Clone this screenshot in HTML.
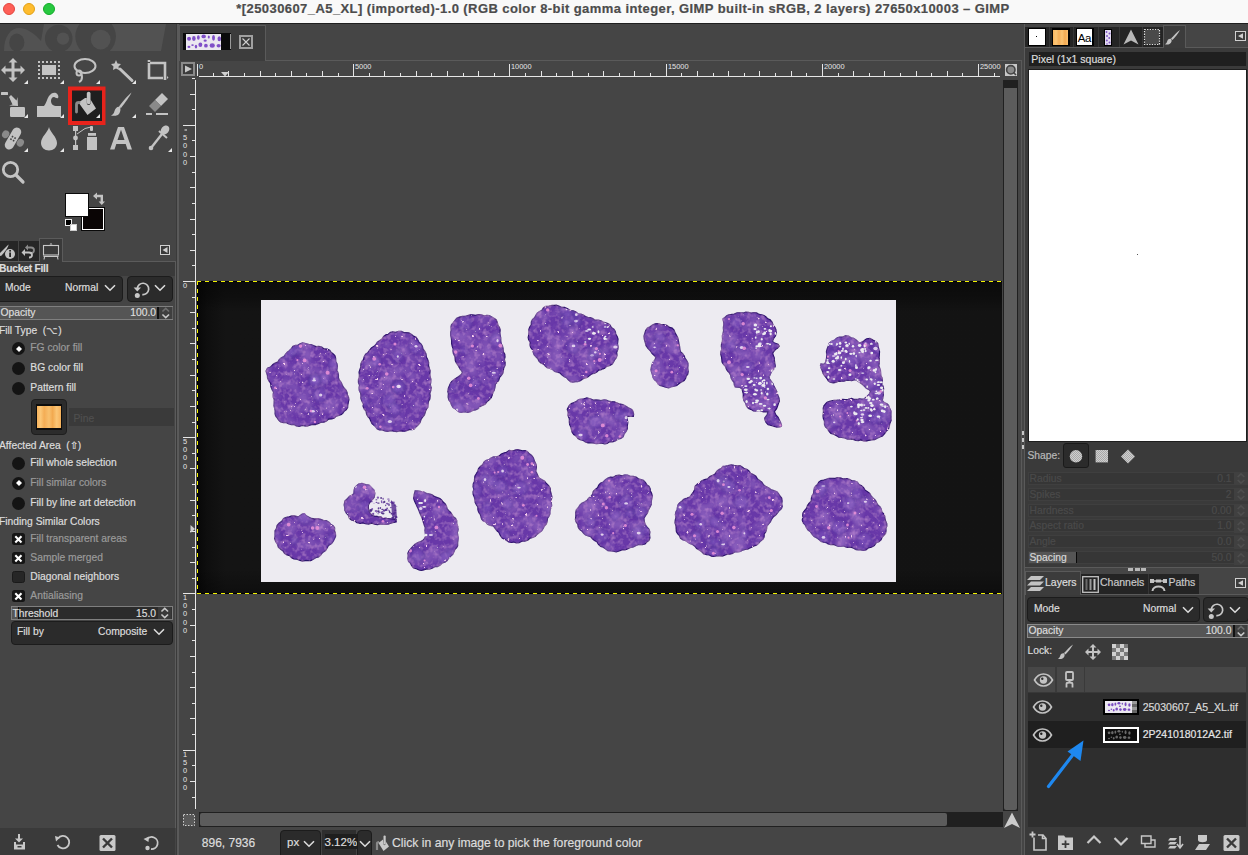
<!DOCTYPE html>
<html><head><meta charset="utf-8">
<style>
*{box-sizing:border-box;margin:0;padding:0}
html,body{width:1248px;height:855px;overflow:hidden;background:#454545;font-family:"Liberation Sans",sans-serif;color:#dcdcdc}
.a{position:absolute}
.tx{white-space:nowrap;line-height:1;-webkit-text-stroke:0.2px currentColor}
svg{overflow:visible}
</style></head><body>

<div class="a" style="left:0px;top:0px;width:1248px;height:23px;background:#f9f9f9;"></div>
<div class="a" style="left:3px;top:3px;width:12px;height:12px;border-radius:50%;background:#fe5f57;border:1px solid #e2463f"></div>
<div class="a" style="left:23px;top:3px;width:12px;height:12px;border-radius:50%;background:#febc2e;border:1px solid #e1a116"></div>
<div class="a" style="left:43px;top:3px;width:12px;height:12px;border-radius:50%;background:#28c840;border:1px solid #12ac28"></div>
<div class="a tx" style="left:-1px;top:0.5px;width:1248px;text-align:center;font-weight:bold;font-size:13px;line-height:normal;color:#4c4c4c;letter-spacing:0.42px">*[25030607_A5_XL] (imported)-1.0 (RGB color 8-bit gamma integer, GIMP built-in sRGB, 2 layers) 27650x10003 – GIMP</div>
<div class="a" style="left:0px;top:23px;width:1248px;height:1px;background:#1f1f1f;"></div>
<svg class="a" style="left:0;top:0" width="178" height="240" viewBox="0 0 178 240"><defs><clipPath id="cw"><rect x="0" y="24" width="178" height="27"/></clipPath></defs>
<!-- wilber -->
<g clip-path="url(#cw)">
<g fill="#525252">
<path d="M4 51 C4 36 11 28 19 28 C27 28 35 34 41 41 L44 24 L166 24 L161 51 Z"/>
</g>
<ellipse cx="16.8" cy="42.5" rx="7.6" ry="9" fill="#454545"/>
<circle cx="58.7" cy="38.5" r="13.8" fill="#454545"/>
<circle cx="63" cy="38.6" r="6.2" fill="#525252"/>
<circle cx="95.6" cy="36.5" r="20.3" fill="#454545"/>
<circle cx="100.7" cy="39.6" r="9.9" fill="#525252"/>
</g>
<rect x="0" y="51" width="178" height="4" fill="#454545"/>
<g fill="#c3c3c3" stroke="none">
<!-- move -->
<path d="M13 58 L17.5 62.5 L14.5 62.5 L14.5 68.5 L20.5 68.5 L20.5 65.5 L25 70 L20.5 74.5 L20.5 71.5 L14.5 71.5 L14.5 77.5 L17.5 77.5 L13 82 L8.5 77.5 L11.5 77.5 L11.5 71.5 L5.5 71.5 L5.5 74.5 L1 70 L5.5 65.5 L5.5 68.5 L11.5 68.5 L11.5 62.5 L8.5 62.5 Z"/>
<!-- rect select -->
<rect x="42" y="65" width="14" height="10"/>
<g>
<rect x="38" y="61" width="2" height="2"/><rect x="42" y="61" width="2" height="2"/><rect x="46" y="61" width="2" height="2"/><rect x="50" y="61" width="2" height="2"/><rect x="54" y="61" width="2" height="2"/><rect x="58" y="61" width="2" height="2"/>
<rect x="38" y="77" width="2" height="2"/><rect x="42" y="77" width="2" height="2"/><rect x="46" y="77" width="2" height="2"/><rect x="50" y="77" width="2" height="2"/><rect x="54" y="77" width="2" height="2"/><rect x="58" y="77" width="2" height="2"/>
<rect x="38" y="65" width="2" height="2"/><rect x="38" y="69" width="2" height="2"/><rect x="38" y="73" width="2" height="2"/>
<rect x="58" y="65" width="2" height="2"/><rect x="58" y="69" width="2" height="2"/><rect x="58" y="73" width="2" height="2"/>
</g>
<!-- corner triangles -->
<path d="M28 80 L28 84 L24 84 Z M64 80 L64 84 L60 84 Z M100 80 L100 84 L96 84 Z M136 80 L136 84 L132 84 Z M28 114 L28 118 L24 118 Z M64 114 L64 118 L60 118 Z M136 114 L136 118 L132 118 Z M28 148 L28 152 L24 152 Z M64 148 L64 152 L60 152 Z M172 148 L172 152 L168 152 Z" fill="#e8e8e8"/>
<path d="M100 114 L100 118 L96 118 Z" fill="#e8e8e8"/>
</g>
<g fill="none" stroke="#c3c3c3" stroke-width="2">
<!-- lasso -->
<ellipse cx="85" cy="66" rx="10.5" ry="7"/>
<circle cx="79" cy="73" r="2.5"/>
<path d="M79 71 C83 74 83 80 79 82"/>
</g>
<!-- wand -->
<path d="M116 60 L117.5 63.5 L121 64 L118.5 66.5 L119 70 L116 68.5 L113 70 L113.5 66.5 L111 64 L114.5 63.5 Z" fill="#c3c3c3"/>
<path d="M120 69 L132 80.5" stroke="#c3c3c3" stroke-width="3" stroke-linecap="round"/>
<!-- crop -->
<path d="M149 63 L149 78 L163 78 M149 62 L149 60 M150 63 L165 63 L165 80" fill="none" stroke="#c3c3c3" stroke-width="2.6"/>
<path d="M167 76 L168.5 77.5 L167 79 Z" fill="#c3c3c3"/>
<!-- row2: align -->
<g fill="#c3c3c3">
<rect x="1" y="92" width="7" height="3" rx="0.5"/>
<path d="M9 97 L11 95 L16.5 100.5 L17.5 97 L18 106 L9 105.5 L12.5 104.5 Z"/>
<rect x="10" y="107" width="15" height="10" rx="1.2"/>
<!-- warp -->
<path d="M37 117 L37 106 L44 106 C46 104 47 99 49 96 C51 93 54 92 56 93 C58 94 59 97 58 98 C57 99 55 97 54 97 C52 97 51 99 51 101 C51 104 53 106 57 106 L61 106 L61 117 Z"/>
</g>
<!-- selected bucket -->
<rect x="68" y="86.5" width="37.5" height="38.5" fill="#e8231b"/>
<rect x="72" y="90.5" width="30" height="30.5" fill="#1f1f1f"/>
<g fill="#c3c3c3">
<path d="M78.5 102.5 L85 98 L86.8 98 L86.8 103 C86.8 105.5 90.5 105.5 90.5 103 L90.5 99.5 L96 108.5 L87.5 115 Z"/>
<rect x="86.8" y="91.8" width="3.7" height="12.5" rx="1.8"/>
<path d="M100 114 L100 118 L96 118 Z" fill="#e8e8e8"/>
</g>
<path d="M76.5 112 L76.5 104.5 C76.5 103 77.5 102.5 79 102.5" stroke="#8a8a8a" stroke-width="2.8" fill="none" stroke-linecap="round"/>
<!-- paintbrush -->
<path d="M131.5 92.5 C130 96 125 103 121 108 L119 106.5 C123 101 128 95.5 131.5 92.5 Z M120 107 C121 109 120.5 113 118 115 C116 116 112 116 111 115.5 C113 115 114 113 114.5 111 C115.5 108 117.5 106 120 107 Z" fill="#c3c3c3"/>
<!-- eraser -->
<path d="M155 100 L162 93 L168 99 L161 106 Z" fill="#c3c3c3"/>
<path d="M149 106 L155 100 L161 106 L155 112 Z" fill="#8a8a8a"/>
<rect x="146" y="113" width="6" height="2" fill="#c3c3c3"/><rect x="156" y="113" width="12" height="2" fill="#c3c3c3"/>
<!-- row3 heal -->
<g transform="translate(13 138.5) rotate(30)">
<ellipse cx="-8.5" cy="0" rx="3.5" ry="4" fill="#8a8a8a"/>
<ellipse cx="8.5" cy="0" rx="3.5" ry="4" fill="#8a8a8a"/>
<rect x="-4.5" y="-12" width="9" height="24" rx="4.5" fill="#c3c3c3"/>
<g fill="#454545"><rect x="-2.2" y="-2.2" width="1.6" height="1.6"/><rect x="0.8" y="-2.2" width="1.6" height="1.6"/><rect x="-2.2" y="0.8" width="1.6" height="1.6"/><rect x="0.8" y="0.8" width="1.6" height="1.6"/></g>
</g>
<!-- blur drop -->
<path d="M49 127 C50 132 57 137 57 143 C57 147.5 53.5 150.5 49 150.5 C44.5 150.5 41 147.5 41 143 C41 137 48 132 49 127 Z" fill="#c3c3c3"/>
<!-- paths + clone bottle -->
<g fill="#c3c3c3">
<rect x="73" y="126" width="5" height="5"/><rect x="73" y="145" width="5" height="5"/>
<circle cx="75.5" cy="138" r="2.4"/><rect x="75" y="130" width="1.2" height="16"/>
<rect x="90" y="126" width="3" height="5" rx="1"/>
<rect x="88" y="133" width="8" height="2.8"/>
<path d="M87 137 L97 137 L97 150 L87 150 Z"/>
</g>
<path d="M77 134 L85 128.5 L91 127" stroke="#c3c3c3" stroke-width="1" fill="none"/>
<!-- text A -->
<path d="M110 149.5 L118 127 L124 127 L132 149.5 L127.5 149.5 L125.7 144 L116.3 144 L114.5 149.5 Z M117.5 140 L124.5 140 L121 129.8 Z" fill="#c3c3c3" fill-rule="evenodd"/>
<!-- color picker -->
<path d="M151 148 L162 134" stroke="#c3c3c3" stroke-width="2.4"/>
<circle cx="151" cy="148" r="2.3" fill="#c3c3c3"/>
<path d="M159 131 L167 138" stroke="#c3c3c3" stroke-width="2"/>
<ellipse cx="165" cy="130" rx="3.8" ry="5" transform="rotate(40 165 130)" fill="#c3c3c3"/>
<!-- zoom -->
<circle cx="10.5" cy="169.5" r="7.2" fill="none" stroke="#c3c3c3" stroke-width="2.8"/>
<path d="M16 175 L23 182" stroke="#c3c3c3" stroke-width="3.2" stroke-linecap="round"/>
<!-- fg/bg -->
<rect x="81" y="207" width="24" height="24" fill="#0a0a0a"/>
<rect x="82" y="208" width="22" height="22" fill="#fff"/>
<rect x="83" y="209" width="20" height="20" fill="#0a0505"/>
<rect x="65" y="193" width="24" height="24" fill="#0a0a0a"/>
<rect x="66" y="194" width="22" height="22" fill="#fff"/>
<rect x="65" y="219" width="7" height="7" fill="#eee"/><rect x="66" y="220" width="5" height="5" fill="#000"/>
<rect x="70" y="224" width="7" height="7" fill="#ccc"/><rect x="71" y="225" width="5" height="5" fill="#fff"/>
<path d="M93 196 L97 192.5 L97 194.8 L103 194.8 L103 201.5 L105 201.5 L101.8 205 L98.6 201.5 L100.6 201.5 L100.6 197.2 L97 197.2 L97 199.5 Z" fill="#c3c3c3"/>
</svg>
<div class="a" style="left:0px;top:241px;width:18px;height:20px;background:#262626;"></div>
<div class="a" style="left:19px;top:241px;width:20px;height:20px;background:#262626;"></div>
<div class="a" style="left:39px;top:238px;width:24px;height:24px;background:#3a3a3a;border:1px solid #5b5b5b;border-bottom:none"></div>
<div class="a" style="left:63px;top:261px;width:113px;height:1px;background:#5b5b5b;"></div>
<div class="a" style="left:0px;top:261px;width:39px;height:1px;background:#5b5b5b;"></div>
<div class="a" style="left:40px;top:261px;width:22px;height:1px;background:#3a3a3a;"></div>
<div class="a" style="left:175px;top:261px;width:1px;height:567px;background:#5b5b5b;"></div>
<svg class="a" style="left:0px;top:243px;" width="16" height="16" viewBox="0 0 16 16"><path d="M-2 12 L8.5 1.5 C9 3 5 9 1 13 Z" fill="#c3c3c3"/><circle cx="10" cy="11" r="5" fill="#c3c3c3"/><rect x="9.2" y="9.5" width="1.8" height="4.5" fill="#262626"/><rect x="9.2" y="7" width="1.8" height="1.6" fill="#262626"/></svg>
<svg class="a" style="left:20px;top:243px;" width="18" height="16" viewBox="0 0 18 16"><path d="M7 4.5 L11 4.5 C15 4.5 15 10 11 10" fill="none" stroke="#8a8a8a" stroke-width="1.8"/><path d="M5 4.5 L8 1.5 L8 7.5 Z" fill="#8a8a8a"/><path d="M5 9.5 L9 9.5 C13 9.5 13 14.5 9 14.5" fill="none" stroke="#c3c3c3" stroke-width="1.8"/><path d="M1.5 9.5 L5 6 L5 13 Z" fill="#c3c3c3"/></svg>
<svg class="a" style="left:42px;top:242px;" width="18" height="18" viewBox="0 0 18 18"><rect x="1.5" y="3.5" width="15" height="9.5" fill="none" stroke="#c8c8c8" stroke-width="1.1"/><rect x="1.5" y="14" width="15" height="1" fill="#c8c8c8"/><path d="M7.5 2.5 L9 1 L10.5 2.5 Z" fill="#c8c8c8"/><path d="M2.5 15 L2 17.5 M15.5 15 L16 17.5" stroke="#c8c8c8" stroke-width="1.1"/></svg>
<svg class="a" style="left:160px;top:245px;" width="10" height="10" viewBox="0 0 10 10"><rect x="0.5" y="0.5" width="9" height="9" fill="#3a3a3a" stroke="#d0d0d0" stroke-width="1"/><path d="M2.5 5 L7.5 2 L7.5 8 Z" fill="#d0d0d0"/></svg>
<div class="a" style="left:0px;top:262px;width:175px;height:14px;background:#3a3a3a;"></div>
<div class="a tx" style="left:-1px;top:264px;font-size:10.3px;color:#dcdcdc;font-weight:bold;letter-spacing:-0.25px">Bucket Fill</div>
<div class="a" style="left:-6px;top:276px;width:129px;height:26px;background:#2b2b2b;border:1px solid #1c1c1c;border-radius:4px"></div>
<div class="a tx" style="left:5px;top:283px;font-size:10.3px;color:#dcdcdc;">Mode</div>
<div class="a tx" style="left:65px;top:283px;font-size:10.3px;color:#dcdcdc;">Normal</div>
<svg class="a" style="left:104px;top:284px;" width="12" height="8" viewBox="0 0 12 8"><path d="M1 1.2 L6 6.2 L11 1.2" fill="none" stroke="#dcdcdc" stroke-width="1.6"/></svg>
<div class="a" style="left:127px;top:276px;width:46px;height:26px;background:#2b2b2b;border:1px solid #1c1c1c;border-radius:4px"></div>
<svg class="a" style="left:132.7px;top:281px;" width="16" height="16" viewBox="0 0 16 16"><path d="M4.3 7.6 A5.7 5.7 0 1 1 9.3 13.6" fill="none" stroke="#c8c8c8" stroke-width="1.7"/><path d="M0.6 6.4 L8 6.4 L4.3 10.6 Z" fill="#c8c8c8"/><circle cx="4.3" cy="14.4" r="2.5" fill="#c8c8c8"/></svg>
<svg class="a" style="left:154px;top:284px;" width="12" height="8" viewBox="0 0 12 8"><path d="M1 1.2 L6 6.2 L11 1.2" fill="none" stroke="#dcdcdc" stroke-width="1.6"/></svg>
<div class="a" style="left:0px;top:306px;width:173px;height:14px;background:#555555;border:1px solid #7f7f7f;border-left:none"></div>
<div class="a" style="left:157px;top:307px;width:1.5px;height:12px;background:#111;"></div>
<svg class="a" style="left:158.5px;top:307px;" width="13.5" height="12" viewBox="0 0 13.5 12"><rect width="13.5" height="12" fill="#3f3f3f"/><path d="M3.45 4.5 L6.75 1.4000000000000004 L10.05 4.5" fill="none" stroke="#6e6e6e" stroke-width="1.6"/><path d="M3.45 7.5 L6.75 10.6 L10.05 7.5" fill="none" stroke="#c8c8c8" stroke-width="1.6"/></svg>
<div class="a tx" style="left:0.5px;top:308px;font-size:10.3px;color:#dcdcdc;">Opacity</div>
<div class="a tx" style="right:1092px;top:308px;font-size:10.3px;color:#dcdcdc;">100.0</div>
<div class="a tx" style="left:-1px;top:326px;font-size:10.3px;color:#dcdcdc;">Fill Type&nbsp;&nbsp;(⌥)</div>
<div class="a" style="left:12.0px;top:342.0px;width:13px;height:13px;border-radius:50%;background:#141414"></div>
<svg class="a" style="left:15.5px;top:345.5px;" width="6" height="6" viewBox="0 0 6 6"><path d="M3 0 L6 3 L3 6 L0 3 Z" fill="#fff"/></svg>
<div class="a tx" style="left:30.3px;top:343px;font-size:10.3px;color:#9a9a9a;">FG color fill</div>
<div class="a" style="left:12.0px;top:361.8px;width:13px;height:13px;border-radius:50%;background:#141414"></div>
<div class="a tx" style="left:30.3px;top:363px;font-size:10.3px;color:#dcdcdc;">BG color fill</div>
<div class="a" style="left:12.0px;top:381.9px;width:13px;height:13px;border-radius:50%;background:#141414"></div>
<div class="a tx" style="left:30.3px;top:383px;font-size:10.3px;color:#dcdcdc;">Pattern fill</div>
<div class="a" style="left:31px;top:399px;width:36px;height:36px;background:#2c2c2c;border:1px solid #1e1e1e;border-radius:4px"></div>
<div class="a" style="left:36px;top:404px;width:26px;height:26px;background:#0d0d0d;"></div>
<div class="a" style="left:37px;top:405.5px;width:24px;height:22px;background:linear-gradient(90deg,#f7b25c 0%,#fbc777 15%,#f4ad55 30%,#f8c06e 50%,#f2a94f 65%,#fbc676 82%,#f5b05a 100%)"></div>
<div class="a" style="left:69px;top:408px;width:105px;height:18px;background:#3a3a3a;"></div>
<div class="a tx" style="left:73.5px;top:414px;font-size:10.3px;color:#4f4f4f;">Pine</div>
<div class="a tx" style="left:-1px;top:441px;font-size:10.3px;color:#dcdcdc;">Affected Area&nbsp;&nbsp;(⇧)</div>
<div class="a" style="left:12.0px;top:456.5px;width:13px;height:13px;border-radius:50%;background:#141414"></div>
<div class="a tx" style="left:30.3px;top:458px;font-size:10.3px;color:#dcdcdc;">Fill whole selection</div>
<div class="a" style="left:12.0px;top:476.5px;width:13px;height:13px;border-radius:50%;background:#141414"></div>
<svg class="a" style="left:15.5px;top:480px;" width="6" height="6" viewBox="0 0 6 6"><path d="M3 0 L6 3 L3 6 L0 3 Z" fill="#fff"/></svg>
<div class="a tx" style="left:30.3px;top:478px;font-size:10.3px;color:#9a9a9a;">Fill similar colors</div>
<div class="a" style="left:12.0px;top:496.5px;width:13px;height:13px;border-radius:50%;background:#141414"></div>
<div class="a tx" style="left:30.3px;top:498px;font-size:10.3px;color:#dcdcdc;">Fill by line art detection</div>
<div class="a tx" style="left:-1px;top:517px;font-size:10.3px;color:#dcdcdc;">Finding Similar Colors</div>
<div class="a" style="left:12px;top:532.5px;width:12.5px;height:12.5px;background:#151515;border-radius:2.5px;"></div>
<svg class="a" style="left:12px;top:532.5px;" width="13" height="13" viewBox="0 0 13 13"><path d="M3.3 3.3 L9.5 9.5 M9.5 3.3 L3.3 9.5" stroke="#fff" stroke-width="2.1"/></svg>
<div class="a tx" style="left:30.3px;top:534px;font-size:10.3px;color:#9a9a9a;">Fill transparent areas</div>
<div class="a" style="left:12px;top:551.5px;width:12.5px;height:12.5px;background:#151515;border-radius:2.5px;"></div>
<svg class="a" style="left:12px;top:551.5px;" width="13" height="13" viewBox="0 0 13 13"><path d="M3.3 3.3 L9.5 9.5 M9.5 3.3 L3.3 9.5" stroke="#fff" stroke-width="2.1"/></svg>
<div class="a tx" style="left:30.3px;top:553px;font-size:10.3px;color:#9a9a9a;">Sample merged</div>
<div class="a" style="left:12px;top:570.5px;width:12.5px;height:12.5px;background:#262626;border-radius:2.5px;border:1px solid #1a1a1a"></div>
<div class="a tx" style="left:30.3px;top:572px;font-size:10.3px;color:#dcdcdc;">Diagonal neighbors</div>
<div class="a" style="left:12px;top:589.5px;width:12.5px;height:12.5px;background:#151515;border-radius:2.5px;"></div>
<svg class="a" style="left:12px;top:589.5px;" width="13" height="13" viewBox="0 0 13 13"><path d="M3.3 3.3 L9.5 9.5 M9.5 3.3 L3.3 9.5" stroke="#fff" stroke-width="2.1"/></svg>
<div class="a tx" style="left:30.3px;top:591px;font-size:10.3px;color:#9a9a9a;">Antialiasing</div>
<div class="a" style="left:10.5px;top:606px;width:162px;height:14px;background:#2b2b2b;border:1px solid #7f7f7f"></div>
<div class="a" style="left:11.5px;top:607px;width:6px;height:12px;background:#555555;"></div>
<div class="a" style="left:17.5px;top:607px;width:1px;height:12px;background:#0a0a0a;"></div>
<svg class="a" style="left:158px;top:607px;" width="13.5" height="12" viewBox="0 0 13.5 12"><rect width="13.5" height="12" fill="#3a3a3a"/><path d="M3.45 4.5 L6.75 1.4000000000000004 L10.05 4.5" fill="none" stroke="#c8c8c8" stroke-width="1.6"/><path d="M3.45 7.5 L6.75 10.6 L10.05 7.5" fill="none" stroke="#c8c8c8" stroke-width="1.6"/></svg>
<div class="a tx" style="left:12.5px;top:608.5px;font-size:10.3px;color:#dcdcdc;">Threshold</div>
<div class="a tx" style="right:1092px;top:608.5px;font-size:10.3px;color:#dcdcdc;">15.0</div>
<div class="a" style="left:10.5px;top:620.5px;width:162px;height:24px;background:#2b2b2b;border:1px solid #1c1c1c;border-radius:4px"></div>
<div class="a tx" style="left:17px;top:627px;font-size:10.3px;color:#dcdcdc;">Fill by</div>
<div class="a tx" style="left:98px;top:627px;font-size:10.3px;color:#dcdcdc;">Composite</div>
<svg class="a" style="left:153px;top:628px;" width="12" height="8" viewBox="0 0 12 8"><path d="M1 1.2 L6 6.2 L11 1.2" fill="none" stroke="#dcdcdc" stroke-width="1.6"/></svg>
<div class="a" style="left:0px;top:828px;width:175px;height:27px;background:#3a3a3a;"></div>
<svg class="a" style="left:0px;top:828px;" width="178" height="27" viewBox="0 0 178 27">
<g fill="#c8c8c8">
<rect x="18" y="6" width="2" height="6"/><path d="M15 10.5 L23 10.5 L19 14.5 Z"/>
<path d="M14 14 L14 21.5 L25 21.5 L25 14 L23 14 L23 16.5 L16 16.5 L16 14 Z M17.5 18 L21.5 18 L21.5 19.5 L17.5 19.5 Z" fill-rule="evenodd"/>
</g>
<path d="M58 10.5 A6.2 6.2 0 1 1 57.5 17" fill="none" stroke="#c8c8c8" stroke-width="1.8"/><path d="M55 8 L60 9.5 L56 13.5 Z" fill="#c8c8c8"/>
<rect x="99.5" y="7" width="16" height="16" rx="1.5" fill="#c8c8c8"/><path d="M103 10.5 L112 19.5 M112 10.5 L103 19.5" stroke="#3a3a3a" stroke-width="2.4"/>
<path d="M146.5 12 A6 6 0 1 1 151 21" fill="none" stroke="#c8c8c8" stroke-width="1.8"/><path d="M143.5 11 L149 8.5 L148.5 14 Z" fill="#c8c8c8"/><circle cx="147.5" cy="20" r="2.2" fill="#c8c8c8"/>
</svg>
<div class="a" style="left:176px;top:431px;width:2px;height:4px;background:#c8c8c8;"></div>
<div class="a" style="left:176px;top:438px;width:2px;height:4px;background:#c8c8c8;"></div>
<div class="a" style="left:176px;top:445px;width:2px;height:4px;background:#c8c8c8;"></div>
<div class="a" style="left:176px;top:24px;width:1px;height:831px;background:#3a3a3a;"></div>
<div class="a" style="left:177px;top:24px;width:1.5px;height:831px;background:#5a5a5a;"></div>
<div class="a" style="left:179px;top:24px;width:842px;height:36px;background:#454545;"></div>
<div class="a" style="left:178.5px;top:24.5px;width:87px;height:36px;background:#3c3c3c;border:1px solid #5a5a5a;border-bottom:none"></div>
<div class="a" style="left:265.5px;top:59.5px;width:756px;height:1px;background:#5a5a5a;"></div>
<div class="a" style="left:1020.5px;top:59.5px;width:1px;height:796px;background:#5a5a5a;"></div>
<div class="a" style="left:183px;top:33px;width:47.5px;height:17px;background:#0a0a0a;"></div>
<div class="a" style="left:186px;top:34px;width:35px;height:15.5px;background:#ebe8f0;"></div>
<div class="a" style="left:230px;top:34px;width:1px;height:15px;background:#9a9a9a;"></div>
<svg class="a" style="left:183px;top:33px;" width="48" height="17" viewBox="0 0 48 17"><ellipse cx="6.07" cy="5.67" rx="2.00" ry="2.01" fill="#8050c8" opacity="1"/><ellipse cx="10.88" cy="5.49" rx="1.80" ry="2.39" fill="#8050c8" opacity="1"/><ellipse cx="15.37" cy="4.50" rx="1.39" ry="2.36" fill="#8050c8" opacity="1"/><ellipse cx="20.68" cy="3.39" rx="2.22" ry="1.87" fill="#8050c8" opacity="1"/><ellipse cx="22.17" cy="7.63" rx="1.62" ry="1.10" fill="#8050c8" opacity="1"/><ellipse cx="25.79" cy="4.06" rx="1.05" ry="1.56" fill="#8050c8" opacity="1"/><ellipse cx="30.51" cy="4.82" rx="1.47" ry="2.82" fill="#8050c8" opacity="1"/><ellipse cx="36.25" cy="5.84" rx="1.73" ry="2.53" fill="#8050c8" opacity="1"/><ellipse cx="5.95" cy="13.92" rx="1.48" ry="1.16" fill="#8050c8" opacity="1"/><ellipse cx="9.53" cy="12.12" rx="1.27" ry="0.99" fill="#8050c8" opacity="1"/><ellipse cx="12.98" cy="13.59" rx="1.22" ry="1.94" fill="#8050c8" opacity="1"/><ellipse cx="17.35" cy="11.74" rx="1.94" ry="2.26" fill="#8050c8" opacity="1"/><ellipse cx="22.92" cy="12.63" rx="1.86" ry="1.86" fill="#8050c8" opacity="1"/><ellipse cx="29.23" cy="12.48" rx="2.62" ry="2.19" fill="#8050c8" opacity="1"/><ellipse cx="35.61" cy="12.71" rx="2.08" ry="1.76" fill="#8050c8" opacity="1"/></svg>
<svg class="a" style="left:239px;top:35px;" width="14" height="14" viewBox="0 0 14 14"><rect x="1" y="1" width="12" height="12" fill="#3c3c3c" stroke="#a0a0a0" stroke-width="2"/><path d="M3.5 3.5 L10.5 10.5 M10.5 3.5 L3.5 10.5" stroke="#d0d0d0" stroke-width="1.1"/></svg>
<svg class="a" style="left:181px;top:62px;" width="14" height="14" viewBox="0 0 14 14"><rect x="1" y="1" width="12" height="12" fill="#3c3c3c" stroke="#8a8a8a" stroke-width="2"/><path d="M4 3.5 L11 7 L4 10.5 Z" fill="#c8c8c8"/></svg>
<svg class="a" style="left:197px;top:61px;" width="804" height="17" viewBox="0 0 804 17"><rect x="2" y="15" width="801" height="1" fill="#e6e6e6"/><rect x="0" y="3" width="1" height="12" fill="#e6e6e6"/><text x="2" y="8.3" font-size="7.4" fill="#e6e6e6" font-family="Liberation Sans">0</text><rect x="16" y="12" width="1" height="3" fill="#e6e6e6"/><rect x="31" y="10" width="1" height="5" fill="#e6e6e6"/><rect x="47" y="12" width="1" height="3" fill="#e6e6e6"/><rect x="63" y="10" width="1" height="5" fill="#e6e6e6"/><rect x="78" y="12" width="1" height="3" fill="#e6e6e6"/><rect x="94" y="10" width="1" height="5" fill="#e6e6e6"/><rect x="109" y="12" width="1" height="3" fill="#e6e6e6"/><rect x="125" y="10" width="1" height="5" fill="#e6e6e6"/><rect x="141" y="12" width="1" height="3" fill="#e6e6e6"/><rect x="156" y="3" width="1" height="12" fill="#e6e6e6"/><text x="158" y="8.3" font-size="7.4" fill="#e6e6e6" font-family="Liberation Sans">5000</text><rect x="172" y="12" width="1" height="3" fill="#e6e6e6"/><rect x="187" y="10" width="1" height="5" fill="#e6e6e6"/><rect x="203" y="12" width="1" height="3" fill="#e6e6e6"/><rect x="219" y="10" width="1" height="5" fill="#e6e6e6"/><rect x="234" y="12" width="1" height="3" fill="#e6e6e6"/><rect x="250" y="10" width="1" height="5" fill="#e6e6e6"/><rect x="266" y="12" width="1" height="3" fill="#e6e6e6"/><rect x="281" y="10" width="1" height="5" fill="#e6e6e6"/><rect x="297" y="12" width="1" height="3" fill="#e6e6e6"/><rect x="312" y="3" width="1" height="12" fill="#e6e6e6"/><text x="314" y="8.3" font-size="7.4" fill="#e6e6e6" font-family="Liberation Sans">10000</text><rect x="328" y="12" width="1" height="3" fill="#e6e6e6"/><rect x="344" y="10" width="1" height="5" fill="#e6e6e6"/><rect x="359" y="12" width="1" height="3" fill="#e6e6e6"/><rect x="375" y="10" width="1" height="5" fill="#e6e6e6"/><rect x="391" y="12" width="1" height="3" fill="#e6e6e6"/><rect x="406" y="10" width="1" height="5" fill="#e6e6e6"/><rect x="422" y="12" width="1" height="3" fill="#e6e6e6"/><rect x="437" y="10" width="1" height="5" fill="#e6e6e6"/><rect x="453" y="12" width="1" height="3" fill="#e6e6e6"/><rect x="469" y="3" width="1" height="12" fill="#e6e6e6"/><text x="471" y="8.3" font-size="7.4" fill="#e6e6e6" font-family="Liberation Sans">15000</text><rect x="484" y="12" width="1" height="3" fill="#e6e6e6"/><rect x="500" y="10" width="1" height="5" fill="#e6e6e6"/><rect x="516" y="12" width="1" height="3" fill="#e6e6e6"/><rect x="531" y="10" width="1" height="5" fill="#e6e6e6"/><rect x="547" y="12" width="1" height="3" fill="#e6e6e6"/><rect x="562" y="10" width="1" height="5" fill="#e6e6e6"/><rect x="578" y="12" width="1" height="3" fill="#e6e6e6"/><rect x="594" y="10" width="1" height="5" fill="#e6e6e6"/><rect x="609" y="12" width="1" height="3" fill="#e6e6e6"/><rect x="625" y="3" width="1" height="12" fill="#e6e6e6"/><text x="627" y="8.3" font-size="7.4" fill="#e6e6e6" font-family="Liberation Sans">20000</text><rect x="641" y="12" width="1" height="3" fill="#e6e6e6"/><rect x="656" y="10" width="1" height="5" fill="#e6e6e6"/><rect x="672" y="12" width="1" height="3" fill="#e6e6e6"/><rect x="687" y="10" width="1" height="5" fill="#e6e6e6"/><rect x="703" y="12" width="1" height="3" fill="#e6e6e6"/><rect x="719" y="10" width="1" height="5" fill="#e6e6e6"/><rect x="734" y="12" width="1" height="3" fill="#e6e6e6"/><rect x="750" y="10" width="1" height="5" fill="#e6e6e6"/><rect x="765" y="12" width="1" height="3" fill="#e6e6e6"/><rect x="781" y="3" width="1" height="12" fill="#e6e6e6"/><text x="783" y="8.3" font-size="7.4" fill="#e6e6e6" font-family="Liberation Sans">25000</text><rect x="797" y="12" width="1" height="3" fill="#e6e6e6"/><path d="M24 11 L32 11 L28 15.5 Z" fill="#cfcfcf"/></svg>
<svg class="a" style="left:180px;top:80px;" width="17" height="729" viewBox="0 0 17 729"><rect x="15" y="0" width="1" height="729" fill="#e6e6e6"/><rect x="12" y="-2" width="3" height="1" fill="#e6e6e6"/><rect x="10" y="14" width="5" height="1" fill="#e6e6e6"/><rect x="12" y="29" width="3" height="1" fill="#e6e6e6"/><rect x="3" y="45" width="12" height="1" fill="#e6e6e6"/><rect x="4.5" y="49.50" width="2.5" height="1" fill="#e6e6e6"/><text x="3" y="60.10" font-size="7.4" fill="#e6e6e6" font-family="Liberation Sans">5</text><text x="3" y="68.30" font-size="7.4" fill="#e6e6e6" font-family="Liberation Sans">0</text><text x="3" y="76.50" font-size="7.4" fill="#e6e6e6" font-family="Liberation Sans">0</text><text x="3" y="84.70" font-size="7.4" fill="#e6e6e6" font-family="Liberation Sans">0</text><rect x="12" y="60" width="3" height="1" fill="#e6e6e6"/><rect x="10" y="76" width="5" height="1" fill="#e6e6e6"/><rect x="12" y="92" width="3" height="1" fill="#e6e6e6"/><rect x="10" y="107" width="5" height="1" fill="#e6e6e6"/><rect x="12" y="123" width="3" height="1" fill="#e6e6e6"/><rect x="10" y="139" width="5" height="1" fill="#e6e6e6"/><rect x="12" y="154" width="3" height="1" fill="#e6e6e6"/><rect x="10" y="170" width="5" height="1" fill="#e6e6e6"/><rect x="12" y="185" width="3" height="1" fill="#e6e6e6"/><rect x="3" y="201" width="12" height="1" fill="#e6e6e6"/><text x="3" y="207.90" font-size="7.4" fill="#e6e6e6" font-family="Liberation Sans">0</text><rect x="12" y="217" width="3" height="1" fill="#e6e6e6"/><rect x="10" y="232" width="5" height="1" fill="#e6e6e6"/><rect x="12" y="248" width="3" height="1" fill="#e6e6e6"/><rect x="10" y="263" width="5" height="1" fill="#e6e6e6"/><rect x="12" y="279" width="3" height="1" fill="#e6e6e6"/><rect x="10" y="295" width="5" height="1" fill="#e6e6e6"/><rect x="12" y="310" width="3" height="1" fill="#e6e6e6"/><rect x="10" y="326" width="5" height="1" fill="#e6e6e6"/><rect x="12" y="342" width="3" height="1" fill="#e6e6e6"/><rect x="3" y="357" width="12" height="1" fill="#e6e6e6"/><text x="3" y="363.90" font-size="7.4" fill="#e6e6e6" font-family="Liberation Sans">5</text><text x="3" y="372.10" font-size="7.4" fill="#e6e6e6" font-family="Liberation Sans">0</text><text x="3" y="380.30" font-size="7.4" fill="#e6e6e6" font-family="Liberation Sans">0</text><text x="3" y="388.50" font-size="7.4" fill="#e6e6e6" font-family="Liberation Sans">0</text><rect x="12" y="373" width="3" height="1" fill="#e6e6e6"/><rect x="10" y="388" width="5" height="1" fill="#e6e6e6"/><rect x="12" y="404" width="3" height="1" fill="#e6e6e6"/><rect x="10" y="420" width="5" height="1" fill="#e6e6e6"/><rect x="12" y="435" width="3" height="1" fill="#e6e6e6"/><rect x="10" y="451" width="5" height="1" fill="#e6e6e6"/><rect x="12" y="467" width="3" height="1" fill="#e6e6e6"/><rect x="10" y="482" width="5" height="1" fill="#e6e6e6"/><rect x="12" y="498" width="3" height="1" fill="#e6e6e6"/><rect x="3" y="513" width="12" height="1" fill="#e6e6e6"/><text x="3" y="519.90" font-size="7.4" fill="#e6e6e6" font-family="Liberation Sans">1</text><text x="3" y="528.10" font-size="7.4" fill="#e6e6e6" font-family="Liberation Sans">0</text><text x="3" y="536.30" font-size="7.4" fill="#e6e6e6" font-family="Liberation Sans">0</text><text x="3" y="544.50" font-size="7.4" fill="#e6e6e6" font-family="Liberation Sans">0</text><text x="3" y="552.70" font-size="7.4" fill="#e6e6e6" font-family="Liberation Sans">0</text><rect x="12" y="529" width="3" height="1" fill="#e6e6e6"/><rect x="10" y="545" width="5" height="1" fill="#e6e6e6"/><rect x="12" y="560" width="3" height="1" fill="#e6e6e6"/><rect x="10" y="576" width="5" height="1" fill="#e6e6e6"/><rect x="12" y="592" width="3" height="1" fill="#e6e6e6"/><rect x="10" y="607" width="5" height="1" fill="#e6e6e6"/><rect x="12" y="623" width="3" height="1" fill="#e6e6e6"/><rect x="10" y="638" width="5" height="1" fill="#e6e6e6"/><rect x="12" y="654" width="3" height="1" fill="#e6e6e6"/><rect x="3" y="670" width="12" height="1" fill="#e6e6e6"/><text x="3" y="676.90" font-size="7.4" fill="#e6e6e6" font-family="Liberation Sans">1</text><text x="3" y="685.10" font-size="7.4" fill="#e6e6e6" font-family="Liberation Sans">5</text><text x="3" y="693.30" font-size="7.4" fill="#e6e6e6" font-family="Liberation Sans">0</text><text x="3" y="701.50" font-size="7.4" fill="#e6e6e6" font-family="Liberation Sans">0</text><text x="3" y="709.70" font-size="7.4" fill="#e6e6e6" font-family="Liberation Sans">0</text><rect x="12" y="685" width="3" height="1" fill="#e6e6e6"/><rect x="10" y="701" width="5" height="1" fill="#e6e6e6"/><rect x="12" y="717" width="3" height="1" fill="#e6e6e6"/><path d="M10.5 445 L15 449 L10.5 453 Z" fill="#cfcfcf"/></svg>
<svg class="a" style="left:1005px;top:64px;" width="12" height="12" viewBox="0 0 12 12"><rect width="12" height="12" fill="#c8c8c8"/><circle cx="5.8" cy="5.8" r="4.2" fill="#8a8a8a" stroke="#454545" stroke-width="1.6"/><path d="M8.5 8.5 L11 11" stroke="#454545" stroke-width="1.6"/></svg>
<div class="a" style="left:1003px;top:80px;width:15px;height:731px;background:#202020;"></div>
<div class="a" style="left:1004px;top:88px;width:13px;height:722px;background:#5c5c5c;border-radius:0 0 2px 2px"></div>
<div class="a" style="left:199px;top:812px;width:804px;height:15px;background:#202020;"></div>
<div class="a" style="left:200px;top:813px;width:747px;height:13px;background:#5c5c5c;border-radius:2px"></div>
<svg class="a" style="left:1003px;top:812px;" width="18" height="17" viewBox="0 0 18 17"><path d="M9 0.5 L17 16 L9 12 L1 16 Z" fill="#cccccc"/></svg>
<svg class="a" style="left:183px;top:814px;" width="12" height="12" viewBox="0 0 12 12"><rect x="0.5" y="0.5" width="11" height="11" fill="#5a5a5a" stroke="#d0d0d0" stroke-width="1" stroke-dasharray="1.5 1.5"/></svg>
<div class="a tx" style="left:201.8px;top:837px;font-size:12px;color:#dcdcdc;">896, 7936</div>
<div class="a" style="left:279.5px;top:830px;width:41px;height:30px;background:#2b2b2b;border:1px solid #1c1c1c;border-radius:4px"></div>
<div class="a tx" style="left:287px;top:837px;font-size:11.5px;color:#dcdcdc;">px</div>
<svg class="a" style="left:303px;top:840px;" width="12" height="8" viewBox="0 0 12 8"><path d="M1 1.2 L6 6.2 L11 1.2" fill="none" stroke="#dcdcdc" stroke-width="1.6"/></svg>
<div class="a" style="left:322px;top:830px;width:34px;height:30px;background:#2e2e2e;"></div>
<div class="a" style="left:324.5px;top:834px;width:33px;height:15px;background:#1e1e1e;"></div>
<div class="a tx" style="left:324.5px;top:837px;font-size:11.5px;color:#dcdcdc;">3.12%</div>
<div class="a" style="left:357px;top:830px;width:15px;height:30px;background:#2b2b2b;border:1px solid #1c1c1c;border-radius:4px"></div>
<svg class="a" style="left:358.5px;top:840px;" width="12" height="8" viewBox="0 0 12 8"><path d="M1 1.2 L6 6.2 L11 1.2" fill="none" stroke="#dcdcdc" stroke-width="1.6"/></svg>
<svg class="a" style="left:374px;top:834px;" width="16" height="18" viewBox="0 0 16 18"><path d="M3 16 L3 9.5 C3 8.5 4 8 5 8" stroke="#8a8a8a" stroke-width="2.2" fill="none"/><path d="M4.5 9 L9 5.5 L9.5 10 C9.5 11.5 11.5 11.5 11.5 10 L11.5 7 L15 12.5 L9.5 17 Z" fill="#c8c8c8"/><rect x="9.5" y="1.5" width="2.2" height="9" rx="1" fill="#c8c8c8"/></svg>
<div class="a tx" style="left:392px;top:837px;font-size:12.2px;color:#dcdcdc;">Click in any image to pick the foreground color</div>
<svg class="a" style="left:197px;top:281px;overflow:hidden" width="805" height="313" viewBox="0 0 805 313"><defs><linearGradient id="vl" x1="0" x2="1"><stop offset="0" stop-color="#070707"/><stop offset="0.012" stop-color="#0e0e0e"/><stop offset="0.035" stop-color="#141414"/><stop offset="1" stop-color="#131313"/></linearGradient><filter id="tex" x="0" y="0" width="100%" height="100%"><feTurbulence type="fractalNoise" baseFrequency="0.35" numOctaves="2" seed="3"/><feColorMatrix values="0 0 0 0 0.55  0 0 0 0 0.4  0 0 0 0 0.85  0 0 0 1.6 -0.75"/><feComposite in2="SourceGraphic" operator="in"/></filter><filter id="bl1" x="-30%" y="-30%" width="160%" height="160%"><feGaussianBlur stdDeviation="0.9"/></filter></defs><rect x="0" y="0" width="805" height="313" fill="url(#vl)"/><defs><linearGradient id="vt" x1="0" x2="0" y1="0" y2="1"><stop offset="0" stop-color="#000" stop-opacity="0.45"/><stop offset="0.05" stop-color="#000" stop-opacity="0.3"/><stop offset="0.1" stop-color="#000" stop-opacity="0"/><stop offset="0.92" stop-color="#000" stop-opacity="0"/><stop offset="1" stop-color="#000" stop-opacity="0.3"/></linearGradient></defs><rect x="0" y="0" width="805" height="313" fill="url(#vt)"/><rect x="64" y="19" width="635" height="282" fill="#edebf1"/><defs><filter id="tx2" x="-5%" y="-5%" width="110%" height="110%"><feTurbulence type="fractalNoise" baseFrequency="0.22" numOctaves="2" seed="5" result="n1"/><feColorMatrix in="n1" type="matrix" values="0 0 0 0 0.58  0 0 0 0 0.28  0 0 0 0 0.68  0 0 0 1.2 -0.55" result="st"/><feComposite in="st" in2="SourceAlpha" operator="in" result="st2"/><feTurbulence type="fractalNoise" baseFrequency="0.06" numOctaves="2" seed="21" result="n3"/><feColorMatrix in="n3" type="matrix" values="0 0 0 0 0.36  0 0 0 0 0.18  0 0 0 0 0.60  0 0 0 1.4 -0.6" result="dk"/><feComposite in="dk" in2="SourceAlpha" operator="in" result="dk2"/><feTurbulence type="fractalNoise" baseFrequency="0.28" numOctaves="2" seed="9" result="n2"/><feColorMatrix in="n2" type="matrix" values="0 0 0 0 0.93  0 0 0 0 0.62  0 0 0 0 0.86  0 0 0 16 -12.0" result="pk"/><feComposite in="pk" in2="SourceAlpha" operator="in" result="pk2"/><feTurbulence type="fractalNoise" baseFrequency="0.5" numOctaves="2" seed="13" result="n4"/><feColorMatrix in="n4" type="matrix" values="0 0 0 0 0.96  0 0 0 0 0.93  0 0 0 0 0.98  0 0 0 16 -13.0" result="wh"/><feComposite in="wh" in2="SourceAlpha" operator="in" result="wh2"/><feMerge><feMergeNode in="SourceGraphic"/><feMergeNode in="dk2"/><feMergeNode in="st2"/><feMergeNode in="pk2"/><feMergeNode in="wh2"/></feMerge></filter></defs><ellipse cx="179.4" cy="218.7" rx="1.0" ry="0.5" fill="#3c1c78" opacity="0.85"/><ellipse cx="173.5" cy="230.3" rx="1.3" ry="1.0" fill="#6e44a8" opacity="0.85"/><ellipse cx="179.0" cy="230.0" rx="1.3" ry="1.1" fill="#6e44a8" opacity="0.85"/><ellipse cx="180.1" cy="240.5" rx="1.3" ry="1.0" fill="#4a2488" opacity="0.85"/><ellipse cx="194.6" cy="221.0" rx="0.8" ry="1.1" fill="#6e44a8" opacity="0.85"/><ellipse cx="198.9" cy="238.1" rx="0.6" ry="0.9" fill="#6e44a8" opacity="0.85"/><ellipse cx="191.1" cy="229.2" rx="0.7" ry="0.6" fill="#5e3298" opacity="0.85"/><ellipse cx="198.5" cy="237.3" rx="0.5" ry="0.6" fill="#6e44a8" opacity="0.85"/><ellipse cx="192.0" cy="224.1" rx="0.9" ry="0.9" fill="#5e3298" opacity="0.85"/><ellipse cx="184.6" cy="220.2" rx="0.8" ry="1.0" fill="#6e44a8" opacity="0.85"/><ellipse cx="175.2" cy="228.0" rx="1.0" ry="0.9" fill="#6e44a8" opacity="0.85"/><ellipse cx="191.9" cy="219.8" rx="0.6" ry="1.1" fill="#5e3298" opacity="0.85"/><ellipse cx="190.1" cy="227.5" rx="0.9" ry="1.0" fill="#5e3298" opacity="0.85"/><ellipse cx="181.7" cy="230.5" rx="0.6" ry="0.4" fill="#6e44a8" opacity="0.85"/><ellipse cx="179.2" cy="235.9" rx="0.6" ry="1.1" fill="#5e3298" opacity="0.85"/><ellipse cx="180.9" cy="216.7" rx="1.2" ry="1.1" fill="#6e44a8" opacity="0.85"/><ellipse cx="198.8" cy="235.1" rx="0.5" ry="0.6" fill="#6e44a8" opacity="0.85"/><ellipse cx="199.1" cy="236.2" rx="1.4" ry="1.1" fill="#3c1c78" opacity="0.85"/><ellipse cx="191.4" cy="218.0" rx="1.4" ry="0.6" fill="#5e3298" opacity="0.85"/><ellipse cx="179.8" cy="231.6" rx="0.8" ry="0.4" fill="#5e3298" opacity="0.85"/><ellipse cx="174.2" cy="220.4" rx="1.5" ry="0.9" fill="#6e44a8" opacity="0.85"/><ellipse cx="184.9" cy="221.4" rx="0.6" ry="0.4" fill="#5e3298" opacity="0.85"/><ellipse cx="192.9" cy="231.5" rx="1.1" ry="0.8" fill="#5e3298" opacity="0.85"/><ellipse cx="188.7" cy="224.4" rx="0.6" ry="0.8" fill="#4a2488" opacity="0.85"/><ellipse cx="193.9" cy="226.6" rx="1.0" ry="0.6" fill="#5e3298" opacity="0.85"/><ellipse cx="184.1" cy="217.0" rx="0.9" ry="0.9" fill="#3c1c78" opacity="0.85"/><ellipse cx="184.6" cy="221.6" rx="0.5" ry="0.6" fill="#5e3298" opacity="0.85"/><ellipse cx="179.5" cy="221.4" rx="0.9" ry="0.6" fill="#5e3298" opacity="0.85"/><ellipse cx="181.8" cy="239.2" rx="1.1" ry="1.2" fill="#6e44a8" opacity="0.85"/><ellipse cx="183.9" cy="239.4" rx="1.0" ry="0.5" fill="#4a2488" opacity="0.85"/><ellipse cx="178.7" cy="238.7" rx="0.8" ry="0.9" fill="#5e3298" opacity="0.85"/><ellipse cx="194.6" cy="232.7" rx="1.0" ry="0.9" fill="#3c1c78" opacity="0.85"/><ellipse cx="191.5" cy="223.0" rx="1.5" ry="0.5" fill="#3c1c78" opacity="0.85"/><ellipse cx="199.2" cy="241.0" rx="0.5" ry="1.1" fill="#5e3298" opacity="0.85"/><ellipse cx="176.4" cy="241.2" rx="1.4" ry="1.0" fill="#4a2488" opacity="0.85"/><ellipse cx="185.5" cy="228.3" rx="1.4" ry="0.6" fill="#3c1c78" opacity="0.85"/><ellipse cx="173.1" cy="240.0" rx="1.1" ry="0.6" fill="#4a2488" opacity="0.85"/><ellipse cx="183.7" cy="236.0" rx="1.4" ry="0.8" fill="#3c1c78" opacity="0.85"/><ellipse cx="196.7" cy="221.2" rx="1.3" ry="0.8" fill="#6e44a8" opacity="0.85"/><ellipse cx="194.2" cy="239.8" rx="0.5" ry="0.4" fill="#3c1c78" opacity="0.85"/><ellipse cx="189.1" cy="228.7" rx="1.1" ry="0.5" fill="#6e44a8" opacity="0.85"/><ellipse cx="182.8" cy="236.0" rx="0.8" ry="0.7" fill="#4a2488" opacity="0.85"/><ellipse cx="175.0" cy="241.0" rx="0.9" ry="1.0" fill="#3c1c78" opacity="0.85"/><ellipse cx="181.4" cy="222.1" rx="1.4" ry="0.7" fill="#3c1c78" opacity="0.85"/><ellipse cx="175.1" cy="239.8" rx="1.0" ry="0.7" fill="#6e44a8" opacity="0.85"/><ellipse cx="196.2" cy="236.2" rx="1.1" ry="1.2" fill="#4a2488" opacity="0.85"/><ellipse cx="190.2" cy="240.2" rx="0.9" ry="1.0" fill="#3c1c78" opacity="0.85"/><ellipse cx="177.5" cy="238.7" rx="1.2" ry="0.7" fill="#5e3298" opacity="0.85"/><ellipse cx="196.2" cy="222.7" rx="1.2" ry="0.4" fill="#4a2488" opacity="0.85"/><ellipse cx="181.4" cy="230.2" rx="1.3" ry="0.9" fill="#3c1c78" opacity="0.85"/><ellipse cx="187.2" cy="229.5" rx="1.3" ry="0.7" fill="#3c1c78" opacity="0.85"/><ellipse cx="193.7" cy="241.6" rx="1.2" ry="0.9" fill="#4a2488" opacity="0.85"/><ellipse cx="181.5" cy="239.7" rx="1.3" ry="0.9" fill="#3c1c78" opacity="0.85"/><ellipse cx="198.3" cy="229.2" rx="1.1" ry="0.8" fill="#3c1c78" opacity="0.85"/><ellipse cx="176.8" cy="236.0" rx="1.5" ry="0.7" fill="#6e44a8" opacity="0.85"/><ellipse cx="184.7" cy="231.7" rx="0.8" ry="1.2" fill="#5e3298" opacity="0.85"/><ellipse cx="178.3" cy="236.6" rx="0.6" ry="0.9" fill="#4a2488" opacity="0.85"/><ellipse cx="197.4" cy="224.6" rx="0.8" ry="0.6" fill="#6e44a8" opacity="0.85"/><ellipse cx="173.6" cy="216.5" rx="1.3" ry="1.0" fill="#4a2488" opacity="0.85"/><ellipse cx="188.8" cy="228.9" rx="1.3" ry="1.2" fill="#4a2488" opacity="0.85"/><ellipse cx="176.2" cy="232.9" rx="1.1" ry="1.1" fill="#5e3298" opacity="0.85"/><ellipse cx="181.2" cy="240.1" rx="1.4" ry="0.6" fill="#3c1c78" opacity="0.85"/><ellipse cx="186.2" cy="221.7" rx="0.7" ry="0.7" fill="#6e44a8" opacity="0.85"/><ellipse cx="189.9" cy="241.9" rx="1.0" ry="1.2" fill="#3c1c78" opacity="0.85"/><ellipse cx="181.5" cy="227.4" rx="0.8" ry="1.1" fill="#4a2488" opacity="0.85"/><ellipse cx="185.4" cy="230.6" rx="0.9" ry="0.7" fill="#6e44a8" opacity="0.85"/><ellipse cx="173.8" cy="229.3" rx="1.5" ry="1.2" fill="#3c1c78" opacity="0.85"/><ellipse cx="197.8" cy="231.7" rx="1.4" ry="1.0" fill="#6e44a8" opacity="0.85"/><ellipse cx="186.1" cy="232.6" rx="1.4" ry="1.0" fill="#3c1c78" opacity="0.85"/><ellipse cx="177.0" cy="222.2" rx="0.6" ry="0.4" fill="#6e44a8" opacity="0.85"/><ellipse cx="183.7" cy="231.1" rx="0.5" ry="0.6" fill="#6e44a8" opacity="0.85"/><ellipse cx="193.3" cy="221.3" rx="0.6" ry="0.6" fill="#6e44a8" opacity="0.85"/><ellipse cx="196.7" cy="232.7" rx="1.2" ry="0.9" fill="#5e3298" opacity="0.85"/><ellipse cx="198.7" cy="238.8" rx="1.1" ry="1.0" fill="#4a2488" opacity="0.85"/><ellipse cx="192.5" cy="230.4" rx="0.7" ry="1.1" fill="#3c1c78" opacity="0.85"/><ellipse cx="186.1" cy="217.8" rx="0.7" ry="1.1" fill="#5e3298" opacity="0.85"/><ellipse cx="186.9" cy="230.0" rx="1.4" ry="0.7" fill="#6e44a8" opacity="0.85"/><ellipse cx="183.4" cy="227.0" rx="0.8" ry="0.9" fill="#4a2488" opacity="0.85"/><ellipse cx="181.2" cy="236.5" rx="0.7" ry="1.1" fill="#4a2488" opacity="0.85"/><ellipse cx="195.2" cy="222.0" rx="1.0" ry="1.0" fill="#4a2488" opacity="0.85"/><ellipse cx="178.0" cy="237.5" rx="0.8" ry="0.5" fill="#3c1c78" opacity="0.85"/><ellipse cx="187.3" cy="220.9" rx="1.1" ry="1.1" fill="#3c1c78" opacity="0.85"/><ellipse cx="181.2" cy="232.8" rx="1.1" ry="0.4" fill="#3c1c78" opacity="0.85"/><ellipse cx="190.1" cy="222.6" rx="1.3" ry="0.8" fill="#6e44a8" opacity="0.85"/><ellipse cx="195.5" cy="237.0" rx="1.4" ry="1.1" fill="#4a2488" opacity="0.85"/><ellipse cx="196.8" cy="233.1" rx="1.1" ry="0.8" fill="#4a2488" opacity="0.85"/><ellipse cx="199.7" cy="225.2" rx="0.7" ry="0.4" fill="#4a2488" opacity="0.85"/><ellipse cx="187.0" cy="237.5" rx="0.5" ry="0.9" fill="#5e3298" opacity="0.85"/><ellipse cx="182.1" cy="231.6" rx="1.2" ry="0.5" fill="#5e3298" opacity="0.85"/><path d="M173 239 L199 237 L200 241 L175 243 Z" fill="#52288e" opacity="0.9"/><path d="M194 219 L199 224 L200 237 L195 235 Z" fill="#52288e" opacity="0.8"/><g filter="url(#tx2)"><g fill="#6838a8" stroke="#2c126c" stroke-width="1.1"><path d="M112.2 63.5 L114.2 63.6 L116.5 64.5 L119.0 65.6 L121.9 65.3 L124.7 66.1 L127.1 67.9 L130.2 68.1 L132.7 69.3 L134.4 71.5 L136.3 73.0 L137.9 74.6 L138.7 77.2 L138.8 80.4 L140.0 82.7 L140.4 85.5 L139.9 88.9 L140.9 91.3 L141.5 93.9 L141.5 96.6 L142.2 98.8 L144.3 101.5 L145.4 104.2 L146.8 106.7 L149.0 109.1 L150.1 111.3 L150.3 113.4 L151.5 115.8 L152.0 118.7 L151.4 121.2 L150.9 123.8 L150.7 126.6 L149.2 128.8 L147.0 130.4 L146.0 132.2 L144.4 133.6 L141.9 134.5 L139.3 135.2 L137.4 136.9 L134.8 137.9 L131.6 138.1 L129.5 140.0 L127.1 141.1 L124.1 141.2 L121.5 142.5 L118.6 143.6 L115.6 143.4 L112.8 144.2 L110.2 145.1 L107.7 144.9 L105.6 144.5 L102.1 145.5 L99.3 144.9 L97.1 143.6 L94.4 143.7 L91.8 143.1 L89.4 141.8 L86.5 141.6 L83.6 141.1 L81.6 139.1 L79.7 136.3 L78.6 134.9 L78.0 132.7 L78.1 129.9 L77.6 127.3 L76.9 124.8 L77.1 121.7 L77.2 118.7 L76.2 116.2 L76.1 113.5 L76.5 111.0 L75.2 108.9 L73.9 105.7 L73.7 102.7 L71.6 99.6 L70.5 96.8 L70.4 94.5 L69.6 92.1 L69.0 90.0 L70.4 87.1 L73.5 85.9 L76.2 83.2 L78.1 82.0 L80.7 81.0 L82.2 78.6 L84.3 76.7 L87.0 75.5 L88.6 73.0 L90.2 71.1 L91.9 69.9 L94.5 67.4 L96.0 65.2 L98.5 64.2 L100.8 64.2 L103.0 62.7 L105.6 61.8 L108.7 62.5Z"/><path d="M193.5 51.2 L196.0 50.8 L198.7 51.2 L201.5 50.2 L204.3 50.3 L206.9 51.6 L209.5 51.6 L211.9 51.9 L213.9 53.0 L216.4 55.0 L218.9 56.0 L220.6 58.3 L221.9 61.3 L224.2 63.1 L225.4 65.2 L226.1 68.2 L227.7 70.1 L229.0 72.6 L229.4 75.9 L230.7 78.5 L231.7 81.3 L231.6 84.4 L232.3 87.1 L233.2 89.8 L232.9 92.9 L233.2 95.7 L234.0 98.4 L233.8 101.2 L233.4 103.8 L234.3 106.7 L233.9 109.6 L232.9 112.2 L233.3 115.2 L232.9 118.0 L231.6 120.2 L231.3 122.8 L230.9 126.2 L229.3 128.5 L228.3 131.1 L227.5 133.9 L225.8 135.9 L224.2 138.2 L223.2 141.4 L221.5 143.6 L219.5 145.5 L217.3 148.0 L215.3 148.7 L212.8 148.6 L210.5 149.6 L207.8 150.3 L204.9 149.9 L202.2 150.1 L199.5 150.6 L197.0 150.3 L193.9 149.7 L190.7 150.4 L187.8 150.0 L185.2 149.0 L182.4 149.0 L180.0 147.8 L178.5 145.7 L176.7 144.2 L175.0 142.6 L173.7 140.1 L172.6 137.4 L170.8 135.6 L169.5 133.0 L169.0 130.1 L167.2 128.2 L166.1 125.6 L166.0 122.4 L164.7 119.9 L163.8 117.3 L163.8 114.5 L163.6 112.2 L162.2 109.3 L162.0 106.7 L162.5 104.2 L161.4 101.7 L161.4 98.7 L162.2 96.5 L162.3 94.0 L162.0 91.1 L162.9 88.4 L163.8 85.8 L163.9 82.7 L164.9 80.2 L166.5 78.4 L167.3 75.3 L168.8 72.9 L171.0 71.4 L172.6 69.1 L174.4 66.8 L176.9 65.3 L178.7 63.7 L180.3 61.2 L182.4 59.6 L184.7 58.2 L186.6 55.5 L188.9 53.8 L191.3 53.2Z"/><path d="M268.6 35.3 L270.6 34.6 L273.0 33.8 L275.7 33.9 L278.5 34.4 L281.5 33.5 L284.4 33.7 L287.1 34.8 L289.9 34.3 L292.3 34.6 L294.1 35.6 L296.9 37.3 L299.2 38.7 L300.4 41.3 L301.0 44.4 L302.4 46.2 L303.2 48.6 L303.0 51.7 L303.2 54.2 L303.8 56.7 L303.8 60.1 L304.2 62.5 L305.5 64.7 L306.1 67.6 L306.3 70.6 L307.8 73.2 L308.1 75.9 L307.5 78.5 L308.2 81.6 L308.1 84.4 L306.8 86.9 L306.4 89.4 L306.0 92.1 L304.4 94.3 L302.6 96.4 L301.8 99.2 L300.2 101.4 L298.4 103.2 L298.0 106.5 L297.3 109.3 L296.1 111.3 L295.3 113.9 L294.3 116.7 L292.3 118.8 L290.1 120.6 L288.1 123.2 L285.4 124.5 L283.2 125.5 L281.0 127.8 L278.5 128.9 L276.1 129.2 L273.5 130.8 L270.8 131.4 L268.1 130.8 L265.1 131.3 L262.3 131.1 L260.0 129.4 L258.1 127.9 L256.0 126.6 L254.5 123.9 L253.3 120.9 L251.8 118.9 L251.1 116.3 L251.3 112.7 L250.8 110.4 L251.2 107.5 L252.6 104.2 L253.5 102.0 L254.8 100.3 L257.4 98.2 L259.9 96.6 L261.7 95.5 L263.9 93.8 L265.4 91.7 L264.6 89.9 L262.8 87.8 L261.4 85.0 L259.3 81.9 L258.3 79.8 L258.0 77.6 L257.8 75.4 L256.4 72.7 L255.8 70.1 L256.1 68.0 L255.1 65.1 L254.6 62.4 L254.6 60.2 L254.3 57.5 L253.6 54.1 L253.6 51.4 L254.1 49.3 L253.9 46.1 L254.4 43.7 L256.1 41.8 L257.8 39.5 L259.7 37.2 L262.4 36.1 L265.3 35.3Z"/><path d="M355.1 24.4 L357.0 24.4 L359.2 24.1 L361.9 24.9 L365.0 26.4 L367.7 26.4 L370.7 27.7 L373.6 29.5 L376.3 29.8 L378.7 30.8 L381.3 32.9 L384.0 33.1 L386.4 33.9 L388.5 35.4 L390.7 36.3 L393.4 36.6 L395.8 37.6 L397.8 39.0 L401.2 39.1 L404.1 39.7 L406.1 41.0 L408.8 41.8 L411.5 42.7 L413.2 44.2 L414.4 46.4 L416.9 48.1 L418.4 50.4 L418.8 52.9 L420.2 55.4 L421.1 58.1 L420.8 60.4 L420.5 62.9 L421.2 65.7 L420.9 68.5 L419.7 71.2 L420.1 74.1 L419.4 76.7 L417.9 78.6 L416.6 81.0 L415.3 83.0 L412.9 84.4 L409.8 85.4 L407.7 87.3 L404.2 88.6 L401.7 89.1 L400.1 90.8 L397.8 92.2 L394.9 92.9 L392.6 94.6 L390.2 96.4 L387.5 97.1 L385.1 98.5 L382.9 100.1 L380.7 100.7 L378.7 100.6 L375.8 101.1 L373.4 100.7 L371.3 98.9 L369.4 96.7 L367.3 95.7 L365.0 94.1 L363.0 92.0 L360.4 91.3 L357.7 90.4 L355.6 88.6 L353.0 87.5 L350.2 86.7 L348.3 85.1 L346.5 83.2 L343.8 82.0 L341.9 80.1 L340.9 77.9 L338.9 75.9 L337.0 73.7 L336.2 71.4 L335.5 68.9 L333.6 66.5 L332.9 63.9 L333.1 61.3 L331.6 58.8 L331.1 56.4 L331.7 53.8 L331.9 51.2 L331.8 48.4 L332.7 45.9 L334.2 43.7 L334.3 41.0 L335.4 38.5 L337.5 36.7 L338.8 34.2 L340.4 31.9 L342.6 30.5 L344.8 29.3 L346.5 26.7 L348.8 25.2 L351.9 25.1Z"/><path d="M371.7 125.3 L372.5 124.0 L374.3 122.6 L377.1 121.6 L379.5 120.2 L381.6 118.6 L384.5 118.0 L387.0 117.7 L389.9 116.8 L393.3 117.8 L396.4 119.0 L398.9 118.9 L401.7 119.0 L403.9 119.5 L407.1 118.7 L409.2 119.0 L411.5 120.0 L414.1 120.6 L417.3 120.7 L419.8 121.7 L422.0 122.8 L425.8 123.5 L428.6 125.1 L431.3 126.7 L434.3 128.1 L435.8 129.6 L436.7 133.0 L436.4 135.3 L433.3 135.1 L429.4 135.5 L430.2 137.9 L430.9 141.4 L430.3 144.9 L430.4 147.8 L429.1 150.5 L427.2 153.0 L426.1 155.9 L423.8 157.4 L420.7 158.3 L418.4 160.1 L415.5 161.0 L412.6 160.9 L410.1 162.5 L407.7 163.0 L404.7 162.3 L402.3 162.4 L399.4 162.8 L396.6 162.1 L393.8 161.7 L391.0 161.9 L388.3 160.9 L386.0 159.4 L383.1 158.8 L380.9 157.5 L379.2 155.2 L376.7 153.5 L374.9 151.1 L374.4 148.7 L373.8 146.1 L372.6 143.7 L372.3 141.1 L372.3 137.8 L370.9 134.4 L371.1 131.5 L370.2 128.2Z"/><path d="M461.3 42.6 L464.0 43.6 L466.8 43.5 L469.8 44.2 L472.6 46.4 L475.2 47.1 L477.1 49.0 L478.4 52.4 L479.8 54.7 L481.0 57.2 L481.5 60.0 L482.1 63.1 L482.6 65.2 L483.0 68.5 L483.4 70.6 L485.5 72.4 L487.2 74.7 L488.0 77.0 L489.7 79.5 L491.0 82.1 L491.1 84.6 L490.8 87.1 L491.4 90.3 L490.9 92.9 L489.5 94.8 L488.7 97.3 L487.2 99.6 L484.7 100.9 L482.2 102.5 L479.8 104.5 L477.2 105.2 L474.8 105.6 L471.8 107.0 L468.7 106.3 L465.8 105.2 L462.9 104.6 L461.0 102.9 L459.4 100.3 L457.5 98.9 L456.0 96.6 L455.4 93.8 L454.5 91.3 L453.9 88.8 L454.4 85.8 L455.2 83.1 L455.9 81.2 L457.6 79.3 L458.8 76.7 L457.5 74.8 L455.0 72.4 L453.3 70.0 L450.9 67.3 L448.9 64.6 L448.3 61.8 L447.3 58.3 L446.9 55.0 L447.6 52.8 L448.6 49.6 L450.4 46.9 L453.1 45.8 L455.4 44.0 L458.0 42.9Z"/><path d="M528.4 36.0 L529.7 34.7 L531.7 33.7 L534.4 33.4 L537.2 33.0 L540.0 31.8 L543.1 31.8 L546.2 31.9 L548.9 31.0 L551.6 31.2 L554.0 32.1 L556.9 31.5 L559.6 31.9 L562.2 33.4 L564.7 33.8 L567.0 34.4 L569.1 36.0 L570.9 37.8 L573.2 38.8 L575.1 41.1 L576.3 44.5 L578.0 46.2 L579.0 48.6 L579.3 51.3 L578.6 54.7 L576.8 57.3 L575.5 60.4 L577.6 62.1 L581.1 63.2 L582.3 65.2 L580.7 67.1 L578.4 68.6 L575.8 71.8 L576.1 73.8 L577.2 76.3 L577.5 79.6 L577.9 82.5 L578.5 85.1 L576.9 88.0 L574.6 90.4 L573.5 93.0 L572.4 95.4 L572.2 97.2 L574.3 100.2 L576.1 102.7 L576.9 104.9 L578.7 108.2 L580.1 111.2 L580.6 113.5 L582.0 117.0 L582.5 120.0 L581.6 122.0 L580.7 124.8 L579.6 127.7 L578.3 129.4 L577.4 130.6 L578.9 133.9 L581.0 136.1 L581.8 137.7 L583.7 141.7 L584.6 144.4 L584.1 145.6 L582.4 146.0 L579.8 146.3 L576.4 145.2 L573.3 144.3 L571.1 143.8 L568.9 141.3 L567.8 138.6 L567.7 137.0 L570.2 133.6 L570.8 130.7 L569.2 130.9 L566.4 130.9 L563.0 129.8 L559.6 130.3 L556.4 130.0 L554.0 128.4 L551.4 127.5 L549.5 125.2 L548.3 121.6 L546.9 119.8 L546.2 116.8 L546.2 112.9 L545.6 110.5 L545.0 107.9 L542.5 106.4 L538.2 106.0 L537.3 104.1 L537.0 101.5 L535.4 99.4 L534.1 97.0 L533.6 94.2 L532.3 91.9 L530.4 89.8 L529.2 87.8 L528.6 85.7 L526.5 83.5 L525.0 81.0 L524.8 78.4 L524.5 76.2 L523.7 73.4 L523.8 70.7 L524.8 68.4 L524.3 65.3 L524.5 62.6 L525.3 60.6 L525.5 58.5 L525.3 54.8 L526.0 52.3 L526.5 49.8 L526.3 46.8 L526.6 44.4 L526.7 41.7 L525.8 38.0Z"/><path d="M630.9 65.7 L632.1 62.2 L634.4 60.2 L637.2 59.4 L639.5 57.1 L642.2 56.0 L645.5 56.0 L648.4 54.7 L651.5 55.0 L654.1 56.7 L656.7 57.2 L659.4 59.1 L661.7 61.5 L663.8 61.5 L666.3 60.3 L667.8 58.9 L669.7 57.8 L672.9 57.4 L676.1 59.1 L678.8 60.7 L680.7 62.4 L681.3 65.9 L682.2 69.0 L682.6 70.9 L682.4 73.7 L682.1 76.6 L682.5 78.8 L682.4 81.6 L681.8 84.8 L682.7 87.0 L683.5 89.3 L683.7 92.1 L683.9 94.6 L685.1 96.8 L685.4 99.6 L684.8 102.6 L686.2 105.2 L686.7 107.9 L686.2 110.4 L686.4 114.0 L685.9 117.2 L685.2 119.5 L687.1 121.4 L690.0 122.8 L691.6 124.3 L692.5 126.7 L694.1 130.1 L694.0 133.1 L694.0 135.9 L694.2 139.3 L693.1 142.0 L692.4 145.1 L691.5 148.1 L689.4 150.1 L687.6 152.7 L685.5 155.1 L682.9 156.0 L680.3 157.3 L677.7 158.8 L674.4 158.9 L671.5 159.4 L669.1 160.1 L666.5 159.9 L663.9 158.9 L661.4 159.6 L658.8 159.5 L656.2 158.4 L653.5 158.1 L650.5 158.2 L647.6 157.0 L644.7 156.5 L641.7 156.2 L639.4 154.8 L636.7 153.3 L633.9 152.4 L631.9 150.2 L630.3 147.7 L628.4 146.0 L627.4 143.5 L627.4 140.1 L626.4 137.8 L625.9 135.1 L626.3 132.0 L626.4 129.8 L626.1 127.4 L626.9 124.8 L628.9 122.4 L630.1 121.2 L631.7 120.6 L634.4 119.8 L637.1 119.3 L639.2 119.3 L642.4 118.9 L645.8 118.3 L648.1 118.6 L651.0 118.3 L654.4 117.4 L657.0 118.3 L659.9 118.4 L662.1 117.7 L664.5 118.0 L666.8 118.0 L669.7 115.7 L672.2 113.0 L673.4 110.5 L672.1 108.7 L669.3 107.4 L667.7 105.6 L665.3 103.4 L662.5 101.3 L659.3 99.0 L657.0 99.0 L654.7 99.8 L651.7 99.2 L649.0 99.4 L647.0 100.2 L644.4 100.1 L641.0 100.4 L638.8 101.4 L636.2 101.9 L633.1 101.2 L631.2 99.8 L630.1 97.9 L627.7 95.0 L626.0 92.4 L625.5 90.5 L624.1 87.4 L623.4 84.6 L623.9 82.8 L626.7 83.2 L628.7 81.5 L628.9 79.4 L629.5 77.1 L629.6 74.0 L629.4 70.3 L630.1 67.8Z"/><path d="M79.5 247.2 L80.0 244.6 L82.0 242.2 L84.8 240.1 L86.6 237.5 L89.3 236.2 L92.3 235.8 L94.6 234.9 L97.4 234.9 L100.2 235.6 L102.2 235.2 L105.2 233.1 L107.4 232.7 L109.3 234.8 L112.6 236.4 L114.6 237.4 L117.3 237.9 L120.8 237.6 L123.7 238.4 L126.3 239.2 L129.3 239.5 L132.0 241.2 L133.8 243.2 L136.4 244.8 L137.7 247.0 L137.6 249.7 L138.5 252.4 L138.7 255.2 L137.5 257.7 L136.3 260.2 L134.6 262.5 L131.5 264.6 L130.2 267.0 L128.6 269.7 L125.7 271.5 L123.7 274.2 L121.6 275.9 L118.7 276.7 L116.3 278.3 L113.7 279.7 L110.9 279.6 L108.2 279.6 L105.3 280.1 L102.5 279.2 L99.8 278.2 L96.8 278.0 L94.6 276.8 L92.8 274.8 L89.9 273.9 L87.5 272.3 L86.1 270.1 L84.0 268.5 L81.3 266.1 L80.4 263.1 L78.6 260.5 L77.6 257.8 L78.0 255.1 L78.0 252.4 L78.0 249.7Z"/><path d="M159.1 205.2 L161.6 203.0 L165.0 202.3 L168.6 203.5 L172.0 204.0 L174.8 206.9 L177.0 209.1 L177.9 212.3 L177.3 216.3 L175.8 218.1 L173.1 221.2 L171.6 223.6 L171.3 226.0 L171.9 229.7 L172.9 231.9 L175.4 234.5 L177.5 235.1 L180.0 235.4 L183.9 236.4 L186.5 236.7 L190.0 237.4 L194.3 238.0 L196.7 238.2 L199.0 239.0 L198.5 241.1 L192.9 242.4 L191.5 243.1 L189.4 243.5 L186.2 243.3 L183.0 243.1 L180.4 243.6 L177.4 243.2 L174.8 242.2 L171.5 243.1 L168.4 242.7 L165.9 241.9 L163.1 242.4 L159.9 241.7 L157.9 240.0 L154.7 239.2 L152.4 237.3 L151.4 234.5 L149.3 232.1 L147.8 229.4 L147.7 226.6 L147.1 223.9 L147.8 220.0 L150.6 217.3 L152.5 215.3 L155.1 214.1 L156.9 212.4 L157.1 209.2 L157.7 206.8Z"/><path d="M218.2 209.7 L220.5 209.9 L223.2 210.2 L227.0 211.0 L229.3 212.4 L231.9 212.9 L234.7 213.5 L237.6 215.4 L240.4 216.5 L242.9 217.4 L244.8 219.2 L246.7 221.5 L248.4 223.0 L249.5 225.2 L250.2 228.0 L251.8 229.7 L253.7 231.3 L255.1 233.5 L256.4 235.7 L258.6 237.4 L259.8 239.7 L259.8 242.7 L260.8 245.5 L261.2 248.6 L260.4 251.5 L260.8 254.2 L261.4 257.1 L261.0 259.5 L260.7 261.8 L260.7 264.8 L259.7 266.7 L258.0 268.4 L257.0 270.9 L255.8 273.4 L253.8 275.2 L251.8 277.0 L250.2 279.5 L248.0 281.2 L245.3 282.0 L243.0 284.3 L240.4 285.6 L237.8 285.7 L235.2 287.2 L232.3 288.2 L229.6 288.0 L226.8 288.9 L224.2 289.5 L222.0 289.0 L219.3 287.8 L216.5 287.0 L214.6 284.7 L213.3 282.1 L211.5 280.5 L210.8 277.8 L211.1 274.3 L210.8 272.3 L211.8 270.0 L214.2 267.1 L216.1 265.1 L218.0 263.3 L220.9 261.4 L223.6 260.4 L225.6 259.6 L227.4 257.5 L228.7 254.9 L228.3 252.7 L227.8 249.6 L228.2 246.8 L226.9 243.3 L226.1 240.6 L225.6 238.6 L224.7 236.2 L223.3 233.2 L222.4 231.1 L222.0 229.7 L220.5 226.4 L219.2 223.8 L218.5 222.2 L217.3 219.5 L216.6 217.1 L217.1 213.7Z"/><path d="M312.4 169.4 L314.6 169.7 L317.2 169.3 L320.0 168.6 L322.8 169.1 L325.4 169.8 L328.1 169.6 L330.3 170.4 L332.4 172.8 L334.7 174.5 L336.4 176.7 L337.4 179.9 L338.6 182.2 L339.5 184.3 L339.4 187.0 L338.8 190.2 L339.7 192.0 L340.7 194.2 L341.9 196.7 L344.6 198.4 L347.7 200.1 L349.4 202.5 L351.7 204.6 L353.3 207.2 L353.5 210.2 L354.3 213.1 L355.0 216.0 L354.4 218.9 L354.4 221.7 L354.7 224.6 L353.8 227.2 L353.0 229.9 L353.0 233.0 L352.0 235.3 L350.5 237.5 L350.3 240.5 L349.3 243.1 L347.4 245.0 L346.2 247.5 L344.7 249.9 L342.4 251.5 L340.2 253.2 L338.3 255.4 L335.8 256.5 L333.2 257.1 L330.8 259.2 L327.8 260.1 L324.8 260.3 L322.1 261.8 L319.4 262.0 L316.7 261.1 L314.2 261.5 L311.6 261.0 L309.3 259.2 L307.0 258.0 L304.9 256.9 L303.3 254.4 L301.9 251.4 L299.9 249.8 L298.1 247.5 L296.3 245.0 L293.2 244.5 L290.6 243.2 L288.8 241.1 L286.1 239.9 L284.6 238.2 L283.9 235.9 L283.2 233.4 L281.7 231.4 L280.9 228.8 L280.8 225.9 L279.3 223.8 L278.1 221.4 L277.8 218.7 L277.2 216.0 L276.1 213.4 L276.0 210.8 L276.8 208.5 L276.0 205.6 L276.2 202.8 L277.4 200.4 L277.5 197.6 L277.9 194.9 L279.2 192.7 L280.6 190.5 L281.5 187.6 L283.3 185.5 L285.6 183.8 L286.9 181.2 L288.8 179.4 L291.7 178.6 L294.0 177.1 L296.5 175.9 L299.4 175.7 L301.9 175.1 L304.3 173.1 L306.8 172.1 L309.4 171.2Z"/><path d="M410.9 197.0 L413.4 196.1 L416.3 196.2 L419.1 194.5 L422.1 194.0 L425.0 194.8 L427.9 193.9 L430.6 194.0 L433.2 195.3 L436.3 195.4 L439.1 196.1 L441.4 197.7 L444.0 198.5 L446.4 199.3 L448.4 201.3 L449.8 203.6 L451.9 205.2 L453.1 207.4 L453.5 210.0 L454.7 212.5 L455.4 215.1 L454.8 218.0 L454.3 220.7 L454.3 223.6 L452.8 226.5 L451.2 229.6 L450.5 232.0 L448.5 234.7 L447.0 237.3 L447.3 240.1 L448.0 242.8 L449.4 245.3 L452.1 248.4 L453.0 251.0 L452.6 253.5 L453.0 257.0 L451.9 259.6 L449.8 261.1 L448.1 262.9 L445.3 263.8 L441.7 263.6 L439.2 264.6 L436.4 266.0 L433.5 266.5 L430.4 268.1 L428.0 269.0 L425.1 269.0 L422.2 270.1 L419.2 271.0 L416.4 270.3 L413.7 270.0 L410.9 269.6 L408.4 267.9 L406.2 266.2 L403.7 265.4 L401.4 263.4 L399.9 260.7 L397.4 259.5 L395.2 257.7 L393.8 255.8 L391.2 254.9 L388.5 253.9 L386.6 252.3 L385.1 250.4 L382.7 248.7 L381.2 246.3 L380.8 243.5 L379.1 241.0 L378.3 238.4 L378.9 235.1 L378.6 231.9 L379.3 228.8 L381.7 226.1 L382.8 224.0 L384.8 222.2 L388.0 220.8 L390.1 219.1 L391.7 217.2 L393.9 215.3 L395.4 213.2 L396.3 210.4 L398.5 208.1 L400.5 206.8 L401.7 204.0 L403.7 201.9 L406.2 200.9 L408.4 198.6Z"/><path d="M528.3 185.1 L531.1 184.5 L534.1 183.7 L537.1 184.3 L540.0 184.6 L543.0 184.6 L545.2 185.9 L547.3 187.6 L549.8 188.2 L552.0 189.8 L553.7 192.3 L556.3 193.4 L558.7 195.0 L560.3 197.6 L562.6 199.4 L564.9 201.2 L566.4 203.6 L568.5 205.3 L571.6 206.7 L573.8 208.4 L576.9 209.4 L579.9 210.6 L581.5 212.5 L582.8 214.7 L584.7 217.1 L585.2 219.9 L584.8 222.8 L585.4 225.2 L584.5 227.6 L581.9 230.0 L580.4 232.2 L578.5 234.4 L575.9 236.4 L574.4 238.7 L573.4 240.9 L571.7 243.0 L569.8 245.3 L569.7 248.0 L568.9 250.7 L567.3 253.0 L567.1 256.3 L565.6 258.9 L563.2 260.3 L561.6 262.3 L559.5 264.3 L556.4 265.2 L553.6 266.8 L550.7 268.3 L548.2 268.5 L545.8 269.1 L543.5 270.5 L540.8 271.0 L538.1 270.9 L535.6 272.5 L533.1 273.3 L530.6 273.3 L528.3 273.9 L525.4 275.1 L522.6 275.0 L520.0 274.8 L517.1 275.5 L514.5 275.2 L512.3 274.0 L509.7 273.7 L506.8 272.9 L504.7 270.8 L502.2 269.1 L499.6 267.6 L497.8 265.2 L495.5 263.6 L492.7 262.6 L490.6 261.1 L488.5 259.6 L485.5 258.7 L483.4 257.1 L482.4 254.7 L480.7 252.8 L479.3 250.5 L479.1 247.5 L478.8 244.6 L477.9 241.8 L478.2 239.0 L478.9 236.4 L478.3 233.7 L478.8 231.0 L480.2 228.4 L480.4 226.0 L481.0 223.7 L482.5 221.8 L485.0 220.0 L486.7 218.3 L489.9 217.1 L492.8 215.9 L494.3 213.9 L496.2 211.4 L497.5 208.7 L498.0 205.3 L500.4 203.0 L502.7 201.7 L504.7 199.7 L507.6 198.6 L510.7 197.7 L512.9 195.5 L515.5 194.3 L517.9 193.1 L519.7 190.4 L521.8 188.5 L524.0 187.6 L526.0 185.3Z"/><path d="M635.0 197.2 L637.6 197.4 L640.3 196.5 L643.4 196.9 L646.5 197.9 L649.5 197.5 L652.4 198.3 L654.8 199.8 L657.3 199.7 L660.2 201.0 L662.2 203.5 L664.6 204.7 L666.6 206.5 L668.2 209.1 L670.5 210.7 L672.8 212.4 L674.3 215.0 L676.2 217.2 L678.5 219.3 L679.6 221.6 L680.9 223.9 L683.1 225.9 L684.4 228.2 L684.8 230.5 L686.6 232.7 L687.8 235.1 L688.0 237.5 L688.7 240.0 L689.8 242.7 L689.9 245.1 L689.0 247.3 L689.1 249.9 L688.6 252.4 L686.9 254.5 L685.1 256.5 L684.0 259.0 L681.9 260.9 L679.0 262.1 L677.3 264.6 L674.5 266.3 L671.2 267.0 L669.0 268.9 L666.4 269.5 L663.6 268.9 L661.4 268.9 L659.1 268.6 L656.5 267.3 L654.1 266.2 L651.9 266.4 L649.2 266.1 L646.6 265.0 L644.0 265.4 L641.4 265.5 L638.8 264.5 L636.5 263.6 L633.7 263.7 L631.1 263.1 L629.1 261.6 L626.5 261.2 L624.0 260.5 L622.0 258.6 L619.8 256.9 L617.0 255.5 L615.2 253.3 L613.4 250.9 L611.0 249.2 L609.4 246.8 L608.3 244.2 L606.0 241.8 L605.2 239.1 L605.8 236.4 L605.5 234.1 L606.0 231.7 L607.7 229.4 L609.6 227.1 L610.4 224.6 L612.1 222.2 L614.1 220.2 L614.3 217.4 L615.0 214.7 L616.4 212.5 L616.8 209.6 L617.4 206.8 L618.8 204.8 L620.5 203.3 L621.9 200.9 L624.0 199.5 L626.7 199.1 L629.3 198.2 L631.9 197.3Z"/></g></g><clipPath id="fc0"><path d="M112.2 63.2 C118.4 64.6 130.9 67.4 136.0 73.3 C141.1 79.2 140.2 91.6 142.7 98.7 C145.2 105.8 150.0 110.3 150.9 115.7 C151.7 121.1 151.4 127.0 147.8 131.0 C144.2 134.9 136.2 137.0 129.2 139.4 C122.1 141.8 111.7 144.8 105.5 145.4 C99.3 146.0 96.1 144.4 91.9 142.8 C87.6 141.2 82.8 141.7 80.0 136.0 C77.2 130.3 76.7 116.5 75.0 108.9 C73.3 101.3 69.6 94.5 69.9 90.3 C70.2 86.1 72.9 86.9 76.6 83.5 C80.3 80.1 88.2 73.0 91.9 69.9 C95.6 66.8 95.3 65.9 98.7 64.8 C102.1 63.7 106.0 61.8 112.2 63.2 Z"/></clipPath><g clip-path="url(#fc0)"><circle cx="117.9" cy="98.0" r="5.6" fill="#8e6ccc" opacity="0.3" filter="url(#bl1)"/><circle cx="117.9" cy="98.0" r="5.6" fill="none" stroke="#3c2088" stroke-width="1.6" opacity="0.35" filter="url(#bl1)"/><ellipse cx="117.2" cy="97.9" rx="1.3" ry="1.3" fill="#f0e4f4" opacity="0.85"/><circle cx="127.4" cy="97.8" r="5.6" fill="#8e6ccc" opacity="0.3" filter="url(#bl1)"/><circle cx="127.4" cy="97.8" r="5.6" fill="none" stroke="#3c2088" stroke-width="1.6" opacity="0.35" filter="url(#bl1)"/><circle cx="99.0" cy="67.9" r="6.6" fill="#8e6ccc" opacity="0.3" filter="url(#bl1)"/><circle cx="99.0" cy="67.9" r="6.6" fill="none" stroke="#3c2088" stroke-width="1.6" opacity="0.35" filter="url(#bl1)"/><circle cx="123.2" cy="114.2" r="7.4" fill="#8e6ccc" opacity="0.3" filter="url(#bl1)"/><circle cx="123.2" cy="114.2" r="7.4" fill="none" stroke="#3c2088" stroke-width="1.6" opacity="0.35" filter="url(#bl1)"/><ellipse cx="123.7" cy="114.0" rx="1.7" ry="1.5" fill="#f0e4f4" opacity="0.85"/><circle cx="95.4" cy="70.2" r="5.4" fill="#8e6ccc" opacity="0.3" filter="url(#bl1)"/><circle cx="95.4" cy="70.2" r="5.4" fill="none" stroke="#3c2088" stroke-width="1.6" opacity="0.35" filter="url(#bl1)"/><circle cx="117.7" cy="100.0" r="6.1" fill="#8e6ccc" opacity="0.3" filter="url(#bl1)"/><circle cx="117.7" cy="100.0" r="6.1" fill="none" stroke="#3c2088" stroke-width="1.6" opacity="0.35" filter="url(#bl1)"/><ellipse cx="117.1" cy="99.6" rx="2.0" ry="1.0" fill="#f0e4f4" opacity="0.85"/><circle cx="116.3" cy="130.7" r="4.8" fill="#8e6ccc" opacity="0.3" filter="url(#bl1)"/><circle cx="116.3" cy="130.7" r="4.8" fill="none" stroke="#3c2088" stroke-width="1.6" opacity="0.35" filter="url(#bl1)"/><ellipse cx="115.9" cy="130.3" rx="1.9" ry="1.3" fill="#f0e4f4" opacity="0.85"/><circle cx="90.8" cy="72.0" r="6.6" fill="#8e6ccc" opacity="0.3" filter="url(#bl1)"/><circle cx="90.8" cy="72.0" r="6.6" fill="none" stroke="#3c2088" stroke-width="1.6" opacity="0.35" filter="url(#bl1)"/><circle cx="137.0" cy="82.8" r="5.7" fill="#8e6ccc" opacity="0.3" filter="url(#bl1)"/><circle cx="137.0" cy="82.8" r="5.7" fill="none" stroke="#3c2088" stroke-width="1.6" opacity="0.35" filter="url(#bl1)"/><circle cx="117.9" cy="140.9" r="1.2" fill="#e58fd6" opacity="0.9"/><circle cx="103.6" cy="65.1" r="1.8" fill="#e58fd6" opacity="0.9"/><circle cx="130.6" cy="91.7" r="2.0" fill="#e58fd6" opacity="0.9"/><circle cx="100.4" cy="79.1" r="1.1" fill="#e58fd6" opacity="0.9"/><circle cx="107.6" cy="79.4" r="1.9" fill="#e58fd6" opacity="0.9"/><circle cx="78.3" cy="106.7" r="1.2" fill="#e58fd6" opacity="0.9"/><circle cx="113.9" cy="130.0" r="1.3" fill="#e58fd6" opacity="0.9"/></g><clipPath id="fc1"><path d="M193.6 52.1 C199.8 50.1 208.8 51.2 213.9 53.0 C219.0 54.8 221.3 58.4 224.1 63.2 C226.9 68.0 229.2 75.0 230.9 81.8 C232.6 88.6 234.3 97.0 234.3 103.8 C234.3 110.6 232.3 117.1 230.9 122.5 C229.5 127.9 228.1 131.8 225.8 136.0 C223.5 140.2 222.1 145.6 217.3 147.9 C212.5 150.2 203.2 149.6 197.0 149.6 C190.8 149.6 184.5 150.7 180.0 147.9 C175.5 145.1 172.7 138.5 169.9 132.6 C167.1 126.7 164.5 118.0 163.1 112.3 C161.7 106.7 160.8 104.3 161.4 98.7 C162.0 93.0 164.0 84.0 166.5 78.4 C169.0 72.7 172.1 69.2 176.6 64.8 C181.1 60.4 187.4 54.1 193.6 52.1 Z"/></clipPath><g clip-path="url(#fc1)"><circle cx="192.1" cy="139.9" r="5.3" fill="#8e6ccc" opacity="0.3" filter="url(#bl1)"/><circle cx="192.1" cy="139.9" r="5.3" fill="none" stroke="#3c2088" stroke-width="1.6" opacity="0.35" filter="url(#bl1)"/><ellipse cx="192.9" cy="140.6" rx="2.1" ry="1.5" fill="#f0e4f4" opacity="0.85"/><circle cx="191.5" cy="119.7" r="6.8" fill="#8e6ccc" opacity="0.3" filter="url(#bl1)"/><circle cx="191.5" cy="119.7" r="6.8" fill="none" stroke="#3c2088" stroke-width="1.6" opacity="0.35" filter="url(#bl1)"/><circle cx="178.8" cy="80.9" r="5.1" fill="#8e6ccc" opacity="0.3" filter="url(#bl1)"/><circle cx="178.8" cy="80.9" r="5.1" fill="none" stroke="#3c2088" stroke-width="1.6" opacity="0.35" filter="url(#bl1)"/><circle cx="202.0" cy="105.7" r="6.8" fill="#8e6ccc" opacity="0.3" filter="url(#bl1)"/><circle cx="202.0" cy="105.7" r="6.8" fill="none" stroke="#3c2088" stroke-width="1.6" opacity="0.35" filter="url(#bl1)"/><ellipse cx="202.3" cy="105.4" rx="1.7" ry="1.6" fill="#f0e4f4" opacity="0.85"/><circle cx="179.5" cy="144.9" r="3.8" fill="#8e6ccc" opacity="0.3" filter="url(#bl1)"/><circle cx="179.5" cy="144.9" r="3.8" fill="none" stroke="#3c2088" stroke-width="1.6" opacity="0.35" filter="url(#bl1)"/><circle cx="200.9" cy="75.0" r="5.7" fill="#8e6ccc" opacity="0.3" filter="url(#bl1)"/><circle cx="200.9" cy="75.0" r="5.7" fill="none" stroke="#3c2088" stroke-width="1.6" opacity="0.35" filter="url(#bl1)"/><ellipse cx="200.8" cy="75.5" rx="1.0" ry="1.2" fill="#f0e4f4" opacity="0.85"/><circle cx="218.7" cy="65.9" r="7.0" fill="#8e6ccc" opacity="0.3" filter="url(#bl1)"/><circle cx="218.7" cy="65.9" r="7.0" fill="none" stroke="#3c2088" stroke-width="1.6" opacity="0.35" filter="url(#bl1)"/><ellipse cx="219.0" cy="65.3" rx="1.5" ry="1.2" fill="#f0e4f4" opacity="0.85"/><circle cx="167.4" cy="120.3" r="5.4" fill="#8e6ccc" opacity="0.3" filter="url(#bl1)"/><circle cx="167.4" cy="120.3" r="5.4" fill="none" stroke="#3c2088" stroke-width="1.6" opacity="0.35" filter="url(#bl1)"/><circle cx="200.7" cy="106.3" r="5.6" fill="#8e6ccc" opacity="0.3" filter="url(#bl1)"/><circle cx="200.7" cy="106.3" r="5.6" fill="none" stroke="#3c2088" stroke-width="1.6" opacity="0.35" filter="url(#bl1)"/><ellipse cx="201.5" cy="105.5" rx="2.1" ry="1.7" fill="#f0e4f4" opacity="0.85"/><circle cx="197.7" cy="127.9" r="6.2" fill="#8e6ccc" opacity="0.3" filter="url(#bl1)"/><circle cx="197.7" cy="127.9" r="6.2" fill="none" stroke="#3c2088" stroke-width="1.6" opacity="0.35" filter="url(#bl1)"/><circle cx="182.7" cy="83.3" r="1.3" fill="#e58fd6" opacity="0.9"/><circle cx="183.4" cy="145.7" r="1.3" fill="#e58fd6" opacity="0.9"/><circle cx="189.7" cy="93.0" r="1.8" fill="#e58fd6" opacity="0.9"/><circle cx="196.2" cy="106.1" r="1.3" fill="#e58fd6" opacity="0.9"/><circle cx="177.2" cy="77.8" r="1.9" fill="#e58fd6" opacity="0.9"/><circle cx="198.0" cy="62.9" r="1.5" fill="#e58fd6" opacity="0.9"/><circle cx="170.2" cy="107.3" r="1.4" fill="#e58fd6" opacity="0.9"/></g><clipPath id="fc2"><path d="M268.4 34.4 C274.9 33.0 288.2 34.1 293.9 36.1 C299.6 38.1 300.7 42.2 302.4 46.2 C304.1 50.1 303.2 54.4 304.1 59.8 C305.0 65.2 307.2 73.1 307.5 78.5 C307.8 83.9 307.2 87.8 305.8 92.0 C304.4 96.2 301.0 99.9 299.0 103.9 C297.0 107.9 296.2 112.4 293.9 115.8 C291.6 119.2 288.8 121.8 285.4 124.3 C282.0 126.8 277.7 130.2 273.5 131.0 C269.3 131.8 263.7 131.9 260.0 129.4 C256.3 126.9 252.6 120.3 251.5 115.8 C250.4 111.3 250.9 106.2 253.2 102.2 C255.5 98.2 264.0 95.4 265.1 92.0 C266.2 88.6 261.7 86.4 260.0 81.9 C258.3 77.4 255.7 71.1 254.9 64.9 C254.0 58.7 252.6 49.6 254.9 44.5 C257.1 39.4 261.9 35.8 268.4 34.4 Z"/></clipPath><g clip-path="url(#fc2)"><circle cx="299.6" cy="59.4" r="6.9" fill="#8e6ccc" opacity="0.3" filter="url(#bl1)"/><circle cx="299.6" cy="59.4" r="6.9" fill="none" stroke="#3c2088" stroke-width="1.6" opacity="0.35" filter="url(#bl1)"/><ellipse cx="300.5" cy="59.7" rx="1.1" ry="1.6" fill="#f0e4f4" opacity="0.85"/><circle cx="266.9" cy="69.4" r="4.1" fill="#8e6ccc" opacity="0.3" filter="url(#bl1)"/><circle cx="266.9" cy="69.4" r="4.1" fill="none" stroke="#3c2088" stroke-width="1.6" opacity="0.35" filter="url(#bl1)"/><circle cx="256.6" cy="105.7" r="5.1" fill="#8e6ccc" opacity="0.3" filter="url(#bl1)"/><circle cx="256.6" cy="105.7" r="5.1" fill="none" stroke="#3c2088" stroke-width="1.6" opacity="0.35" filter="url(#bl1)"/><circle cx="267.9" cy="42.0" r="7.2" fill="#8e6ccc" opacity="0.3" filter="url(#bl1)"/><circle cx="267.9" cy="42.0" r="7.2" fill="none" stroke="#3c2088" stroke-width="1.6" opacity="0.35" filter="url(#bl1)"/><circle cx="261.0" cy="128.7" r="7.1" fill="#8e6ccc" opacity="0.3" filter="url(#bl1)"/><circle cx="261.0" cy="128.7" r="7.1" fill="none" stroke="#3c2088" stroke-width="1.6" opacity="0.35" filter="url(#bl1)"/><ellipse cx="260.0" cy="128.9" rx="1.2" ry="1.5" fill="#f0e4f4" opacity="0.85"/><circle cx="277.8" cy="102.9" r="5.8" fill="#8e6ccc" opacity="0.3" filter="url(#bl1)"/><circle cx="277.8" cy="102.9" r="5.8" fill="none" stroke="#3c2088" stroke-width="1.6" opacity="0.35" filter="url(#bl1)"/><circle cx="297.5" cy="92.6" r="5.9" fill="#8e6ccc" opacity="0.3" filter="url(#bl1)"/><circle cx="297.5" cy="92.6" r="5.9" fill="none" stroke="#3c2088" stroke-width="1.6" opacity="0.35" filter="url(#bl1)"/><ellipse cx="296.8" cy="91.8" rx="2.0" ry="1.0" fill="#f0e4f4" opacity="0.85"/><circle cx="275.4" cy="65.0" r="1.6" fill="#e58fd6" opacity="0.9"/><circle cx="281.4" cy="117.4" r="1.4" fill="#e58fd6" opacity="0.9"/><circle cx="271.8" cy="97.3" r="1.7" fill="#e58fd6" opacity="0.9"/><circle cx="303.3" cy="64.5" r="1.9" fill="#e58fd6" opacity="0.9"/><circle cx="258.7" cy="71.1" r="1.8" fill="#e58fd6" opacity="0.9"/><circle cx="273.6" cy="104.4" r="1.8" fill="#e58fd6" opacity="0.9"/></g><clipPath id="fc3"><path d="M355.0 24.2 C360.7 24.5 371.9 28.8 378.7 31.0 C385.5 33.2 390.1 35.4 395.7 37.7 C401.4 39.9 408.4 41.1 412.6 44.5 C416.8 47.9 420.2 52.4 421.1 58.1 C422.0 63.8 420.5 73.4 417.7 78.5 C414.9 83.6 410.7 84.9 404.2 88.6 C397.7 92.3 385.2 99.7 378.7 100.5 C372.2 101.3 370.2 96.2 365.1 93.7 C360.0 91.1 352.7 88.6 348.2 85.2 C343.7 81.8 340.8 78.2 338.0 73.4 C335.2 68.6 331.8 61.8 331.2 56.4 C330.6 51.0 332.3 45.6 334.6 41.1 C336.9 36.6 341.4 32.1 344.8 29.3 C348.2 26.5 349.3 23.9 355.0 24.2 Z"/></clipPath><g clip-path="url(#fc3)"><circle cx="379.3" cy="40.3" r="5.1" fill="#8e6ccc" opacity="0.3" filter="url(#bl1)"/><circle cx="379.3" cy="40.3" r="5.1" fill="none" stroke="#3c2088" stroke-width="1.6" opacity="0.35" filter="url(#bl1)"/><ellipse cx="378.9" cy="40.1" rx="2.0" ry="1.4" fill="#f0e4f4" opacity="0.85"/><circle cx="368.5" cy="43.0" r="4.8" fill="#8e6ccc" opacity="0.3" filter="url(#bl1)"/><circle cx="368.5" cy="43.0" r="4.8" fill="none" stroke="#3c2088" stroke-width="1.6" opacity="0.35" filter="url(#bl1)"/><circle cx="371.2" cy="37.4" r="6.8" fill="#8e6ccc" opacity="0.3" filter="url(#bl1)"/><circle cx="371.2" cy="37.4" r="6.8" fill="none" stroke="#3c2088" stroke-width="1.6" opacity="0.35" filter="url(#bl1)"/><circle cx="418.2" cy="65.1" r="6.0" fill="#8e6ccc" opacity="0.3" filter="url(#bl1)"/><circle cx="418.2" cy="65.1" r="6.0" fill="none" stroke="#3c2088" stroke-width="1.6" opacity="0.35" filter="url(#bl1)"/><ellipse cx="418.4" cy="66.0" rx="2.2" ry="1.5" fill="#f0e4f4" opacity="0.85"/><circle cx="369.9" cy="29.0" r="6.9" fill="#8e6ccc" opacity="0.3" filter="url(#bl1)"/><circle cx="369.9" cy="29.0" r="6.9" fill="none" stroke="#3c2088" stroke-width="1.6" opacity="0.35" filter="url(#bl1)"/><ellipse cx="369.6" cy="28.1" rx="1.0" ry="1.2" fill="#f0e4f4" opacity="0.85"/><circle cx="394.9" cy="75.2" r="4.6" fill="#8e6ccc" opacity="0.3" filter="url(#bl1)"/><circle cx="394.9" cy="75.2" r="4.6" fill="none" stroke="#3c2088" stroke-width="1.6" opacity="0.35" filter="url(#bl1)"/><ellipse cx="395.1" cy="74.3" rx="1.7" ry="1.3" fill="#f0e4f4" opacity="0.85"/><circle cx="380.0" cy="33.5" r="3.8" fill="#8e6ccc" opacity="0.3" filter="url(#bl1)"/><circle cx="380.0" cy="33.5" r="3.8" fill="none" stroke="#3c2088" stroke-width="1.6" opacity="0.35" filter="url(#bl1)"/><ellipse cx="379.3" cy="33.7" rx="1.4" ry="1.4" fill="#f0e4f4" opacity="0.85"/><circle cx="398.6" cy="70.5" r="5.6" fill="#8e6ccc" opacity="0.3" filter="url(#bl1)"/><circle cx="398.6" cy="70.5" r="5.6" fill="none" stroke="#3c2088" stroke-width="1.6" opacity="0.35" filter="url(#bl1)"/><ellipse cx="398.3" cy="71.4" rx="1.3" ry="1.1" fill="#f0e4f4" opacity="0.85"/><circle cx="375.5" cy="65.9" r="6.7" fill="#8e6ccc" opacity="0.3" filter="url(#bl1)"/><circle cx="375.5" cy="65.9" r="6.7" fill="none" stroke="#3c2088" stroke-width="1.6" opacity="0.35" filter="url(#bl1)"/><ellipse cx="376.5" cy="64.9" rx="1.9" ry="1.4" fill="#f0e4f4" opacity="0.85"/><circle cx="402.7" cy="79.1" r="2.0" fill="#e58fd6" opacity="0.9"/><circle cx="388.0" cy="63.2" r="1.3" fill="#e58fd6" opacity="0.9"/><circle cx="389.3" cy="91.0" r="1.2" fill="#e58fd6" opacity="0.9"/><circle cx="397.3" cy="80.0" r="1.1" fill="#e58fd6" opacity="0.9"/><circle cx="350.7" cy="28.9" r="1.7" fill="#e58fd6" opacity="0.9"/><circle cx="399.4" cy="67.6" r="1.6" fill="#e58fd6" opacity="0.9"/><circle cx="402.9" cy="72.8" r="1.1" fill="#e58fd6" opacity="0.9"/></g><clipPath id="fc4"><path d="M371.0 125.0 C373.7 122.7 382.3 118.7 387.0 117.8 C391.7 116.9 395.6 119.3 399.0 119.4 C402.4 119.5 403.2 118.1 407.1 118.6 C411.0 119.1 417.6 120.7 422.3 122.6 C427.0 124.5 432.8 127.7 435.1 129.8 C437.4 131.9 436.7 134.5 435.9 135.4 C435.1 136.3 431.1 133.8 430.3 135.4 C429.5 137.0 431.9 141.8 431.1 145.1 C430.3 148.5 428.6 152.8 425.5 155.5 C422.4 158.2 416.2 159.9 412.7 161.1 C409.2 162.3 408.3 162.6 404.7 162.7 C401.1 162.8 394.9 162.8 391.0 161.9 C387.1 161.0 383.9 159.0 381.4 157.1 C378.9 155.2 377.3 153.4 375.8 150.7 C374.3 148.0 373.5 144.3 372.6 141.1 C371.7 137.9 370.9 134.1 370.6 131.4 C370.3 128.7 368.3 127.3 371.0 125.0 Z"/></clipPath><g clip-path="url(#fc4)"><circle cx="422.6" cy="133.7" r="5.8" fill="#8e6ccc" opacity="0.3" filter="url(#bl1)"/><circle cx="422.6" cy="133.7" r="5.8" fill="none" stroke="#3c2088" stroke-width="1.6" opacity="0.35" filter="url(#bl1)"/><circle cx="429.6" cy="136.4" r="6.9" fill="#8e6ccc" opacity="0.3" filter="url(#bl1)"/><circle cx="429.6" cy="136.4" r="6.9" fill="none" stroke="#3c2088" stroke-width="1.6" opacity="0.35" filter="url(#bl1)"/><ellipse cx="429.3" cy="136.7" rx="1.7" ry="1.6" fill="#f0e4f4" opacity="0.85"/><circle cx="384.2" cy="153.9" r="6.7" fill="#8e6ccc" opacity="0.3" filter="url(#bl1)"/><circle cx="384.2" cy="153.9" r="6.7" fill="none" stroke="#3c2088" stroke-width="1.6" opacity="0.35" filter="url(#bl1)"/><ellipse cx="383.5" cy="154.1" rx="2.2" ry="1.4" fill="#f0e4f4" opacity="0.85"/><circle cx="398.5" cy="140.6" r="6.7" fill="#8e6ccc" opacity="0.3" filter="url(#bl1)"/><circle cx="398.5" cy="140.6" r="6.7" fill="none" stroke="#3c2088" stroke-width="1.6" opacity="0.35" filter="url(#bl1)"/><circle cx="405.7" cy="144.4" r="1.9" fill="#e58fd6" opacity="0.9"/><circle cx="422.9" cy="155.5" r="1.3" fill="#e58fd6" opacity="0.9"/><circle cx="409.8" cy="154.8" r="1.7" fill="#e58fd6" opacity="0.9"/></g><clipPath id="fc5"><path d="M461.4 42.8 C465.1 43.2 471.6 45.1 475.0 47.9 C478.4 50.7 480.3 56.4 481.7 59.8 C483.1 63.2 482.0 64.6 483.4 68.3 C484.8 72.0 489.4 77.1 490.2 81.9 C491.1 86.7 491.0 93.0 488.5 97.1 C486.0 101.2 479.2 105.4 475.0 106.5 C470.8 107.6 466.4 106.0 463.1 103.9 C459.9 101.8 456.9 97.1 455.5 93.7 C454.1 90.3 454.2 86.3 454.6 83.5 C455.0 80.7 458.9 79.9 458.0 76.8 C457.1 73.7 451.2 68.9 449.5 64.9 C447.8 60.9 447.2 56.2 447.8 53.0 C448.4 49.8 450.6 47.1 452.9 45.4 C455.2 43.7 457.7 42.4 461.4 42.8 Z"/></clipPath><g clip-path="url(#fc5)"><circle cx="463.0" cy="55.9" r="5.5" fill="#8e6ccc" opacity="0.3" filter="url(#bl1)"/><circle cx="463.0" cy="55.9" r="5.5" fill="none" stroke="#3c2088" stroke-width="1.6" opacity="0.35" filter="url(#bl1)"/><circle cx="458.3" cy="66.3" r="7.0" fill="#8e6ccc" opacity="0.3" filter="url(#bl1)"/><circle cx="458.3" cy="66.3" r="7.0" fill="none" stroke="#3c2088" stroke-width="1.6" opacity="0.35" filter="url(#bl1)"/><ellipse cx="457.6" cy="66.4" rx="1.3" ry="0.8" fill="#f0e4f4" opacity="0.85"/><circle cx="472.9" cy="105.9" r="6.6" fill="#8e6ccc" opacity="0.3" filter="url(#bl1)"/><circle cx="472.9" cy="105.9" r="6.6" fill="none" stroke="#3c2088" stroke-width="1.6" opacity="0.35" filter="url(#bl1)"/><circle cx="474.8" cy="91.2" r="1.4" fill="#e58fd6" opacity="0.9"/><circle cx="459.1" cy="89.8" r="1.5" fill="#e58fd6" opacity="0.9"/><circle cx="480.8" cy="64.3" r="1.1" fill="#e58fd6" opacity="0.9"/></g><clipPath id="fc6"><path d="M528.4 36.0 C532.9 33.8 546.8 30.7 553.9 31.0 C561.0 31.3 566.7 34.3 570.9 37.7 C575.1 41.1 578.5 47.6 579.3 51.3 C580.1 55.0 575.3 57.5 575.9 59.8 C576.5 62.1 582.7 62.9 582.7 64.9 C582.7 66.9 576.8 68.3 575.9 71.7 C575.0 75.1 578.2 81.2 577.6 85.2 C577.0 89.1 572.5 92.0 572.5 95.4 C572.5 98.8 576.0 101.6 577.6 105.6 C579.2 109.6 581.9 115.0 581.9 119.2 C581.9 123.4 577.8 128.2 577.6 131.0 C577.5 133.8 579.9 133.6 581.0 136.1 C582.1 138.7 586.1 145.2 584.4 146.3 C582.7 147.4 573.7 144.6 570.9 142.9 C568.1 141.2 567.5 138.1 567.5 136.1 C567.5 134.1 573.2 132.1 570.9 131.0 C568.6 129.9 557.9 131.4 553.9 129.4 C549.9 127.4 548.5 122.9 547.1 119.2 C545.7 115.5 546.8 109.6 545.4 107.3 C544.0 105.0 540.9 108.2 538.6 105.6 C536.3 103.1 534.0 96.5 531.8 92.0 C529.5 87.5 526.2 84.1 525.1 78.5 C524.0 72.9 524.8 63.8 525.1 58.1 C525.4 52.4 526.2 48.2 526.7 44.5 C527.2 40.8 523.9 38.2 528.4 36.0 Z"/></clipPath><g clip-path="url(#fc6)"><circle cx="550.5" cy="86.3" r="6.7" fill="#8e6ccc" opacity="0.3" filter="url(#bl1)"/><circle cx="550.5" cy="86.3" r="6.7" fill="none" stroke="#3c2088" stroke-width="1.6" opacity="0.35" filter="url(#bl1)"/><ellipse cx="550.8" cy="86.1" rx="1.9" ry="1.0" fill="#f0e4f4" opacity="0.85"/><circle cx="577.3" cy="139.9" r="3.6" fill="#8e6ccc" opacity="0.3" filter="url(#bl1)"/><circle cx="577.3" cy="139.9" r="3.6" fill="none" stroke="#3c2088" stroke-width="1.6" opacity="0.35" filter="url(#bl1)"/><circle cx="571.2" cy="110.9" r="3.9" fill="#8e6ccc" opacity="0.3" filter="url(#bl1)"/><circle cx="571.2" cy="110.9" r="3.9" fill="none" stroke="#3c2088" stroke-width="1.6" opacity="0.35" filter="url(#bl1)"/><circle cx="570.9" cy="103.2" r="7.4" fill="#8e6ccc" opacity="0.3" filter="url(#bl1)"/><circle cx="570.9" cy="103.2" r="7.4" fill="none" stroke="#3c2088" stroke-width="1.6" opacity="0.35" filter="url(#bl1)"/><circle cx="533.6" cy="65.4" r="5.6" fill="#8e6ccc" opacity="0.3" filter="url(#bl1)"/><circle cx="533.6" cy="65.4" r="5.6" fill="none" stroke="#3c2088" stroke-width="1.6" opacity="0.35" filter="url(#bl1)"/><circle cx="561.9" cy="102.6" r="7.3" fill="#8e6ccc" opacity="0.3" filter="url(#bl1)"/><circle cx="561.9" cy="102.6" r="7.3" fill="none" stroke="#3c2088" stroke-width="1.6" opacity="0.35" filter="url(#bl1)"/><ellipse cx="562.4" cy="102.8" rx="1.5" ry="1.1" fill="#f0e4f4" opacity="0.85"/><circle cx="545.0" cy="65.6" r="3.8" fill="#8e6ccc" opacity="0.3" filter="url(#bl1)"/><circle cx="545.0" cy="65.6" r="3.8" fill="none" stroke="#3c2088" stroke-width="1.6" opacity="0.35" filter="url(#bl1)"/><ellipse cx="544.7" cy="66.5" rx="1.9" ry="1.5" fill="#f0e4f4" opacity="0.85"/><circle cx="575.3" cy="62.7" r="4.0" fill="#8e6ccc" opacity="0.3" filter="url(#bl1)"/><circle cx="575.3" cy="62.7" r="4.0" fill="none" stroke="#3c2088" stroke-width="1.6" opacity="0.35" filter="url(#bl1)"/><circle cx="539.7" cy="41.8" r="6.0" fill="#8e6ccc" opacity="0.3" filter="url(#bl1)"/><circle cx="539.7" cy="41.8" r="6.0" fill="none" stroke="#3c2088" stroke-width="1.6" opacity="0.35" filter="url(#bl1)"/><circle cx="583.3" cy="144.4" r="1.1" fill="#e58fd6" opacity="0.9"/><circle cx="568.4" cy="117.0" r="1.7" fill="#e58fd6" opacity="0.9"/><circle cx="545.2" cy="93.6" r="1.6" fill="#e58fd6" opacity="0.9"/><circle cx="547.3" cy="67.3" r="1.8" fill="#e58fd6" opacity="0.9"/><circle cx="532.0" cy="38.1" r="1.1" fill="#e58fd6" opacity="0.9"/><circle cx="532.0" cy="81.2" r="1.9" fill="#e58fd6" opacity="0.9"/><circle cx="546.2" cy="42.7" r="1.7" fill="#e58fd6" opacity="0.9"/></g><clipPath id="fc7"><path d="M630.4 64.8 C632.2 60.7 636.0 58.7 639.5 57.2 C643.0 55.7 647.6 54.9 651.6 55.7 C655.6 56.5 660.8 61.6 663.8 61.8 C666.8 62.1 667.4 57.4 669.9 57.2 C672.4 56.9 677.0 58.3 679.0 60.3 C681.0 62.3 681.5 65.3 682.0 69.4 C682.5 73.4 681.5 80.0 682.0 84.6 C682.5 89.2 684.3 92.5 685.1 96.8 C685.9 101.1 686.6 106.6 686.6 110.4 C686.6 114.2 684.4 117.2 685.1 119.5 C685.9 121.8 689.6 121.8 691.1 124.1 C692.6 126.4 693.9 129.7 694.2 133.2 C694.5 136.7 694.2 141.8 692.7 145.4 C691.2 148.9 688.7 152.2 685.1 154.5 C681.5 156.8 676.2 158.3 671.4 159.1 C666.6 159.9 661.5 159.9 656.2 159.1 C650.9 158.3 644.1 156.8 639.5 154.5 C634.9 152.2 631.1 149.4 628.8 145.4 C626.5 141.3 625.5 134.2 625.8 130.2 C626.1 126.1 626.6 123.1 630.4 121.1 C634.2 119.1 642.5 118.5 648.6 118.0 C654.7 117.5 662.8 119.3 666.8 118.0 C670.8 116.7 672.9 112.4 672.9 110.4 C672.9 108.4 669.1 107.7 666.8 105.9 C664.5 104.1 663.0 100.8 659.2 99.8 C655.4 98.8 648.3 99.6 644.0 99.8 C639.7 100.1 636.4 102.8 633.4 101.3 C630.4 99.8 627.3 93.7 625.8 90.7 C624.3 87.7 623.8 84.6 624.3 83.1 C624.8 81.6 627.8 84.7 628.8 81.6 C629.8 78.6 628.6 68.9 630.4 64.8 Z"/></clipPath><g clip-path="url(#fc7)"><circle cx="676.6" cy="102.8" r="6.4" fill="#8e6ccc" opacity="0.3" filter="url(#bl1)"/><circle cx="676.6" cy="102.8" r="6.4" fill="none" stroke="#3c2088" stroke-width="1.6" opacity="0.35" filter="url(#bl1)"/><circle cx="683.8" cy="134.5" r="7.1" fill="#8e6ccc" opacity="0.3" filter="url(#bl1)"/><circle cx="683.8" cy="134.5" r="7.1" fill="none" stroke="#3c2088" stroke-width="1.6" opacity="0.35" filter="url(#bl1)"/><circle cx="678.3" cy="136.8" r="6.4" fill="#8e6ccc" opacity="0.3" filter="url(#bl1)"/><circle cx="678.3" cy="136.8" r="6.4" fill="none" stroke="#3c2088" stroke-width="1.6" opacity="0.35" filter="url(#bl1)"/><circle cx="681.9" cy="111.6" r="6.1" fill="#8e6ccc" opacity="0.3" filter="url(#bl1)"/><circle cx="681.9" cy="111.6" r="6.1" fill="none" stroke="#3c2088" stroke-width="1.6" opacity="0.35" filter="url(#bl1)"/><ellipse cx="681.9" cy="112.1" rx="2.1" ry="1.6" fill="#f0e4f4" opacity="0.85"/><circle cx="655.0" cy="79.4" r="7.0" fill="#8e6ccc" opacity="0.3" filter="url(#bl1)"/><circle cx="655.0" cy="79.4" r="7.0" fill="none" stroke="#3c2088" stroke-width="1.6" opacity="0.35" filter="url(#bl1)"/><circle cx="637.7" cy="59.6" r="7.0" fill="#8e6ccc" opacity="0.3" filter="url(#bl1)"/><circle cx="637.7" cy="59.6" r="7.0" fill="none" stroke="#3c2088" stroke-width="1.6" opacity="0.35" filter="url(#bl1)"/><circle cx="665.3" cy="134.1" r="6.7" fill="#8e6ccc" opacity="0.3" filter="url(#bl1)"/><circle cx="665.3" cy="134.1" r="6.7" fill="none" stroke="#3c2088" stroke-width="1.6" opacity="0.35" filter="url(#bl1)"/><ellipse cx="665.4" cy="133.5" rx="1.7" ry="1.2" fill="#f0e4f4" opacity="0.85"/><circle cx="679.5" cy="67.7" r="4.3" fill="#8e6ccc" opacity="0.3" filter="url(#bl1)"/><circle cx="679.5" cy="67.7" r="4.3" fill="none" stroke="#3c2088" stroke-width="1.6" opacity="0.35" filter="url(#bl1)"/><ellipse cx="678.5" cy="67.5" rx="2.2" ry="1.7" fill="#f0e4f4" opacity="0.85"/><circle cx="636.9" cy="141.7" r="4.4" fill="#8e6ccc" opacity="0.3" filter="url(#bl1)"/><circle cx="636.9" cy="141.7" r="4.4" fill="none" stroke="#3c2088" stroke-width="1.6" opacity="0.35" filter="url(#bl1)"/><ellipse cx="637.2" cy="141.3" rx="1.2" ry="0.9" fill="#f0e4f4" opacity="0.85"/><circle cx="636.7" cy="75.6" r="7.1" fill="#8e6ccc" opacity="0.3" filter="url(#bl1)"/><circle cx="636.7" cy="75.6" r="7.1" fill="none" stroke="#3c2088" stroke-width="1.6" opacity="0.35" filter="url(#bl1)"/><ellipse cx="636.7" cy="75.0" rx="1.9" ry="0.8" fill="#f0e4f4" opacity="0.85"/><circle cx="650.3" cy="132.0" r="1.0" fill="#e58fd6" opacity="0.9"/><circle cx="653.1" cy="89.4" r="1.5" fill="#e58fd6" opacity="0.9"/><circle cx="668.2" cy="64.0" r="1.9" fill="#e58fd6" opacity="0.9"/><circle cx="643.2" cy="135.5" r="1.1" fill="#e58fd6" opacity="0.9"/><circle cx="630.9" cy="75.7" r="1.1" fill="#e58fd6" opacity="0.9"/><circle cx="641.6" cy="70.1" r="1.1" fill="#e58fd6" opacity="0.9"/><circle cx="683.8" cy="110.3" r="1.5" fill="#e58fd6" opacity="0.9"/><circle cx="659.8" cy="139.5" r="1.0" fill="#e58fd6" opacity="0.9"/></g><clipPath id="fc8"><path d="M79.2 247.1 C81.1 243.6 85.9 238.7 89.7 236.6 C93.5 234.6 99.2 235.5 102.1 234.8 C105.1 234.1 105.6 231.9 107.4 232.2 C109.1 232.5 109.1 235.3 112.6 236.6 C116.1 237.9 124.4 238.4 128.5 240.1 C132.6 241.9 135.7 244.2 137.3 247.1 C138.9 250.0 139.1 254.8 138.2 257.7 C137.3 260.7 134.5 262.1 132.0 264.8 C129.5 267.4 126.7 271.1 123.2 273.6 C119.7 276.1 115.3 279.0 110.9 279.7 C106.5 280.4 101.2 279.9 96.8 278.0 C92.4 276.1 87.5 271.7 84.4 268.3 C81.3 264.9 79.2 261.2 78.3 257.7 C77.4 254.2 77.3 250.6 79.2 247.1 Z"/></clipPath><g clip-path="url(#fc8)"><circle cx="78.7" cy="256.2" r="6.0" fill="#8e6ccc" opacity="0.3" filter="url(#bl1)"/><circle cx="78.7" cy="256.2" r="6.0" fill="none" stroke="#3c2088" stroke-width="1.6" opacity="0.35" filter="url(#bl1)"/><circle cx="97.0" cy="259.8" r="3.6" fill="#8e6ccc" opacity="0.3" filter="url(#bl1)"/><circle cx="97.0" cy="259.8" r="3.6" fill="none" stroke="#3c2088" stroke-width="1.6" opacity="0.35" filter="url(#bl1)"/><circle cx="135.6" cy="258.3" r="6.2" fill="#8e6ccc" opacity="0.3" filter="url(#bl1)"/><circle cx="135.6" cy="258.3" r="6.2" fill="none" stroke="#3c2088" stroke-width="1.6" opacity="0.35" filter="url(#bl1)"/><circle cx="107.5" cy="236.4" r="6.7" fill="#8e6ccc" opacity="0.3" filter="url(#bl1)"/><circle cx="107.5" cy="236.4" r="6.7" fill="none" stroke="#3c2088" stroke-width="1.6" opacity="0.35" filter="url(#bl1)"/><circle cx="120.3" cy="247.1" r="2.0" fill="#e58fd6" opacity="0.9"/><circle cx="115.6" cy="247.0" r="1.8" fill="#e58fd6" opacity="0.9"/><circle cx="91.7" cy="243.6" r="1.9" fill="#e58fd6" opacity="0.9"/></g><clipPath id="fc9"><path d="M159.0 205.0 C160.3 203.9 162.8 202.7 165.0 202.5 C167.2 202.3 170.0 202.9 172.0 204.0 C174.0 205.1 176.1 207.0 177.0 209.0 C177.9 211.0 178.2 213.9 177.5 216.0 C176.8 218.1 174.1 219.7 173.0 221.5 C171.9 223.3 170.7 224.9 171.0 227.0 C171.3 229.1 172.3 232.3 175.0 234.0 C177.7 235.7 183.0 236.2 187.0 237.0 C191.0 237.8 198.0 238.1 199.0 239.0 C200.0 239.9 197.0 241.8 193.0 242.5 C189.0 243.2 180.0 243.0 175.0 243.0 C170.0 243.0 166.3 243.2 163.0 242.5 C159.7 241.8 157.2 240.8 155.0 239.0 C152.8 237.2 151.2 234.5 150.0 232.0 C148.8 229.5 147.5 226.5 147.5 224.0 C147.5 221.5 148.8 218.7 150.0 217.0 C151.2 215.3 153.8 215.3 155.0 214.0 C156.2 212.7 156.3 210.5 157.0 209.0 C157.7 207.5 157.7 206.1 159.0 205.0 Z"/></clipPath><g clip-path="url(#fc9)"><circle cx="167.9" cy="225.7" r="6.3" fill="#8e6ccc" opacity="0.3" filter="url(#bl1)"/><circle cx="167.9" cy="225.7" r="6.3" fill="none" stroke="#3c2088" stroke-width="1.6" opacity="0.35" filter="url(#bl1)"/><circle cx="158.8" cy="206.3" r="5.5" fill="#8e6ccc" opacity="0.3" filter="url(#bl1)"/><circle cx="158.8" cy="206.3" r="5.5" fill="none" stroke="#3c2088" stroke-width="1.6" opacity="0.35" filter="url(#bl1)"/><ellipse cx="158.7" cy="205.5" rx="1.1" ry="1.4" fill="#f0e4f4" opacity="0.85"/><circle cx="167.5" cy="206.3" r="1.8" fill="#e58fd6" opacity="0.9"/><circle cx="185.9" cy="240.3" r="1.3" fill="#e58fd6" opacity="0.9"/></g><clipPath id="fc10"><path d="M218.4 210.1 C220.2 209.2 222.8 210.4 227.2 211.9 C231.6 213.4 240.8 216.0 244.9 218.9 C249.0 221.8 249.5 226.0 251.9 229.5 C254.2 233.0 257.5 236.0 259.0 240.1 C260.5 244.2 260.4 250.1 260.7 254.2 C261.0 258.3 262.2 261.0 260.7 264.8 C259.2 268.6 255.7 273.6 251.9 277.1 C248.1 280.6 242.8 283.8 237.8 285.9 C232.8 287.9 226.0 290.0 221.9 289.4 C217.8 288.8 214.9 285.3 213.1 282.4 C211.4 279.5 210.5 275.0 211.4 271.8 C212.3 268.6 215.8 265.3 218.4 263.0 C221.0 260.7 225.7 260.9 227.2 257.7 C228.7 254.5 228.1 248.3 227.2 243.6 C226.3 238.9 223.7 233.9 221.9 229.5 C220.1 225.1 217.2 220.4 216.6 217.2 C216.0 214.0 216.6 211.0 218.4 210.1 Z"/></clipPath><g clip-path="url(#fc10)"><circle cx="253.8" cy="272.0" r="4.1" fill="#8e6ccc" opacity="0.3" filter="url(#bl1)"/><circle cx="253.8" cy="272.0" r="4.1" fill="none" stroke="#3c2088" stroke-width="1.6" opacity="0.35" filter="url(#bl1)"/><circle cx="222.9" cy="227.4" r="4.9" fill="#8e6ccc" opacity="0.3" filter="url(#bl1)"/><circle cx="222.9" cy="227.4" r="4.9" fill="none" stroke="#3c2088" stroke-width="1.6" opacity="0.35" filter="url(#bl1)"/><ellipse cx="223.7" cy="227.6" rx="1.7" ry="1.5" fill="#f0e4f4" opacity="0.85"/><circle cx="220.7" cy="273.8" r="6.6" fill="#8e6ccc" opacity="0.3" filter="url(#bl1)"/><circle cx="220.7" cy="273.8" r="6.6" fill="none" stroke="#3c2088" stroke-width="1.6" opacity="0.35" filter="url(#bl1)"/><circle cx="233.6" cy="253.1" r="3.8" fill="#8e6ccc" opacity="0.3" filter="url(#bl1)"/><circle cx="233.6" cy="253.1" r="3.8" fill="none" stroke="#3c2088" stroke-width="1.6" opacity="0.35" filter="url(#bl1)"/><ellipse cx="233.9" cy="254.0" rx="2.1" ry="1.1" fill="#f0e4f4" opacity="0.85"/><circle cx="248.7" cy="278.0" r="7.3" fill="#8e6ccc" opacity="0.3" filter="url(#bl1)"/><circle cx="248.7" cy="278.0" r="7.3" fill="none" stroke="#3c2088" stroke-width="1.6" opacity="0.35" filter="url(#bl1)"/><circle cx="227.6" cy="279.4" r="1.0" fill="#e58fd6" opacity="0.9"/><circle cx="239.4" cy="246.4" r="1.9" fill="#e58fd6" opacity="0.9"/><circle cx="242.0" cy="226.0" r="1.2" fill="#e58fd6" opacity="0.9"/><circle cx="213.2" cy="269.8" r="1.8" fill="#e58fd6" opacity="0.9"/></g><clipPath id="fc11"><path d="M312.4 169.6 C317.1 169.0 325.6 169.3 330.0 171.3 C334.4 173.3 337.0 178.1 338.8 181.9 C340.6 185.7 338.6 190.5 340.6 194.3 C342.7 198.1 348.8 200.7 351.1 204.8 C353.5 208.9 354.4 214.2 354.7 218.9 C355.0 223.6 354.4 228.3 352.9 233.0 C351.4 237.7 349.0 243.0 345.8 247.1 C342.6 251.2 337.9 255.2 333.5 257.7 C329.1 260.2 323.8 262.1 319.4 262.1 C315.0 262.1 310.6 260.2 307.1 257.7 C303.6 255.2 301.8 250.0 298.3 247.1 C294.8 244.2 288.8 243.6 285.9 240.1 C282.9 236.6 282.2 231.3 280.6 226.0 C279.0 220.7 276.5 214.0 276.2 208.4 C275.9 202.8 276.7 197.2 278.9 192.5 C281.1 187.8 285.6 183.1 289.4 180.2 C293.2 177.3 298.0 176.7 301.8 174.9 C305.6 173.1 307.7 170.2 312.4 169.6 Z"/></clipPath><g clip-path="url(#fc11)"><circle cx="305.5" cy="190.3" r="5.7" fill="#8e6ccc" opacity="0.3" filter="url(#bl1)"/><circle cx="305.5" cy="190.3" r="5.7" fill="none" stroke="#3c2088" stroke-width="1.6" opacity="0.35" filter="url(#bl1)"/><ellipse cx="305.6" cy="190.0" rx="1.4" ry="1.5" fill="#f0e4f4" opacity="0.85"/><circle cx="295.7" cy="200.3" r="5.8" fill="#8e6ccc" opacity="0.3" filter="url(#bl1)"/><circle cx="295.7" cy="200.3" r="5.8" fill="none" stroke="#3c2088" stroke-width="1.6" opacity="0.35" filter="url(#bl1)"/><circle cx="288.0" cy="198.0" r="4.6" fill="#8e6ccc" opacity="0.3" filter="url(#bl1)"/><circle cx="288.0" cy="198.0" r="4.6" fill="none" stroke="#3c2088" stroke-width="1.6" opacity="0.35" filter="url(#bl1)"/><ellipse cx="288.0" cy="198.6" rx="1.2" ry="1.5" fill="#f0e4f4" opacity="0.85"/><circle cx="310.1" cy="222.5" r="5.5" fill="#8e6ccc" opacity="0.3" filter="url(#bl1)"/><circle cx="310.1" cy="222.5" r="5.5" fill="none" stroke="#3c2088" stroke-width="1.6" opacity="0.35" filter="url(#bl1)"/><circle cx="290.3" cy="226.6" r="5.1" fill="#8e6ccc" opacity="0.3" filter="url(#bl1)"/><circle cx="290.3" cy="226.6" r="5.1" fill="none" stroke="#3c2088" stroke-width="1.6" opacity="0.35" filter="url(#bl1)"/><circle cx="323.0" cy="207.3" r="7.4" fill="#8e6ccc" opacity="0.3" filter="url(#bl1)"/><circle cx="323.0" cy="207.3" r="7.4" fill="none" stroke="#3c2088" stroke-width="1.6" opacity="0.35" filter="url(#bl1)"/><ellipse cx="322.0" cy="206.6" rx="1.8" ry="0.9" fill="#f0e4f4" opacity="0.85"/><circle cx="333.9" cy="177.8" r="4.7" fill="#8e6ccc" opacity="0.3" filter="url(#bl1)"/><circle cx="333.9" cy="177.8" r="4.7" fill="none" stroke="#3c2088" stroke-width="1.6" opacity="0.35" filter="url(#bl1)"/><circle cx="277.8" cy="209.6" r="7.5" fill="#8e6ccc" opacity="0.3" filter="url(#bl1)"/><circle cx="277.8" cy="209.6" r="7.5" fill="none" stroke="#3c2088" stroke-width="1.6" opacity="0.35" filter="url(#bl1)"/><circle cx="306.8" cy="253.6" r="5.8" fill="#8e6ccc" opacity="0.3" filter="url(#bl1)"/><circle cx="306.8" cy="253.6" r="5.8" fill="none" stroke="#3c2088" stroke-width="1.6" opacity="0.35" filter="url(#bl1)"/><circle cx="303.2" cy="204.9" r="6.3" fill="#8e6ccc" opacity="0.3" filter="url(#bl1)"/><circle cx="303.2" cy="204.9" r="6.3" fill="none" stroke="#3c2088" stroke-width="1.6" opacity="0.35" filter="url(#bl1)"/><circle cx="330.6" cy="183.5" r="1.4" fill="#e58fd6" opacity="0.9"/><circle cx="301.2" cy="191.0" r="1.1" fill="#e58fd6" opacity="0.9"/><circle cx="334.9" cy="182.7" r="1.4" fill="#e58fd6" opacity="0.9"/><circle cx="325.3" cy="176.8" r="2.0" fill="#e58fd6" opacity="0.9"/><circle cx="339.5" cy="234.7" r="1.0" fill="#e58fd6" opacity="0.9"/><circle cx="297.6" cy="191.5" r="1.0" fill="#e58fd6" opacity="0.9"/><circle cx="326.3" cy="224.3" r="1.4" fill="#e58fd6" opacity="0.9"/><circle cx="334.9" cy="191.3" r="1.3" fill="#e58fd6" opacity="0.9"/></g><clipPath id="fc12"><path d="M411.1 197.8 C416.4 195.5 424.6 194.0 430.5 194.3 C436.4 194.6 442.5 196.9 446.3 199.5 C450.1 202.1 452.1 206.6 453.4 210.1 C454.7 213.6 454.6 217.5 454.3 220.7 C454.0 223.9 452.9 226.3 451.7 229.5 C450.5 232.7 447.1 236.6 447.2 240.1 C447.3 243.6 452.1 247.2 452.5 250.7 C452.9 254.2 452.1 258.9 449.9 261.2 C447.7 263.6 442.5 263.6 439.3 264.8 C436.1 266.0 434.3 267.4 430.5 268.3 C426.7 269.2 420.8 270.7 416.4 270.1 C412.0 269.5 407.5 266.9 404.0 264.8 C400.5 262.7 398.4 260.1 395.2 257.7 C392.0 255.4 387.3 253.9 384.6 250.7 C381.9 247.5 379.9 242.4 379.3 238.3 C378.7 234.2 379.0 229.5 381.1 226.0 C383.2 222.5 388.8 220.1 391.7 217.2 C394.6 214.3 395.5 211.6 398.7 208.4 C401.9 205.2 405.8 200.2 411.1 197.8 Z"/></clipPath><g clip-path="url(#fc12)"><circle cx="443.1" cy="231.4" r="6.4" fill="#8e6ccc" opacity="0.3" filter="url(#bl1)"/><circle cx="443.1" cy="231.4" r="6.4" fill="none" stroke="#3c2088" stroke-width="1.6" opacity="0.35" filter="url(#bl1)"/><circle cx="429.3" cy="221.7" r="7.4" fill="#8e6ccc" opacity="0.3" filter="url(#bl1)"/><circle cx="429.3" cy="221.7" r="7.4" fill="none" stroke="#3c2088" stroke-width="1.6" opacity="0.35" filter="url(#bl1)"/><ellipse cx="429.1" cy="222.4" rx="1.8" ry="1.2" fill="#f0e4f4" opacity="0.85"/><circle cx="441.3" cy="251.7" r="6.4" fill="#8e6ccc" opacity="0.3" filter="url(#bl1)"/><circle cx="441.3" cy="251.7" r="6.4" fill="none" stroke="#3c2088" stroke-width="1.6" opacity="0.35" filter="url(#bl1)"/><ellipse cx="441.7" cy="252.1" rx="2.0" ry="1.3" fill="#f0e4f4" opacity="0.85"/><circle cx="449.0" cy="248.9" r="4.3" fill="#8e6ccc" opacity="0.3" filter="url(#bl1)"/><circle cx="449.0" cy="248.9" r="4.3" fill="none" stroke="#3c2088" stroke-width="1.6" opacity="0.35" filter="url(#bl1)"/><circle cx="394.0" cy="241.1" r="4.8" fill="#8e6ccc" opacity="0.3" filter="url(#bl1)"/><circle cx="394.0" cy="241.1" r="4.8" fill="none" stroke="#3c2088" stroke-width="1.6" opacity="0.35" filter="url(#bl1)"/><circle cx="405.0" cy="254.2" r="6.8" fill="#8e6ccc" opacity="0.3" filter="url(#bl1)"/><circle cx="405.0" cy="254.2" r="6.8" fill="none" stroke="#3c2088" stroke-width="1.6" opacity="0.35" filter="url(#bl1)"/><ellipse cx="405.1" cy="253.6" rx="1.5" ry="1.2" fill="#f0e4f4" opacity="0.85"/><circle cx="432.7" cy="232.8" r="4.1" fill="#8e6ccc" opacity="0.3" filter="url(#bl1)"/><circle cx="432.7" cy="232.8" r="4.1" fill="none" stroke="#3c2088" stroke-width="1.6" opacity="0.35" filter="url(#bl1)"/><circle cx="418.0" cy="234.1" r="5.3" fill="#8e6ccc" opacity="0.3" filter="url(#bl1)"/><circle cx="418.0" cy="234.1" r="5.3" fill="none" stroke="#3c2088" stroke-width="1.6" opacity="0.35" filter="url(#bl1)"/><circle cx="428.4" cy="244.5" r="1.5" fill="#e58fd6" opacity="0.9"/><circle cx="409.4" cy="226.7" r="1.7" fill="#e58fd6" opacity="0.9"/><circle cx="412.1" cy="199.6" r="1.2" fill="#e58fd6" opacity="0.9"/><circle cx="406.2" cy="222.9" r="1.5" fill="#e58fd6" opacity="0.9"/><circle cx="412.8" cy="216.3" r="1.3" fill="#e58fd6" opacity="0.9"/><circle cx="416.2" cy="252.2" r="1.1" fill="#e58fd6" opacity="0.9"/></g><clipPath id="fc13"><path d="M528.3 184.8 C532.9 183.3 538.4 183.3 543.0 184.8 C547.6 186.3 551.6 190.6 555.9 194.0 C560.2 197.4 564.5 202.0 568.8 205.1 C573.1 208.2 579.1 209.0 581.7 212.4 C584.3 215.8 585.4 221.3 584.5 225.3 C583.6 229.3 578.5 233.0 576.2 236.4 C573.9 239.8 572.6 241.9 570.7 245.6 C568.9 249.3 568.5 254.8 565.1 258.5 C561.7 262.2 556.5 265.1 550.4 267.7 C544.3 270.3 535.0 273.3 528.3 274.2 C521.5 275.1 515.4 275.0 509.9 273.3 C504.4 271.6 499.7 267.1 495.1 264.0 C490.5 260.9 485.0 259.4 482.2 254.8 C479.4 250.2 478.5 241.9 478.5 236.4 C478.5 230.9 479.4 225.4 482.2 221.7 C485.0 218.0 492.0 217.4 495.1 214.3 C498.2 211.2 497.2 206.6 500.6 203.2 C504.0 199.8 510.8 197.1 515.4 194.0 C520.0 190.9 523.7 186.3 528.3 184.8 Z"/></clipPath><g clip-path="url(#fc13)"><circle cx="517.2" cy="271.8" r="6.2" fill="#8e6ccc" opacity="0.3" filter="url(#bl1)"/><circle cx="517.2" cy="271.8" r="6.2" fill="none" stroke="#3c2088" stroke-width="1.6" opacity="0.35" filter="url(#bl1)"/><circle cx="499.2" cy="255.5" r="5.1" fill="#8e6ccc" opacity="0.3" filter="url(#bl1)"/><circle cx="499.2" cy="255.5" r="5.1" fill="none" stroke="#3c2088" stroke-width="1.6" opacity="0.35" filter="url(#bl1)"/><circle cx="544.3" cy="221.6" r="6.8" fill="#8e6ccc" opacity="0.3" filter="url(#bl1)"/><circle cx="544.3" cy="221.6" r="6.8" fill="none" stroke="#3c2088" stroke-width="1.6" opacity="0.35" filter="url(#bl1)"/><circle cx="527.2" cy="201.3" r="6.6" fill="#8e6ccc" opacity="0.3" filter="url(#bl1)"/><circle cx="527.2" cy="201.3" r="6.6" fill="none" stroke="#3c2088" stroke-width="1.6" opacity="0.35" filter="url(#bl1)"/><ellipse cx="526.8" cy="200.5" rx="1.0" ry="1.1" fill="#f0e4f4" opacity="0.85"/><circle cx="483.2" cy="226.7" r="4.9" fill="#8e6ccc" opacity="0.3" filter="url(#bl1)"/><circle cx="483.2" cy="226.7" r="4.9" fill="none" stroke="#3c2088" stroke-width="1.6" opacity="0.35" filter="url(#bl1)"/><ellipse cx="483.1" cy="226.3" rx="1.3" ry="1.3" fill="#f0e4f4" opacity="0.85"/><circle cx="503.6" cy="243.7" r="5.8" fill="#8e6ccc" opacity="0.3" filter="url(#bl1)"/><circle cx="503.6" cy="243.7" r="5.8" fill="none" stroke="#3c2088" stroke-width="1.6" opacity="0.35" filter="url(#bl1)"/><ellipse cx="503.7" cy="243.3" rx="1.3" ry="1.3" fill="#f0e4f4" opacity="0.85"/><circle cx="513.4" cy="260.9" r="4.8" fill="#8e6ccc" opacity="0.3" filter="url(#bl1)"/><circle cx="513.4" cy="260.9" r="4.8" fill="none" stroke="#3c2088" stroke-width="1.6" opacity="0.35" filter="url(#bl1)"/><circle cx="526.4" cy="262.7" r="4.0" fill="#8e6ccc" opacity="0.3" filter="url(#bl1)"/><circle cx="526.4" cy="262.7" r="4.0" fill="none" stroke="#3c2088" stroke-width="1.6" opacity="0.35" filter="url(#bl1)"/><ellipse cx="526.1" cy="263.3" rx="2.0" ry="0.9" fill="#f0e4f4" opacity="0.85"/><circle cx="522.0" cy="200.2" r="3.8" fill="#8e6ccc" opacity="0.3" filter="url(#bl1)"/><circle cx="522.0" cy="200.2" r="3.8" fill="none" stroke="#3c2088" stroke-width="1.6" opacity="0.35" filter="url(#bl1)"/><ellipse cx="521.1" cy="199.8" rx="1.5" ry="1.7" fill="#f0e4f4" opacity="0.85"/><circle cx="547.6" cy="252.8" r="4.8" fill="#8e6ccc" opacity="0.3" filter="url(#bl1)"/><circle cx="547.6" cy="252.8" r="4.8" fill="none" stroke="#3c2088" stroke-width="1.6" opacity="0.35" filter="url(#bl1)"/><ellipse cx="547.4" cy="252.3" rx="1.0" ry="1.1" fill="#f0e4f4" opacity="0.85"/><circle cx="531.9" cy="205.5" r="6.6" fill="#8e6ccc" opacity="0.3" filter="url(#bl1)"/><circle cx="531.9" cy="205.5" r="6.6" fill="none" stroke="#3c2088" stroke-width="1.6" opacity="0.35" filter="url(#bl1)"/><ellipse cx="531.9" cy="206.0" rx="1.6" ry="0.9" fill="#f0e4f4" opacity="0.85"/><circle cx="517.7" cy="240.8" r="5.4" fill="#8e6ccc" opacity="0.3" filter="url(#bl1)"/><circle cx="517.7" cy="240.8" r="5.4" fill="none" stroke="#3c2088" stroke-width="1.6" opacity="0.35" filter="url(#bl1)"/><circle cx="518.8" cy="261.2" r="4.7" fill="#8e6ccc" opacity="0.3" filter="url(#bl1)"/><circle cx="518.8" cy="261.2" r="4.7" fill="none" stroke="#3c2088" stroke-width="1.6" opacity="0.35" filter="url(#bl1)"/><circle cx="572.3" cy="216.7" r="1.4" fill="#e58fd6" opacity="0.9"/><circle cx="495.0" cy="233.3" r="1.5" fill="#e58fd6" opacity="0.9"/><circle cx="542.6" cy="209.2" r="1.3" fill="#e58fd6" opacity="0.9"/><circle cx="536.9" cy="246.6" r="1.8" fill="#e58fd6" opacity="0.9"/><circle cx="497.5" cy="254.8" r="1.5" fill="#e58fd6" opacity="0.9"/><circle cx="574.3" cy="229.5" r="1.6" fill="#e58fd6" opacity="0.9"/><circle cx="520.5" cy="250.5" r="1.5" fill="#e58fd6" opacity="0.9"/><circle cx="516.4" cy="272.2" r="1.5" fill="#e58fd6" opacity="0.9"/><circle cx="526.5" cy="203.7" r="1.4" fill="#e58fd6" opacity="0.9"/><circle cx="525.1" cy="232.2" r="1.7" fill="#e58fd6" opacity="0.9"/></g><clipPath id="fc14"><path d="M635.2 197.7 C641.4 197.1 651.8 197.7 657.3 199.5 C662.8 201.3 665.0 205.4 668.4 208.8 C671.8 212.2 674.5 215.8 677.6 219.8 C680.7 223.8 684.8 228.1 686.8 232.7 C688.8 237.3 690.5 242.9 689.6 247.5 C688.7 252.1 685.1 256.7 681.3 260.4 C677.4 264.1 671.4 268.7 666.5 269.6 C661.6 270.5 656.4 266.8 651.8 265.9 C647.2 265.0 643.5 264.9 638.9 264.0 C634.3 263.1 628.4 262.5 624.1 260.4 C619.8 258.2 616.2 255.1 613.1 251.1 C610.0 247.1 605.7 241.6 605.7 236.4 C605.7 231.2 610.7 225.3 613.1 219.8 C615.5 214.3 616.7 206.9 620.4 203.2 C624.1 199.5 629.1 198.3 635.2 197.7 Z"/></clipPath><g clip-path="url(#fc14)"><circle cx="625.6" cy="206.1" r="4.8" fill="#8e6ccc" opacity="0.3" filter="url(#bl1)"/><circle cx="625.6" cy="206.1" r="4.8" fill="none" stroke="#3c2088" stroke-width="1.6" opacity="0.35" filter="url(#bl1)"/><ellipse cx="626.3" cy="205.1" rx="2.0" ry="1.0" fill="#f0e4f4" opacity="0.85"/><circle cx="667.8" cy="258.7" r="7.4" fill="#8e6ccc" opacity="0.3" filter="url(#bl1)"/><circle cx="667.8" cy="258.7" r="7.4" fill="none" stroke="#3c2088" stroke-width="1.6" opacity="0.35" filter="url(#bl1)"/><circle cx="642.3" cy="246.2" r="7.4" fill="#8e6ccc" opacity="0.3" filter="url(#bl1)"/><circle cx="642.3" cy="246.2" r="7.4" fill="none" stroke="#3c2088" stroke-width="1.6" opacity="0.35" filter="url(#bl1)"/><circle cx="660.4" cy="212.6" r="5.8" fill="#8e6ccc" opacity="0.3" filter="url(#bl1)"/><circle cx="660.4" cy="212.6" r="5.8" fill="none" stroke="#3c2088" stroke-width="1.6" opacity="0.35" filter="url(#bl1)"/><circle cx="651.4" cy="222.8" r="7.1" fill="#8e6ccc" opacity="0.3" filter="url(#bl1)"/><circle cx="651.4" cy="222.8" r="7.1" fill="none" stroke="#3c2088" stroke-width="1.6" opacity="0.35" filter="url(#bl1)"/><ellipse cx="651.1" cy="222.1" rx="1.3" ry="0.9" fill="#f0e4f4" opacity="0.85"/><circle cx="626.1" cy="255.8" r="6.9" fill="#8e6ccc" opacity="0.3" filter="url(#bl1)"/><circle cx="626.1" cy="255.8" r="6.9" fill="none" stroke="#3c2088" stroke-width="1.6" opacity="0.35" filter="url(#bl1)"/><ellipse cx="626.5" cy="256.4" rx="1.8" ry="1.4" fill="#f0e4f4" opacity="0.85"/><circle cx="668.9" cy="220.7" r="4.8" fill="#8e6ccc" opacity="0.3" filter="url(#bl1)"/><circle cx="668.9" cy="220.7" r="4.8" fill="none" stroke="#3c2088" stroke-width="1.6" opacity="0.35" filter="url(#bl1)"/><ellipse cx="668.4" cy="220.7" rx="1.6" ry="1.0" fill="#f0e4f4" opacity="0.85"/><circle cx="623.6" cy="208.9" r="6.0" fill="#8e6ccc" opacity="0.3" filter="url(#bl1)"/><circle cx="623.6" cy="208.9" r="6.0" fill="none" stroke="#3c2088" stroke-width="1.6" opacity="0.35" filter="url(#bl1)"/><circle cx="650.5" cy="244.0" r="1.4" fill="#e58fd6" opacity="0.9"/><circle cx="631.7" cy="246.8" r="1.7" fill="#e58fd6" opacity="0.9"/><circle cx="619.5" cy="225.5" r="1.4" fill="#e58fd6" opacity="0.9"/><circle cx="651.5" cy="256.7" r="1.1" fill="#e58fd6" opacity="0.9"/><circle cx="620.6" cy="210.4" r="1.8" fill="#e58fd6" opacity="0.9"/><circle cx="658.0" cy="231.9" r="1.5" fill="#e58fd6" opacity="0.9"/></g><clipPath id="hc6"><path d="M528.4 36.0 C532.9 33.8 546.8 30.7 553.9 31.0 C561.0 31.3 566.7 34.3 570.9 37.7 C575.1 41.1 578.5 47.6 579.3 51.3 C580.1 55.0 575.3 57.5 575.9 59.8 C576.5 62.1 582.7 62.9 582.7 64.9 C582.7 66.9 576.8 68.3 575.9 71.7 C575.0 75.1 578.2 81.2 577.6 85.2 C577.0 89.1 572.5 92.0 572.5 95.4 C572.5 98.8 576.0 101.6 577.6 105.6 C579.2 109.6 581.9 115.0 581.9 119.2 C581.9 123.4 577.8 128.2 577.6 131.0 C577.5 133.8 579.9 133.6 581.0 136.1 C582.1 138.7 586.1 145.2 584.4 146.3 C582.7 147.4 573.7 144.6 570.9 142.9 C568.1 141.2 567.5 138.1 567.5 136.1 C567.5 134.1 573.2 132.1 570.9 131.0 C568.6 129.9 557.9 131.4 553.9 129.4 C549.9 127.4 548.5 122.9 547.1 119.2 C545.7 115.5 546.8 109.6 545.4 107.3 C544.0 105.0 540.9 108.2 538.6 105.6 C536.3 103.1 534.0 96.5 531.8 92.0 C529.5 87.5 526.2 84.1 525.1 78.5 C524.0 72.9 524.8 63.8 525.1 58.1 C525.4 52.4 526.2 48.2 526.7 44.5 C527.2 40.8 523.9 38.2 528.4 36.0 Z"/></clipPath><g clip-path="url(#hc6)"><ellipse cx="563.7" cy="122.9" rx="1.9" ry="0.9" fill="#edebf1"/><ellipse cx="571.0" cy="118.6" rx="1.6" ry="0.7" fill="#edebf1"/><ellipse cx="548.8" cy="105.1" rx="1.7" ry="0.9" fill="#edebf1"/><ellipse cx="563.0" cy="102.3" rx="1.8" ry="1.5" fill="#edebf1"/><ellipse cx="560.0" cy="130.9" rx="0.8" ry="1.4" fill="#edebf1"/><ellipse cx="574.3" cy="95.3" rx="1.6" ry="1.2" fill="#edebf1"/><ellipse cx="576.7" cy="97.8" rx="1.4" ry="1.5" fill="#edebf1"/><ellipse cx="567.2" cy="102.0" rx="0.8" ry="1.5" fill="#edebf1"/><ellipse cx="562.2" cy="130.8" rx="0.9" ry="1.4" fill="#edebf1"/><ellipse cx="572.4" cy="127.6" rx="0.7" ry="1.0" fill="#edebf1"/><ellipse cx="549.6" cy="120.6" rx="1.2" ry="1.6" fill="#edebf1"/><ellipse cx="559.2" cy="121.5" rx="1.8" ry="0.8" fill="#edebf1"/><ellipse cx="564.7" cy="129.2" rx="1.4" ry="1.0" fill="#edebf1"/><ellipse cx="556.0" cy="122.0" rx="1.0" ry="1.2" fill="#edebf1"/><ellipse cx="564.7" cy="112.2" rx="0.9" ry="1.3" fill="#edebf1"/><ellipse cx="575.5" cy="102.4" rx="1.1" ry="1.5" fill="#edebf1"/><ellipse cx="565.4" cy="100.4" rx="0.7" ry="1.4" fill="#edebf1"/><ellipse cx="558.4" cy="108.6" rx="1.1" ry="1.2" fill="#edebf1"/><ellipse cx="569.9" cy="102.0" rx="0.8" ry="1.6" fill="#edebf1"/><ellipse cx="575.3" cy="89.9" rx="1.4" ry="1.3" fill="#edebf1"/><ellipse cx="560.1" cy="119.7" rx="1.9" ry="1.2" fill="#edebf1"/><ellipse cx="559.7" cy="97.2" rx="1.0" ry="0.8" fill="#edebf1"/><ellipse cx="551.3" cy="97.9" rx="1.8" ry="1.1" fill="#edebf1"/><ellipse cx="572.1" cy="127.6" rx="1.8" ry="0.6" fill="#edebf1"/><ellipse cx="575.8" cy="92.9" rx="1.7" ry="1.4" fill="#edebf1"/><ellipse cx="567.7" cy="106.0" rx="0.8" ry="0.7" fill="#edebf1"/><ellipse cx="567.1" cy="99.2" rx="1.4" ry="0.9" fill="#edebf1"/><ellipse cx="552.9" cy="101.4" rx="1.6" ry="1.1" fill="#edebf1"/><ellipse cx="559.8" cy="109.4" rx="1.4" ry="1.1" fill="#edebf1"/><ellipse cx="561.4" cy="129.6" rx="1.7" ry="0.8" fill="#edebf1"/><ellipse cx="557.5" cy="96.9" rx="1.2" ry="0.6" fill="#edebf1"/><ellipse cx="570.3" cy="112.9" rx="1.2" ry="1.5" fill="#edebf1"/><ellipse cx="557.9" cy="113.3" rx="1.9" ry="1.2" fill="#edebf1"/><ellipse cx="566.4" cy="104.5" rx="2.0" ry="1.4" fill="#edebf1"/><ellipse cx="557.1" cy="103.9" rx="1.5" ry="1.1" fill="#edebf1"/><ellipse cx="563.7" cy="97.1" rx="1.4" ry="1.3" fill="#edebf1"/><ellipse cx="570.9" cy="107.9" rx="1.3" ry="1.1" fill="#edebf1"/><ellipse cx="564.1" cy="108.9" rx="0.7" ry="0.9" fill="#edebf1"/><ellipse cx="577.6" cy="123.7" rx="1.3" ry="1.4" fill="#edebf1"/><ellipse cx="554.3" cy="100.2" rx="1.4" ry="1.3" fill="#edebf1"/><ellipse cx="548.8" cy="108.8" rx="1.9" ry="1.2" fill="#edebf1"/><ellipse cx="577.8" cy="93.1" rx="1.9" ry="1.4" fill="#edebf1"/><ellipse cx="548.8" cy="111.5" rx="1.7" ry="0.8" fill="#edebf1"/><ellipse cx="567.5" cy="124.7" rx="1.7" ry="1.0" fill="#edebf1"/><ellipse cx="549.8" cy="111.6" rx="0.9" ry="1.1" fill="#edebf1"/><ellipse cx="561.5" cy="50.7" rx="1.4" ry="1.4" fill="#edebf1"/><ellipse cx="578.4" cy="52.4" rx="0.7" ry="1.4" fill="#edebf1"/><ellipse cx="563.1" cy="62.2" rx="1.8" ry="0.6" fill="#edebf1"/><ellipse cx="572.5" cy="49.0" rx="1.1" ry="0.9" fill="#edebf1"/><ellipse cx="567.9" cy="47.8" rx="1.3" ry="0.9" fill="#edebf1"/><ellipse cx="558.0" cy="48.0" rx="1.6" ry="0.9" fill="#edebf1"/><ellipse cx="559.8" cy="51.2" rx="1.0" ry="1.6" fill="#edebf1"/><ellipse cx="573.9" cy="45.2" rx="1.1" ry="1.0" fill="#edebf1"/><ellipse cx="567.7" cy="51.9" rx="1.4" ry="1.4" fill="#edebf1"/><ellipse cx="558.7" cy="56.7" rx="0.9" ry="1.1" fill="#edebf1"/><ellipse cx="562.6" cy="63.5" rx="1.8" ry="1.6" fill="#edebf1"/><ellipse cx="564.8" cy="58.3" rx="0.9" ry="1.3" fill="#edebf1"/><ellipse cx="573.7" cy="53.0" rx="1.1" ry="1.4" fill="#edebf1"/><ellipse cx="573.0" cy="63.4" rx="1.1" ry="0.8" fill="#edebf1"/><ellipse cx="561.0" cy="46.3" rx="0.7" ry="0.7" fill="#edebf1"/><ellipse cx="566.8" cy="53.1" rx="1.9" ry="1.0" fill="#edebf1"/><ellipse cx="559.1" cy="67.1" rx="0.8" ry="0.9" fill="#edebf1"/><ellipse cx="573.3" cy="50.0" rx="2.0" ry="1.3" fill="#edebf1"/><ellipse cx="562.4" cy="65.2" rx="1.9" ry="1.1" fill="#edebf1"/><ellipse cx="558.4" cy="43.9" rx="1.8" ry="1.5" fill="#edebf1"/><ellipse cx="570.7" cy="62.7" rx="1.7" ry="0.8" fill="#edebf1"/><ellipse cx="560.1" cy="65.3" rx="1.8" ry="1.0" fill="#edebf1"/></g><clipPath id="hc7"><path d="M630.4 64.8 C632.2 60.7 636.0 58.7 639.5 57.2 C643.0 55.7 647.6 54.9 651.6 55.7 C655.6 56.5 660.8 61.6 663.8 61.8 C666.8 62.1 667.4 57.4 669.9 57.2 C672.4 56.9 677.0 58.3 679.0 60.3 C681.0 62.3 681.5 65.3 682.0 69.4 C682.5 73.4 681.5 80.0 682.0 84.6 C682.5 89.2 684.3 92.5 685.1 96.8 C685.9 101.1 686.6 106.6 686.6 110.4 C686.6 114.2 684.4 117.2 685.1 119.5 C685.9 121.8 689.6 121.8 691.1 124.1 C692.6 126.4 693.9 129.7 694.2 133.2 C694.5 136.7 694.2 141.8 692.7 145.4 C691.2 148.9 688.7 152.2 685.1 154.5 C681.5 156.8 676.2 158.3 671.4 159.1 C666.6 159.9 661.5 159.9 656.2 159.1 C650.9 158.3 644.1 156.8 639.5 154.5 C634.9 152.2 631.1 149.4 628.8 145.4 C626.5 141.3 625.5 134.2 625.8 130.2 C626.1 126.1 626.6 123.1 630.4 121.1 C634.2 119.1 642.5 118.5 648.6 118.0 C654.7 117.5 662.8 119.3 666.8 118.0 C670.8 116.7 672.9 112.4 672.9 110.4 C672.9 108.4 669.1 107.7 666.8 105.9 C664.5 104.1 663.0 100.8 659.2 99.8 C655.4 98.8 648.3 99.6 644.0 99.8 C639.7 100.1 636.4 102.8 633.4 101.3 C630.4 99.8 627.3 93.7 625.8 90.7 C624.3 87.7 623.8 84.6 624.3 83.1 C624.8 81.6 627.8 84.7 628.8 81.6 C629.8 78.6 628.6 68.9 630.4 64.8 Z"/></clipPath><g clip-path="url(#hc7)"><ellipse cx="643.1" cy="62.3" rx="1.2" ry="1.5" fill="#edebf1"/><ellipse cx="639.6" cy="72.3" rx="0.7" ry="1.2" fill="#edebf1"/><ellipse cx="632.1" cy="87.3" rx="1.3" ry="1.0" fill="#edebf1"/><ellipse cx="642.5" cy="71.7" rx="1.9" ry="1.5" fill="#edebf1"/><ellipse cx="668.1" cy="67.9" rx="1.0" ry="1.0" fill="#edebf1"/><ellipse cx="674.5" cy="98.6" rx="1.0" ry="1.2" fill="#edebf1"/><ellipse cx="648.7" cy="78.1" rx="1.0" ry="1.3" fill="#edebf1"/><ellipse cx="669.7" cy="98.5" rx="1.3" ry="1.0" fill="#edebf1"/><ellipse cx="662.6" cy="64.5" rx="1.8" ry="1.4" fill="#edebf1"/><ellipse cx="640.8" cy="75.9" rx="1.3" ry="1.5" fill="#edebf1"/><ellipse cx="665.0" cy="69.0" rx="1.9" ry="1.5" fill="#edebf1"/><ellipse cx="673.6" cy="79.7" rx="1.3" ry="1.0" fill="#edebf1"/><ellipse cx="679.8" cy="79.2" rx="1.9" ry="0.8" fill="#edebf1"/><ellipse cx="630.6" cy="78.8" rx="1.0" ry="0.9" fill="#edebf1"/><ellipse cx="630.9" cy="64.2" rx="1.3" ry="0.7" fill="#edebf1"/><ellipse cx="644.4" cy="84.7" rx="1.0" ry="0.9" fill="#edebf1"/><ellipse cx="648.7" cy="70.1" rx="1.4" ry="1.4" fill="#edebf1"/><ellipse cx="630.6" cy="81.5" rx="1.4" ry="1.5" fill="#edebf1"/><ellipse cx="665.6" cy="70.5" rx="1.5" ry="1.5" fill="#edebf1"/><ellipse cx="678.5" cy="91.2" rx="0.8" ry="1.0" fill="#edebf1"/><ellipse cx="653.9" cy="72.8" rx="1.7" ry="1.1" fill="#edebf1"/><ellipse cx="679.9" cy="59.3" rx="1.8" ry="0.7" fill="#edebf1"/><ellipse cx="656.0" cy="65.3" rx="1.2" ry="1.2" fill="#edebf1"/><ellipse cx="678.9" cy="60.7" rx="1.2" ry="0.7" fill="#edebf1"/><ellipse cx="667.6" cy="65.0" rx="1.0" ry="1.4" fill="#edebf1"/><ellipse cx="631.4" cy="96.2" rx="1.0" ry="1.6" fill="#edebf1"/><ellipse cx="634.5" cy="63.0" rx="1.3" ry="0.9" fill="#edebf1"/><ellipse cx="662.5" cy="71.7" rx="1.1" ry="0.6" fill="#edebf1"/><ellipse cx="633.6" cy="59.1" rx="1.3" ry="1.5" fill="#edebf1"/><ellipse cx="656.9" cy="72.6" rx="1.3" ry="1.4" fill="#edebf1"/><ellipse cx="674.3" cy="62.9" rx="1.5" ry="0.9" fill="#edebf1"/><ellipse cx="677.3" cy="89.4" rx="1.5" ry="1.3" fill="#edebf1"/><ellipse cx="668.6" cy="62.0" rx="1.1" ry="0.6" fill="#edebf1"/><ellipse cx="637.0" cy="98.0" rx="1.4" ry="0.8" fill="#edebf1"/><ellipse cx="644.3" cy="76.6" rx="0.8" ry="1.4" fill="#edebf1"/><ellipse cx="648.8" cy="61.4" rx="1.4" ry="1.0" fill="#edebf1"/><ellipse cx="668.7" cy="70.1" rx="1.0" ry="1.1" fill="#edebf1"/><ellipse cx="650.0" cy="64.4" rx="1.7" ry="1.5" fill="#edebf1"/><ellipse cx="672.2" cy="86.6" rx="1.3" ry="1.4" fill="#edebf1"/><ellipse cx="640.0" cy="63.2" rx="1.0" ry="1.1" fill="#edebf1"/><ellipse cx="639.8" cy="77.3" rx="1.8" ry="1.2" fill="#edebf1"/><ellipse cx="639.3" cy="64.1" rx="0.7" ry="0.7" fill="#edebf1"/><ellipse cx="642.6" cy="88.9" rx="1.8" ry="1.0" fill="#edebf1"/><ellipse cx="631.4" cy="82.5" rx="1.9" ry="0.6" fill="#edebf1"/><ellipse cx="661.7" cy="100.9" rx="1.1" ry="1.2" fill="#edebf1"/><ellipse cx="671.2" cy="87.0" rx="0.9" ry="1.4" fill="#edebf1"/><ellipse cx="659.5" cy="86.7" rx="1.5" ry="1.4" fill="#edebf1"/><ellipse cx="658.7" cy="97.8" rx="0.8" ry="0.6" fill="#edebf1"/><ellipse cx="636.2" cy="80.3" rx="1.6" ry="1.5" fill="#edebf1"/><ellipse cx="629.4" cy="59.3" rx="1.2" ry="1.3" fill="#edebf1"/><ellipse cx="649.7" cy="70.8" rx="1.0" ry="1.3" fill="#edebf1"/><ellipse cx="660.5" cy="99.0" rx="1.1" ry="1.1" fill="#edebf1"/><ellipse cx="679.0" cy="88.4" rx="1.0" ry="1.3" fill="#edebf1"/><ellipse cx="652.3" cy="62.8" rx="0.8" ry="1.1" fill="#edebf1"/><ellipse cx="645.2" cy="69.9" rx="1.6" ry="0.9" fill="#edebf1"/><ellipse cx="652.5" cy="80.4" rx="0.7" ry="1.4" fill="#edebf1"/><ellipse cx="642.9" cy="65.8" rx="1.4" ry="0.8" fill="#edebf1"/><ellipse cx="630.7" cy="63.8" rx="0.8" ry="1.0" fill="#edebf1"/><ellipse cx="646.0" cy="67.8" rx="0.9" ry="1.4" fill="#edebf1"/><ellipse cx="658.9" cy="84.5" rx="0.7" ry="1.5" fill="#edebf1"/><ellipse cx="630.7" cy="91.1" rx="1.5" ry="1.0" fill="#edebf1"/><ellipse cx="646.4" cy="81.7" rx="1.5" ry="1.4" fill="#edebf1"/><ellipse cx="632.0" cy="62.7" rx="1.5" ry="0.9" fill="#edebf1"/><ellipse cx="659.2" cy="75.1" rx="0.7" ry="1.4" fill="#edebf1"/><ellipse cx="638.7" cy="73.0" rx="1.7" ry="1.5" fill="#edebf1"/><ellipse cx="673.5" cy="98.0" rx="1.1" ry="0.8" fill="#edebf1"/><ellipse cx="652.9" cy="93.8" rx="1.5" ry="1.2" fill="#edebf1"/><ellipse cx="665.7" cy="68.1" rx="1.4" ry="1.0" fill="#edebf1"/><ellipse cx="674.8" cy="72.0" rx="1.4" ry="1.2" fill="#edebf1"/><ellipse cx="665.7" cy="92.1" rx="1.7" ry="0.7" fill="#edebf1"/><ellipse cx="688.2" cy="102.1" rx="1.7" ry="0.9" fill="#edebf1"/><ellipse cx="667.4" cy="111.9" rx="0.8" ry="0.8" fill="#edebf1"/><ellipse cx="688.2" cy="125.4" rx="1.2" ry="1.1" fill="#edebf1"/><ellipse cx="679.4" cy="110.5" rx="0.9" ry="1.0" fill="#edebf1"/><ellipse cx="685.3" cy="129.8" rx="1.5" ry="1.4" fill="#edebf1"/><ellipse cx="675.0" cy="124.6" rx="1.8" ry="1.5" fill="#edebf1"/><ellipse cx="669.6" cy="116.7" rx="0.8" ry="1.2" fill="#edebf1"/><ellipse cx="676.3" cy="118.7" rx="1.4" ry="0.9" fill="#edebf1"/><ellipse cx="668.4" cy="110.6" rx="1.7" ry="0.9" fill="#edebf1"/><ellipse cx="688.2" cy="126.2" rx="1.0" ry="1.1" fill="#edebf1"/><ellipse cx="684.2" cy="101.3" rx="1.7" ry="1.0" fill="#edebf1"/><ellipse cx="681.2" cy="101.3" rx="1.5" ry="0.7" fill="#edebf1"/><ellipse cx="671.8" cy="119.4" rx="1.5" ry="1.0" fill="#edebf1"/><ellipse cx="671.2" cy="111.9" rx="1.1" ry="0.8" fill="#edebf1"/><ellipse cx="670.9" cy="115.9" rx="1.7" ry="1.4" fill="#edebf1"/><ellipse cx="674.5" cy="129.3" rx="1.2" ry="1.4" fill="#edebf1"/><ellipse cx="684.5" cy="123.6" rx="1.9" ry="1.2" fill="#edebf1"/><ellipse cx="686.1" cy="109.2" rx="1.4" ry="1.2" fill="#edebf1"/><ellipse cx="677.8" cy="102.8" rx="1.0" ry="1.2" fill="#edebf1"/><ellipse cx="673.8" cy="122.1" rx="1.7" ry="1.2" fill="#edebf1"/><ellipse cx="668.2" cy="114.4" rx="1.9" ry="0.9" fill="#edebf1"/><ellipse cx="667.2" cy="124.1" rx="1.2" ry="0.8" fill="#edebf1"/><ellipse cx="677.3" cy="128.4" rx="1.4" ry="0.8" fill="#edebf1"/><ellipse cx="665.2" cy="113.7" rx="1.0" ry="1.6" fill="#edebf1"/><ellipse cx="686.2" cy="130.3" rx="1.9" ry="0.9" fill="#edebf1"/><ellipse cx="680.3" cy="117.6" rx="1.4" ry="1.1" fill="#edebf1"/><ellipse cx="670.2" cy="105.7" rx="0.8" ry="1.3" fill="#edebf1"/><ellipse cx="669.0" cy="126.9" rx="1.5" ry="0.9" fill="#edebf1"/><ellipse cx="686.5" cy="103.8" rx="1.0" ry="1.4" fill="#edebf1"/><ellipse cx="673.9" cy="128.2" rx="1.3" ry="0.6" fill="#edebf1"/><ellipse cx="687.3" cy="130.6" rx="1.3" ry="1.3" fill="#edebf1"/><ellipse cx="681.4" cy="104.0" rx="1.7" ry="1.1" fill="#edebf1"/><ellipse cx="681.7" cy="101.1" rx="1.2" ry="0.8" fill="#edebf1"/><ellipse cx="687.2" cy="101.9" rx="0.7" ry="0.9" fill="#edebf1"/><ellipse cx="684.6" cy="106.8" rx="1.6" ry="1.4" fill="#edebf1"/><ellipse cx="679.3" cy="112.6" rx="1.7" ry="0.7" fill="#edebf1"/><ellipse cx="671.4" cy="126.9" rx="1.0" ry="0.9" fill="#edebf1"/><ellipse cx="668.3" cy="117.0" rx="1.9" ry="0.7" fill="#edebf1"/><ellipse cx="677.3" cy="127.8" rx="0.8" ry="1.1" fill="#edebf1"/><ellipse cx="672.2" cy="117.5" rx="1.9" ry="1.5" fill="#edebf1"/><ellipse cx="664.6" cy="124.1" rx="1.4" ry="1.5" fill="#edebf1"/><ellipse cx="661.5" cy="125.8" rx="1.2" ry="1.5" fill="#edebf1"/><ellipse cx="663.4" cy="123.8" rx="1.2" ry="1.1" fill="#edebf1"/><ellipse cx="660.8" cy="138.4" rx="1.0" ry="1.1" fill="#edebf1"/><ellipse cx="665.5" cy="141.1" rx="2.0" ry="1.1" fill="#edebf1"/><ellipse cx="667.0" cy="129.1" rx="1.5" ry="0.8" fill="#edebf1"/><ellipse cx="654.4" cy="125.6" rx="1.4" ry="0.9" fill="#edebf1"/><ellipse cx="658.7" cy="132.8" rx="1.9" ry="1.5" fill="#edebf1"/><ellipse cx="661.6" cy="123.8" rx="1.6" ry="1.5" fill="#edebf1"/><ellipse cx="657.3" cy="131.9" rx="1.1" ry="1.6" fill="#edebf1"/><ellipse cx="686.1" cy="125.1" rx="1.9" ry="0.7" fill="#edebf1"/><ellipse cx="661.8" cy="142.5" rx="1.1" ry="1.6" fill="#edebf1"/><ellipse cx="673.2" cy="134.8" rx="1.9" ry="1.3" fill="#edebf1"/><ellipse cx="664.3" cy="129.5" rx="1.2" ry="0.8" fill="#edebf1"/><ellipse cx="664.3" cy="136.6" rx="1.3" ry="0.7" fill="#edebf1"/><ellipse cx="681.5" cy="135.6" rx="1.9" ry="1.2" fill="#edebf1"/><ellipse cx="665.0" cy="138.9" rx="1.6" ry="1.2" fill="#edebf1"/><ellipse cx="674.1" cy="128.2" rx="1.1" ry="0.6" fill="#edebf1"/></g><clipPath id="hc3"><path d="M355.0 24.2 C360.7 24.5 371.9 28.8 378.7 31.0 C385.5 33.2 390.1 35.4 395.7 37.7 C401.4 39.9 408.4 41.1 412.6 44.5 C416.8 47.9 420.2 52.4 421.1 58.1 C422.0 63.8 420.5 73.4 417.7 78.5 C414.9 83.6 410.7 84.9 404.2 88.6 C397.7 92.3 385.2 99.7 378.7 100.5 C372.2 101.3 370.2 96.2 365.1 93.7 C360.0 91.1 352.7 88.6 348.2 85.2 C343.7 81.8 340.8 78.2 338.0 73.4 C335.2 68.6 331.8 61.8 331.2 56.4 C330.6 51.0 332.3 45.6 334.6 41.1 C336.9 36.6 341.4 32.1 344.8 29.3 C348.2 26.5 349.3 23.9 355.0 24.2 Z"/></clipPath><g clip-path="url(#hc3)"><ellipse cx="401.5" cy="50.8" rx="0.9" ry="1.5" fill="#edebf1"/><ellipse cx="416.3" cy="45.8" rx="0.9" ry="0.7" fill="#edebf1"/><ellipse cx="407.6" cy="57.5" rx="1.3" ry="1.4" fill="#edebf1"/><ellipse cx="395.7" cy="45.9" rx="1.0" ry="0.6" fill="#edebf1"/><ellipse cx="388.2" cy="61.0" rx="0.9" ry="0.7" fill="#edebf1"/><ellipse cx="408.1" cy="45.9" rx="1.4" ry="0.6" fill="#edebf1"/><ellipse cx="389.8" cy="50.0" rx="1.9" ry="0.8" fill="#edebf1"/><ellipse cx="392.5" cy="57.8" rx="1.7" ry="1.1" fill="#edebf1"/><ellipse cx="410.6" cy="46.1" rx="1.0" ry="0.9" fill="#edebf1"/><ellipse cx="396.7" cy="52.4" rx="1.7" ry="1.4" fill="#edebf1"/><ellipse cx="408.5" cy="42.1" rx="1.6" ry="0.8" fill="#edebf1"/><ellipse cx="392.2" cy="48.5" rx="2.0" ry="1.0" fill="#edebf1"/><ellipse cx="409.0" cy="58.0" rx="1.5" ry="0.8" fill="#edebf1"/><ellipse cx="408.3" cy="55.4" rx="1.1" ry="0.7" fill="#edebf1"/></g><clipPath id="hc10"><path d="M218.4 210.1 C220.2 209.2 222.8 210.4 227.2 211.9 C231.6 213.4 240.8 216.0 244.9 218.9 C249.0 221.8 249.5 226.0 251.9 229.5 C254.2 233.0 257.5 236.0 259.0 240.1 C260.5 244.2 260.4 250.1 260.7 254.2 C261.0 258.3 262.2 261.0 260.7 264.8 C259.2 268.6 255.7 273.6 251.9 277.1 C248.1 280.6 242.8 283.8 237.8 285.9 C232.8 287.9 226.0 290.0 221.9 289.4 C217.8 288.8 214.9 285.3 213.1 282.4 C211.4 279.5 210.5 275.0 211.4 271.8 C212.3 268.6 215.8 265.3 218.4 263.0 C221.0 260.7 225.7 260.9 227.2 257.7 C228.7 254.5 228.1 248.3 227.2 243.6 C226.3 238.9 223.7 233.9 221.9 229.5 C220.1 225.1 217.2 220.4 216.6 217.2 C216.0 214.0 216.6 211.0 218.4 210.1 Z"/></clipPath><g clip-path="url(#hc10)"><ellipse cx="216.9" cy="245.3" rx="1.9" ry="0.6" fill="#edebf1"/><ellipse cx="222.2" cy="249.7" rx="1.8" ry="1.4" fill="#edebf1"/><ellipse cx="218.4" cy="229.8" rx="0.8" ry="1.0" fill="#edebf1"/><ellipse cx="227.2" cy="225.8" rx="2.0" ry="0.9" fill="#edebf1"/><ellipse cx="223.4" cy="238.5" rx="1.4" ry="1.3" fill="#edebf1"/><ellipse cx="223.6" cy="250.3" rx="1.5" ry="1.6" fill="#edebf1"/><ellipse cx="228.6" cy="254.0" rx="1.9" ry="1.3" fill="#edebf1"/><ellipse cx="222.3" cy="222.1" rx="1.0" ry="1.1" fill="#edebf1"/><ellipse cx="227.4" cy="235.6" rx="0.8" ry="0.9" fill="#edebf1"/><ellipse cx="224.2" cy="222.0" rx="1.9" ry="0.9" fill="#edebf1"/><ellipse cx="217.7" cy="255.1" rx="1.3" ry="0.8" fill="#edebf1"/><ellipse cx="217.4" cy="237.6" rx="1.9" ry="0.9" fill="#edebf1"/><ellipse cx="221.4" cy="252.8" rx="1.5" ry="1.4" fill="#edebf1"/><ellipse cx="216.0" cy="252.7" rx="2.0" ry="1.0" fill="#edebf1"/><ellipse cx="228.1" cy="219.6" rx="1.0" ry="1.5" fill="#edebf1"/><ellipse cx="219.3" cy="231.1" rx="1.1" ry="0.7" fill="#edebf1"/></g><path d="M0 0.5 L805 0.5 M0.5 0 L0.5 313 M0 312.5 L805 312.5" fill="none" stroke="#000" stroke-width="1"/><path d="M0 0.5 L805 0.5 M0.5 0 L0.5 313 M0 312.5 L805 312.5" fill="none" stroke="#f2f200" stroke-width="1" stroke-dasharray="4 4"/></svg>
<div class="a" style="left:1021.5px;top:24px;width:226.5px;height:831px;background:#454545;"></div>
<div class="a" style="left:1021px;top:59.5px;width:1px;height:796px;background:#5a5a5a;"></div>
<div class="a" style="left:1024px;top:24px;width:1px;height:831px;background:#5a5a5a;"></div>
<div class="a" style="left:1022px;top:431px;width:2px;height:4px;background:#c8c8c8;"></div>
<div class="a" style="left:1022px;top:438px;width:2px;height:4px;background:#c8c8c8;"></div>
<div class="a" style="left:1022px;top:445px;width:2px;height:4px;background:#c8c8c8;"></div>
<div class="a" style="left:1025px;top:26.5px;width:137.5px;height:20.5px;background:#242424;"></div>
<div class="a" style="left:1049px;top:26.5px;width:1px;height:20.5px;background:#363636;"></div>
<div class="a" style="left:1072.5px;top:26.5px;width:1px;height:20.5px;background:#363636;"></div>
<div class="a" style="left:1097.5px;top:26.5px;width:1px;height:20.5px;background:#363636;"></div>
<div class="a" style="left:1119px;top:26.5px;width:1px;height:20.5px;background:#363636;"></div>
<div class="a" style="left:1141.5px;top:26.5px;width:1px;height:20.5px;background:#363636;"></div>
<div class="a" style="left:1162.5px;top:24.5px;width:23.5px;height:23px;background:#3c3c3c;border:1px solid #5a5a5a;border-bottom:none"></div>
<div class="a" style="left:1025px;top:47px;width:137.5px;height:1px;background:#5a5a5a;"></div>
<div class="a" style="left:1186px;top:47px;width:62px;height:1px;background:#5a5a5a;"></div>
<div class="a" style="left:1028.2px;top:28.2px;width:17.6px;height:17.6px;background:#000;"></div>
<div class="a" style="left:1029.3px;top:29.3px;width:15.4px;height:15.4px;background:#fff;"></div>
<div class="a" style="left:1036px;top:36px;width:1.2px;height:1.2px;background:#000;"></div>
<div class="a" style="left:1052px;top:28.2px;width:17.6px;height:17.6px;background:#000;"></div>
<div class="a" style="left:1053.3px;top:29.5px;width:15px;height:15px;background:linear-gradient(90deg,#f9b45e 0%,#fcc676 20%,#f5ae58 40%,#fbc473 60%,#f3aa52 80%,#fbc070 100%)"></div>
<div class="a" style="left:1076.2px;top:28.2px;width:17.4px;height:17.6px;background:#000;"></div>
<div class="a" style="left:1077.3px;top:29.3px;width:15.2px;height:15.4px;background:#fff;"></div>
<div class="a tx" style="left:1077.8px;top:33px;font-size:11.5px;color:#000;letter-spacing:-0.4px;-webkit-text-stroke:0">Aa</div>
<div class="a" style="left:1103.8px;top:28.5px;width:8px;height:17px;background:#000;"></div>
<div class="a" style="left:1104.8px;top:29.5px;width:6px;height:15px;background:#e4dcf2;"></div>
<svg class="a" style="left:1104.8px;top:29.5px;" width="6" height="15" viewBox="0 0 6 15"><g fill="#8058c4"><circle cx="1.5" cy="2" r="0.9"/><circle cx="4.5" cy="3.5" r="1"/><circle cx="2" cy="6" r="1"/><circle cx="4.2" cy="8" r="0.9"/><circle cx="1.8" cy="10.5" r="1"/><circle cx="4.5" cy="12.5" r="1"/><circle cx="2" cy="14" r="0.8"/></g></svg>
<svg class="a" style="left:1122px;top:28px;" width="18" height="18" viewBox="0 0 18 18"><path d="M9 1.5 L16.5 16.5 L9 12.5 L1.5 16.5 Z" fill="#b8b8b8"/></svg>
<svg class="a" style="left:1143px;top:28px;" width="18" height="18" viewBox="0 0 18 18"><rect x="2" y="2" width="14" height="14" fill="#4a4a4a"/><rect x="1.5" y="1.5" width="15" height="15" fill="none" stroke="#e6e6e6" stroke-width="1.2" stroke-dasharray="1.3 1.3"/></svg>
<svg class="a" style="left:1164px;top:28px;" width="18" height="18" viewBox="0 0 18 18"><path d="M16 2 C14.5 5 11 9.5 8.5 12 L7 10.5 C9.5 8 13 4 16 2 Z" fill="#c3c3c3"/><path d="M7.2 11 C8.2 12.5 7.5 15 5.5 16 C4 16.8 2 16.5 1 16.3 C2.5 15.5 3 14 3.5 12.5 C4 11 6 10.2 7.2 11 Z" fill="#c3c3c3"/></svg>
<svg class="a" style="left:1235px;top:31px;" width="11" height="10" viewBox="0 0 11 10"><rect x="0.5" y="0.5" width="10" height="9" fill="#3c3c3c" stroke="#d0d0d0" stroke-width="1"/><path d="M3 5 L8 2.2 L8 7.8 Z" fill="#d0d0d0"/></svg>
<div class="a" style="left:1025px;top:48px;width:223px;height:519px;background:#3a3a3a;"></div>
<div class="a" style="left:1029px;top:52px;width:217px;height:14px;background:#1f1f1f;"></div>
<div class="a tx" style="left:1031.3px;top:54px;font-size:10.5px;color:#dcdcdc;">Pixel (1x1 square)</div>
<div class="a" style="left:1027.5px;top:69px;width:219.5px;height:372.5px;background:#fff;border:1px solid #1e1e1e"></div>
<div class="a" style="left:1136.5px;top:253.5px;width:1px;height:1px;background:#555;"></div>
<div class="a tx" style="left:1027.4px;top:451px;font-size:10.3px;color:#b8b8b8;">Shape:</div>
<div class="a" style="left:1063.3px;top:443.4px;width:25.5px;height:25px;background:#2b2b2b;border:1px solid #1a1a1a;border-radius:3px"></div>
<svg class="a" style="left:1068px;top:450px;" width="80" height="14" viewBox="0 0 80 14"><defs><pattern id="chk" width="2" height="2" patternUnits="userSpaceOnUse"><rect width="2" height="2" fill="#cfcfcf"/><rect width="1" height="1" fill="#a8a8a8"/><rect x="1" y="1" width="1" height="1" fill="#a8a8a8"/></pattern></defs>
<circle cx="8" cy="6.3" r="6.2" fill="url(#chk)"/>
<rect x="27.6" y="0" width="12.4" height="12.4" fill="url(#chk)"/>
<path d="M60 -0.5 L67 6.5 L60 13.5 L53 6.5 Z" fill="url(#chk)"/></svg>
<div class="a" style="left:1027.7px;top:471.5px;width:218.3px;height:13px;background:#363636;border:1px solid #3f3f3f"></div>
<svg class="a" style="left:1233.5px;top:472.0px;" width="14" height="13" viewBox="0 0 14 13"><rect width="14" height="13" fill="#404040"/><path d="M3.7 5.0 L7.0 1.9000000000000004 L10.3 5.0" fill="none" stroke="#4e4e4e" stroke-width="1.6"/><path d="M3.7 8.0 L7.0 11.1 L10.3 8.0" fill="none" stroke="#4e4e4e" stroke-width="1.6"/></svg>
<div class="a tx" style="left:1029.5px;top:473.5px;font-size:10.3px;color:#4a4a4a;">Radius</div>
<div class="a tx" style="right:16.5px;top:473.5px;font-size:10.3px;color:#4a4a4a;">0.1</div>
<div class="a" style="left:1027.7px;top:487.5px;width:218.3px;height:13px;background:#363636;border:1px solid #3f3f3f"></div>
<svg class="a" style="left:1233.5px;top:488.0px;" width="14" height="13" viewBox="0 0 14 13"><rect width="14" height="13" fill="#404040"/><path d="M3.7 5.0 L7.0 1.9000000000000004 L10.3 5.0" fill="none" stroke="#4e4e4e" stroke-width="1.6"/><path d="M3.7 8.0 L7.0 11.1 L10.3 8.0" fill="none" stroke="#4e4e4e" stroke-width="1.6"/></svg>
<div class="a tx" style="left:1029.5px;top:489.5px;font-size:10.3px;color:#4a4a4a;">Spikes</div>
<div class="a tx" style="right:16.5px;top:489.5px;font-size:10.3px;color:#4a4a4a;">2</div>
<div class="a" style="left:1027.7px;top:503.5px;width:218.3px;height:13px;background:#363636;border:1px solid #3f3f3f"></div>
<svg class="a" style="left:1233.5px;top:504.0px;" width="14" height="13" viewBox="0 0 14 13"><rect width="14" height="13" fill="#404040"/><path d="M3.7 5.0 L7.0 1.9000000000000004 L10.3 5.0" fill="none" stroke="#4e4e4e" stroke-width="1.6"/><path d="M3.7 8.0 L7.0 11.1 L10.3 8.0" fill="none" stroke="#4e4e4e" stroke-width="1.6"/></svg>
<div class="a tx" style="left:1029.5px;top:505.5px;font-size:10.3px;color:#4a4a4a;">Hardness</div>
<div class="a tx" style="right:16.5px;top:505.5px;font-size:10.3px;color:#4a4a4a;">0.00</div>
<div class="a" style="left:1027.7px;top:519.3px;width:218.3px;height:13px;background:#363636;border:1px solid #3f3f3f"></div>
<svg class="a" style="left:1233.5px;top:519.8px;" width="14" height="13" viewBox="0 0 14 13"><rect width="14" height="13" fill="#404040"/><path d="M3.7 5.0 L7.0 1.9000000000000004 L10.3 5.0" fill="none" stroke="#4e4e4e" stroke-width="1.6"/><path d="M3.7 8.0 L7.0 11.1 L10.3 8.0" fill="none" stroke="#4e4e4e" stroke-width="1.6"/></svg>
<div class="a tx" style="left:1029.5px;top:521.3px;font-size:10.3px;color:#4a4a4a;">Aspect ratio</div>
<div class="a tx" style="right:16.5px;top:521.3px;font-size:10.3px;color:#4a4a4a;">1.0</div>
<div class="a" style="left:1027.7px;top:535.3px;width:218.3px;height:13px;background:#363636;border:1px solid #3f3f3f"></div>
<svg class="a" style="left:1233.5px;top:535.8px;" width="14" height="13" viewBox="0 0 14 13"><rect width="14" height="13" fill="#404040"/><path d="M3.7 5.0 L7.0 1.9000000000000004 L10.3 5.0" fill="none" stroke="#4e4e4e" stroke-width="1.6"/><path d="M3.7 8.0 L7.0 11.1 L10.3 8.0" fill="none" stroke="#4e4e4e" stroke-width="1.6"/></svg>
<div class="a tx" style="left:1029.5px;top:537.3px;font-size:10.3px;color:#4a4a4a;">Angle</div>
<div class="a tx" style="right:16.5px;top:537.3px;font-size:10.3px;color:#4a4a4a;">0.0</div>
<div class="a" style="left:1027.7px;top:551.2px;width:218.3px;height:13px;background:#363636;border:1px solid #3f3f3f"></div>
<svg class="a" style="left:1233.5px;top:551.7px;" width="14" height="13" viewBox="0 0 14 13"><rect width="14" height="13" fill="#404040"/><path d="M3.7 5.0 L7.0 1.9000000000000004 L10.3 5.0" fill="none" stroke="#4e4e4e" stroke-width="1.6"/><path d="M3.7 8.0 L7.0 11.1 L10.3 8.0" fill="none" stroke="#4e4e4e" stroke-width="1.6"/></svg>
<div class="a" style="left:1028.7px;top:552.2px;width:47px;height:11px;background:#555;"></div>
<div class="a" style="left:1075.7px;top:552.2px;width:1px;height:11px;background:#0a0a0a;"></div>
<div class="a tx" style="left:1029.5px;top:553.2px;font-size:10.3px;color:#d8d8d8;">Spacing</div>
<div class="a tx" style="right:16.5px;top:553.2px;font-size:10.3px;color:#4a4a4a;">50.0</div>
<div class="a" style="left:1025px;top:566.5px;width:223px;height:1px;background:#5a5a5a;"></div>
<div class="a" style="left:1128px;top:568px;width:5px;height:2.5px;background:#b8b8b8;"></div>
<div class="a" style="left:1134.5px;top:568px;width:5px;height:2.5px;background:#b8b8b8;"></div>
<div class="a" style="left:1141px;top:568px;width:5px;height:2.5px;background:#b8b8b8;"></div>
<div class="a" style="left:1081px;top:573.7px;width:118px;height:20.3px;background:#242424;"></div>
<div class="a" style="left:1148px;top:573.7px;width:1px;height:20.3px;background:#363636;"></div>
<div class="a" style="left:1024.6px;top:571px;width:56.5px;height:23.5px;background:#3c3c3c;border:1px solid #5a5a5a;border-bottom:none"></div>
<div class="a" style="left:1081px;top:594px;width:167px;height:1px;background:#5a5a5a;"></div>
<svg class="a" style="left:1027px;top:575px;" width="17" height="17" viewBox="0 0 17 17"><path d="M4 1 L17 1 L13 5 L0 5 Z M4 6.5 L17 6.5 L13 10.5 L0 10.5 Z M4 12 L17 12 L13 16 L0 16 Z" fill="#c3c3c3"/></svg>
<div class="a tx" style="left:1045px;top:577px;font-size:10.5px;color:#dcdcdc;">Layers</div>
<svg class="a" style="left:1082px;top:576px;" width="17" height="17" viewBox="0 0 17 17"><rect x="0.7" y="0.7" width="15.6" height="15.6" fill="none" stroke="#c3c3c3" stroke-width="1.3"/><rect x="3.5" y="3" width="2" height="11" fill="#6a6a6a"/><rect x="7.5" y="3" width="2" height="11" fill="#9a9a9a"/><rect x="11.5" y="3" width="2" height="11" fill="#c3c3c3"/></svg>
<div class="a tx" style="left:1100px;top:577px;font-size:10.5px;color:#c8c8c8;">Channels</div>
<svg class="a" style="left:1150px;top:576px;" width="17" height="17" viewBox="0 0 17 17"><rect x="0" y="3" width="4" height="4" fill="#c3c3c3"/><rect x="13" y="3" width="4" height="4" fill="#c3c3c3"/><rect x="6" y="3.5" width="5" height="3" fill="#c3c3c3"/><path d="M4 5 L13 5" stroke="#c3c3c3" stroke-width="1.5"/><path d="M2.5 15 C3 9 14 9 14.5 15" fill="none" stroke="#c3c3c3" stroke-width="2"/></svg>
<div class="a tx" style="left:1168.4px;top:577px;font-size:10.5px;color:#c8c8c8;">Paths</div>
<svg class="a" style="left:1234.7px;top:577.8px;" width="11" height="10" viewBox="0 0 11 10"><rect x="0.5" y="0.5" width="10" height="9" fill="#3c3c3c" stroke="#d0d0d0" stroke-width="1"/><path d="M3 5 L8 2.2 L8 7.8 Z" fill="#d0d0d0"/></svg>
<div class="a" style="left:1025px;top:595px;width:223px;height:260px;background:#3a3a3a;"></div>
<div class="a" style="left:1027.3px;top:597.2px;width:173px;height:25px;background:#2b2b2b;border:1px solid #1c1c1c;border-radius:4px"></div>
<div class="a tx" style="left:1034px;top:604px;font-size:10.3px;color:#dcdcdc;">Mode</div>
<div class="a tx" style="left:1143px;top:604px;font-size:10.3px;color:#dcdcdc;">Normal</div>
<svg class="a" style="left:1182px;top:606px;" width="12" height="8" viewBox="0 0 12 8"><path d="M1 1.2 L6 6.2 L11 1.2" fill="none" stroke="#dcdcdc" stroke-width="1.6"/></svg>
<div class="a" style="left:1202.5px;top:597.2px;width:46px;height:25px;background:#2b2b2b;border:1px solid #1c1c1c;border-radius:4px"></div>
<svg class="a" style="left:1207px;top:602px;" width="16" height="16" viewBox="0 0 16 16"><path d="M4.3 7.6 A5.7 5.7 0 1 1 9.3 13.6" fill="none" stroke="#c8c8c8" stroke-width="1.7"/><path d="M0.6 6.4 L8 6.4 L4.3 10.6 Z" fill="#c8c8c8"/><circle cx="4.3" cy="14.4" r="2.5" fill="#c8c8c8"/></svg>
<svg class="a" style="left:1229px;top:606px;" width="12" height="8" viewBox="0 0 12 8"><path d="M1 1.2 L6 6.2 L11 1.2" fill="none" stroke="#dcdcdc" stroke-width="1.6"/></svg>
<div class="a" style="left:1027px;top:623.8px;width:221px;height:14px;background:#555;border:1px solid #8a8a8a;border-right:none"></div>
<div class="a" style="left:1233px;top:624.8px;width:1.5px;height:12px;background:#111;"></div>
<svg class="a" style="left:1234.5px;top:624.8px;" width="12" height="12" viewBox="0 0 12 12"><rect width="12" height="12" fill="#3f3f3f"/><path d="M2.7 4.5 L6.0 1.4000000000000004 L9.3 4.5" fill="none" stroke="#6e6e6e" stroke-width="1.6"/><path d="M2.7 7.5 L6.0 10.6 L9.3 7.5" fill="none" stroke="#c8c8c8" stroke-width="1.6"/></svg>
<div class="a tx" style="left:1028.5px;top:626px;font-size:10.3px;color:#dcdcdc;">Opacity</div>
<div class="a tx" style="right:16.59999999999991px;top:626px;font-size:10.3px;color:#dcdcdc;">100.0</div>
<div class="a tx" style="left:1027.5px;top:645.5px;font-size:10.3px;color:#dcdcdc;">Lock:</div>
<svg class="a" style="left:1058px;top:643px;" width="72" height="18" viewBox="0 0 72 18"><path d="M15 1.5 C13.5 4.5 10 9 7.5 11.5 L6 10 C8.5 7.5 12 3.5 15 1.5 Z" fill="#c3c3c3"/><path d="M6.2 10.5 C7.2 12 6.5 14.5 4.5 15.5 C3 16.3 1 16 0 15.8 C1.5 15 2 13.5 2.5 12 C3 10.5 5 9.7 6.2 10.5 Z" fill="#c3c3c3"/>
<path d="M35 1 L38.5 4.5 L36 4.5 L36 8 L39.5 8 L39.5 5.5 L43 9 L39.5 12.5 L39.5 10 L36 10 L36 13.5 L38.5 13.5 L35 17 L31.5 13.5 L34 13.5 L34 10 L30.5 10 L30.5 12.5 L27 9 L30.5 5.5 L30.5 8 L34 8 L34 4.5 L31.5 4.5 Z" fill="#c3c3c3"/>
<g transform="translate(54 1)"><rect width="16" height="16" fill="#7a7a7a"/><g fill="#d0d0d0"><rect x="0" y="0" width="4" height="4"/><rect x="8" y="0" width="4" height="4"/><rect x="4" y="4" width="4" height="4"/><rect x="12" y="4" width="4" height="4"/><rect x="0" y="8" width="4" height="4"/><rect x="8" y="8" width="4" height="4"/><rect x="4" y="12" width="4" height="4"/><rect x="12" y="12" width="4" height="4"/></g></g></svg>
<div class="a" style="left:1028px;top:667px;width:218px;height:159.5px;background:#2e2e2e;"></div>
<div class="a" style="left:1028px;top:667px;width:218px;height:25px;background:#474747;"></div>
<div class="a" style="left:1055.3px;top:667px;width:1.5px;height:25px;background:#3a3a3a;"></div>
<div class="a" style="left:1083.5px;top:667px;width:1.5px;height:25px;background:#3a3a3a;"></div>
<div class="a" style="left:1028px;top:692px;width:218px;height:1px;background:#383838;"></div>
<div class="a" style="left:1028px;top:720.7px;width:218px;height:27.6px;background:#1f1f1f;"></div>
<svg class="a" style="left:1034px;top:673px;" width="19" height="14" viewBox="0 0 19 14"><path d="M0.5 7 C3 2.5 6 1 9.5 1 C13 1 16 2.5 18.5 7 C16 11.5 13 13 9.5 13 C6 13 3 11.5 0.5 7 Z" fill="none" stroke="#c3c3c3" stroke-width="1.6"/><circle cx="9.5" cy="7" r="3.7" fill="#c3c3c3"/><circle cx="8.3" cy="5.8" r="1.2" fill="#2e2e2e"/></svg>
<svg class="a" style="left:1032.5px;top:700px;" width="19" height="14" viewBox="0 0 19 14"><path d="M0.5 7 C3 2.5 6 1 9.5 1 C13 1 16 2.5 18.5 7 C16 11.5 13 13 9.5 13 C6 13 3 11.5 0.5 7 Z" fill="none" stroke="#c3c3c3" stroke-width="1.6"/><circle cx="9.5" cy="7" r="3.7" fill="#c3c3c3"/><circle cx="8.3" cy="5.8" r="1.2" fill="#2e2e2e"/></svg>
<svg class="a" style="left:1032.5px;top:728px;" width="19" height="14" viewBox="0 0 19 14"><path d="M0.5 7 C3 2.5 6 1 9.5 1 C13 1 16 2.5 18.5 7 C16 11.5 13 13 9.5 13 C6 13 3 11.5 0.5 7 Z" fill="none" stroke="#c3c3c3" stroke-width="1.6"/><circle cx="9.5" cy="7" r="3.7" fill="#c3c3c3"/><circle cx="8.3" cy="5.8" r="1.2" fill="#1f1f1f"/></svg>
<svg class="a" style="left:1065px;top:671px;" width="10" height="17" viewBox="0 0 10 17"><rect x="1" y="1" width="7" height="8" rx="1" fill="none" stroke="#c3c3c3" stroke-width="1.8"/><path d="M1.5 16.5 L1.5 13 C1.5 11 7.5 11 7.5 13 L7.5 16.5" fill="none" stroke="#c3c3c3" stroke-width="1.8"/><rect x="3.5" y="9" width="2" height="3" fill="#c3c3c3"/></svg>
<div class="a" style="left:1103px;top:699px;width:36px;height:15.6px;background:#000;"></div>
<div class="a" style="left:1105px;top:701px;width:27px;height:11.6px;background:#ebe8f0;"></div>
<div class="a" style="left:1132px;top:701px;width:5px;height:11.6px;background:repeating-linear-gradient(180deg,#999 0 3px,#666 3px 6px)"></div>
<svg class="a" style="left:1105px;top:701px;" width="32" height="11.6" viewBox="0 0 32 11.6"><ellipse cx="4.09" cy="3.87" rx="1.35" ry="1.37" fill="#7a4cc0" opacity="1"/><ellipse cx="7.33" cy="3.74" rx="1.22" ry="1.63" fill="#7a4cc0" opacity="1"/><ellipse cx="10.35" cy="3.07" rx="0.93" ry="1.61" fill="#7a4cc0" opacity="1"/><ellipse cx="13.93" cy="2.31" rx="1.50" ry="1.27" fill="#7a4cc0" opacity="1"/><ellipse cx="14.94" cy="5.21" rx="1.09" ry="0.75" fill="#7a4cc0" opacity="1"/><ellipse cx="17.37" cy="2.77" rx="0.71" ry="1.06" fill="#7a4cc0" opacity="1"/><ellipse cx="20.55" cy="3.29" rx="0.99" ry="1.93" fill="#7a4cc0" opacity="1"/><ellipse cx="24.42" cy="3.99" rx="1.17" ry="1.73" fill="#7a4cc0" opacity="1"/><ellipse cx="4.01" cy="9.50" rx="1.00" ry="0.79" fill="#7a4cc0" opacity="1"/><ellipse cx="6.42" cy="8.27" rx="0.86" ry="0.68" fill="#7a4cc0" opacity="1"/><ellipse cx="8.74" cy="9.27" rx="0.82" ry="1.32" fill="#7a4cc0" opacity="1"/><ellipse cx="11.69" cy="8.01" rx="1.31" ry="1.55" fill="#7a4cc0" opacity="1"/><ellipse cx="15.44" cy="8.62" rx="1.25" ry="1.27" fill="#7a4cc0" opacity="1"/><ellipse cx="19.69" cy="8.52" rx="1.77" ry="1.49" fill="#7a4cc0" opacity="1"/><ellipse cx="23.99" cy="8.67" rx="1.40" ry="1.20" fill="#7a4cc0" opacity="1"/></svg>
<div class="a" style="left:1103px;top:726.7px;width:36px;height:16.2px;background:#fff;"></div>
<div class="a" style="left:1105px;top:728.7px;width:32px;height:12.2px;background:#0e0e0e;"></div>
<svg class="a" style="left:1105px;top:728.7px;" width="32" height="11.6" viewBox="0 0 32 11.6"><ellipse cx="4.09" cy="3.87" rx="1.35" ry="1.37" fill="#6a6a6a" opacity="1"/><ellipse cx="7.33" cy="3.74" rx="1.22" ry="1.63" fill="#6a6a6a" opacity="1"/><ellipse cx="10.35" cy="3.07" rx="0.93" ry="1.61" fill="#6a6a6a" opacity="1"/><ellipse cx="13.93" cy="2.31" rx="1.50" ry="1.27" fill="#6a6a6a" opacity="1"/><ellipse cx="14.94" cy="5.21" rx="1.09" ry="0.75" fill="#6a6a6a" opacity="1"/><ellipse cx="17.37" cy="2.77" rx="0.71" ry="1.06" fill="#6a6a6a" opacity="1"/><ellipse cx="20.55" cy="3.29" rx="0.99" ry="1.93" fill="#6a6a6a" opacity="1"/><ellipse cx="24.42" cy="3.99" rx="1.17" ry="1.73" fill="#6a6a6a" opacity="1"/><ellipse cx="4.01" cy="9.50" rx="1.00" ry="0.79" fill="#6a6a6a" opacity="1"/><ellipse cx="6.42" cy="8.27" rx="0.86" ry="0.68" fill="#6a6a6a" opacity="1"/><ellipse cx="8.74" cy="9.27" rx="0.82" ry="1.32" fill="#6a6a6a" opacity="1"/><ellipse cx="11.69" cy="8.01" rx="1.31" ry="1.55" fill="#6a6a6a" opacity="1"/><ellipse cx="15.44" cy="8.62" rx="1.25" ry="1.27" fill="#6a6a6a" opacity="1"/><ellipse cx="19.69" cy="8.52" rx="1.77" ry="1.49" fill="#6a6a6a" opacity="1"/><ellipse cx="23.99" cy="8.67" rx="1.40" ry="1.20" fill="#6a6a6a" opacity="1"/></svg>
<div class="a tx" style="left:1142.7px;top:701.5px;font-size:10.5px;color:#d8d8d8;">25030607_A5_XL.tif</div>
<div class="a tx" style="left:1142.7px;top:729.3px;font-size:10.5px;color:#e6e6e6;">2P241018012A2.tif</div>
<svg class="a" style="left:1040px;top:735px;" width="50" height="56" viewBox="0 0 50 56"><path d="M8.5 51.5 L35 17" stroke="#1e88f0" stroke-width="3.2" stroke-linecap="round"/><path d="M43.5 5.5 L27.5 16.5 L40.5 26 Z" fill="#1e88f0"/></svg>
<svg class="a" style="left:1025px;top:828px;" width="223" height="27" viewBox="0 0 223 27"><g fill="none" stroke="#c8c8c8" stroke-width="1.6">
<path d="M9 9.5 L9 22 L21 22 L21 10.5 L18 7 L13 7"/><path d="M17.5 7 L17.5 10.5 L21 10.5"/>
<path d="M4.5 6.5 L10.5 6.5 M7.5 3.5 L7.5 9.5" stroke-width="1.8"/>
</g>
<path d="M33 7.5 L39 7.5 L40.5 9.5 L48 9.5 L48 22 L33 22 Z" fill="#c8c8c8"/><path d="M40.5 12.5 L40.5 20 M36.8 16.2 L44.3 16.2" stroke="#3a3a3a" stroke-width="1.8"/>
<path d="M62.5 15 L69 8.5 L75.5 15" fill="none" stroke="#c8c8c8" stroke-width="2.2"/>
<path d="M89.5 10 L96 16.5 L102.5 10" fill="none" stroke="#c8c8c8" stroke-width="2.2"/>
<path d="M116.5 8 L126 8 L126 15.5 L116.5 15.5 Z M120 15.5 L120 19 L130 19 L130 12 L126 12" fill="none" stroke="#c8c8c8" stroke-width="1.4"/>
<path d="M145 10 L152 10 L150 12.5 L143 12.5 Z M145 14 L152 14 L150 16.5 L143 16.5 Z M145 18 L152 18 L150 20.5 L143 20.5 Z" fill="#c8c8c8"/><path d="M155 8 L155 19 M152 16 L155 20 L158 16" fill="none" stroke="#c8c8c8" stroke-width="1.6"/>
<path d="M173 7 L182 7 L182 12 C182 15 173 15 173 12 Z" fill="#c8c8c8"/><path d="M170 22 L174 16 L185 16 L181 22 Z" fill="#c8c8c8"/>
<rect x="198.5" y="7" width="16" height="16" rx="1.5" fill="#c8c8c8"/><path d="M202 10.5 L211 19.5 M211 10.5 L202 19.5" stroke="#3a3a3a" stroke-width="2.4"/>
</svg>
</body></html>
